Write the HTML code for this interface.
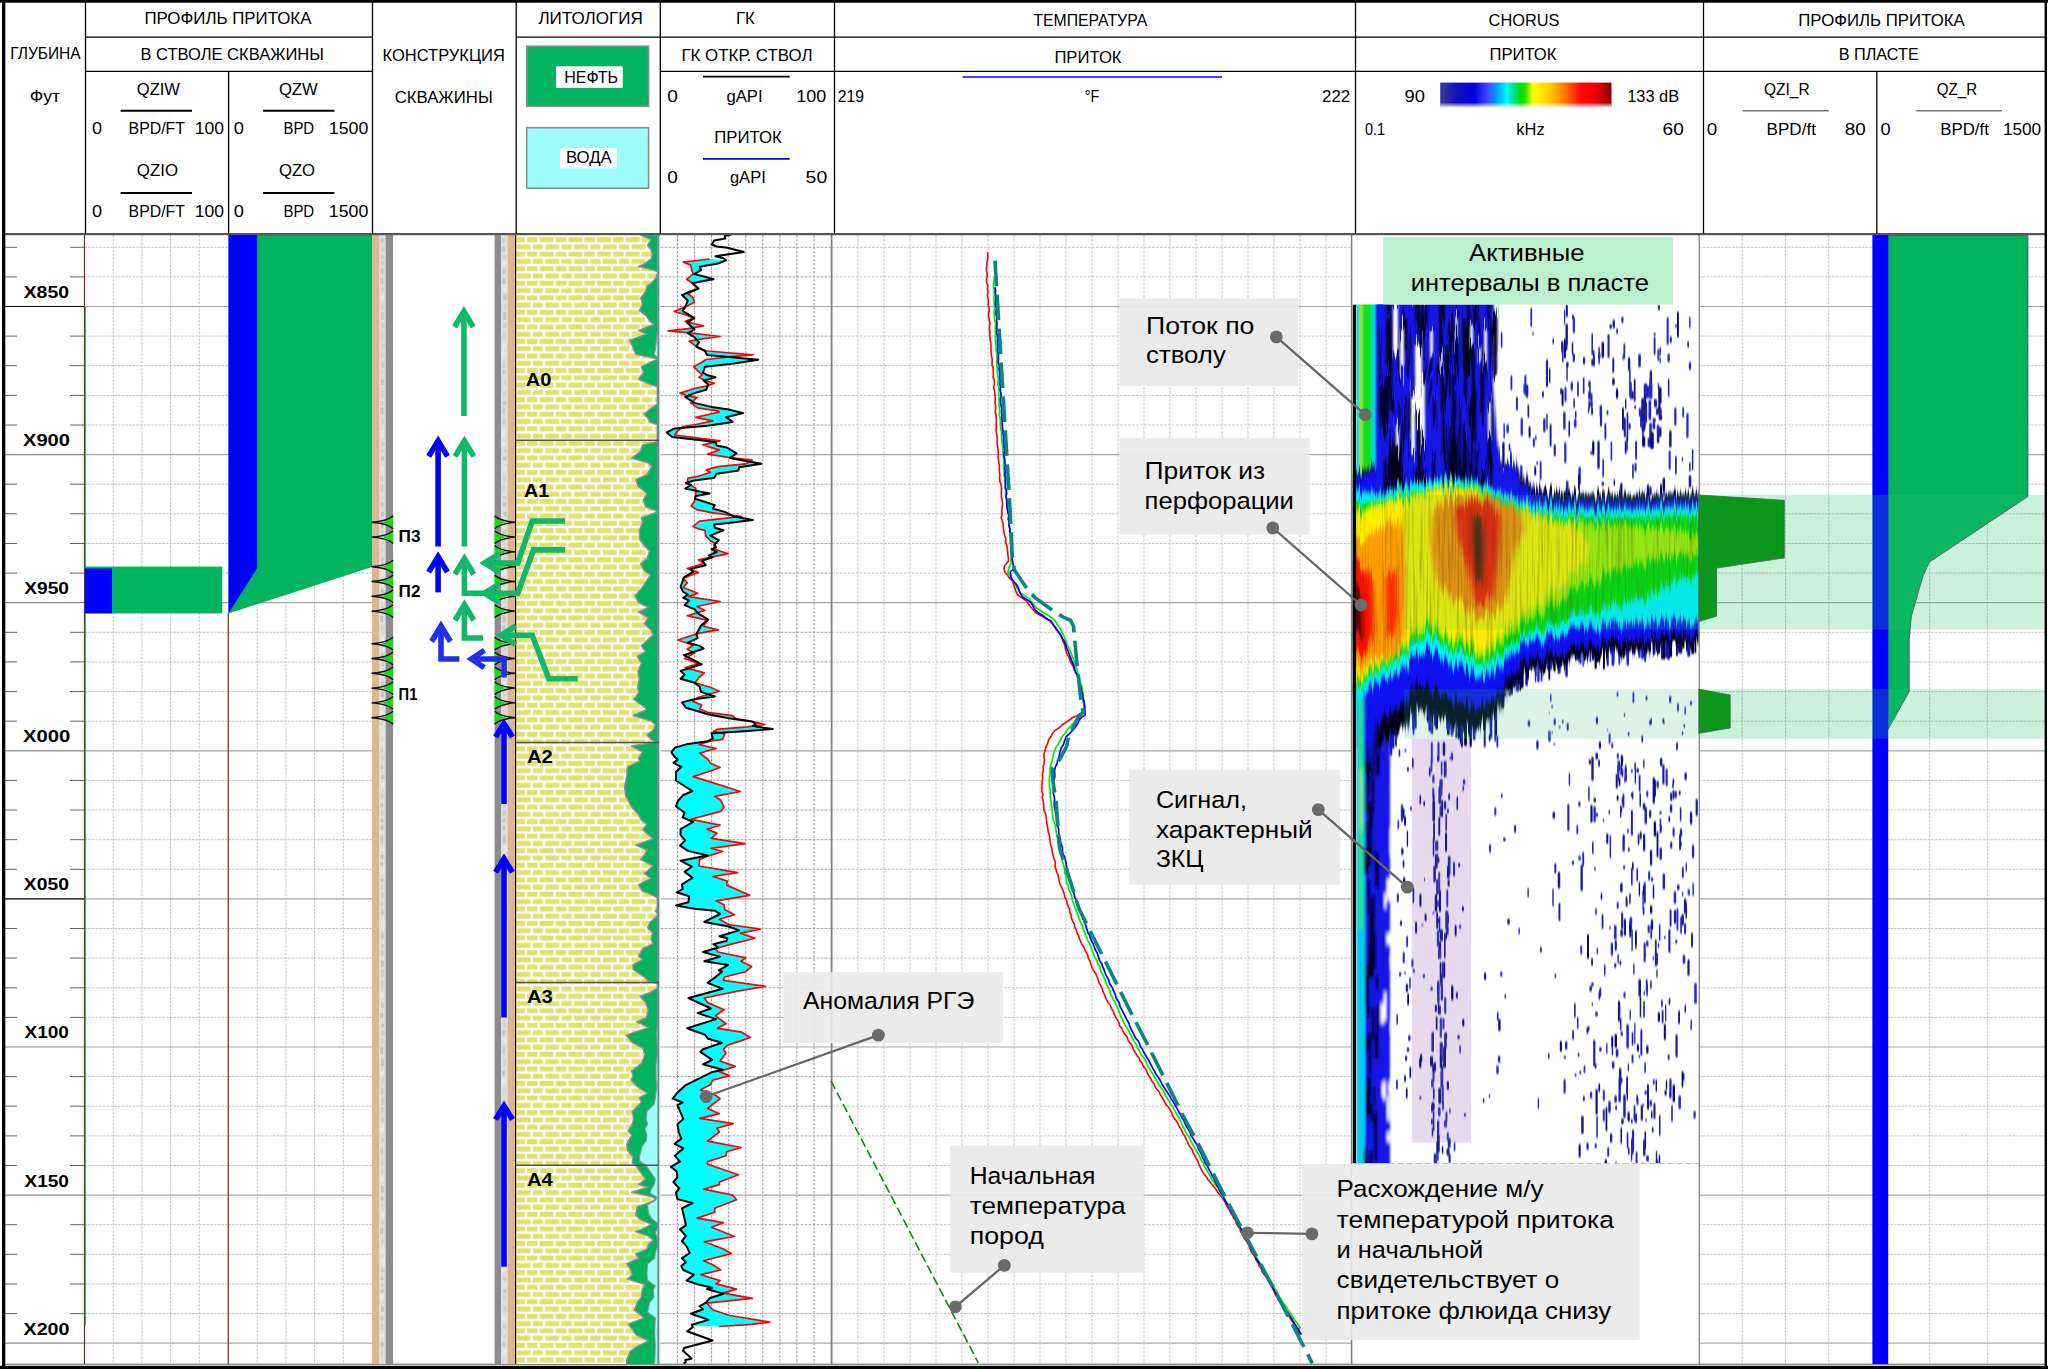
<!DOCTYPE html>
<html lang="ru"><head><meta charset="utf-8"><title>Профиль притока</title>
<style>
html,body{margin:0;padding:0;background:#fff;}
body{width:2048px;height:1369px;overflow:hidden;}
svg{display:block;font-family:"Liberation Sans", sans-serif;}
</style></head><body>
<svg width="2048" height="1369" viewBox="0 0 2048 1369">
<rect x="0" y="0" width="2048" height="1369" fill="#fff" />
<line x1="84.5" y1="247.3" x2="228" y2="247.3" stroke="#bcbcbc" stroke-width="0.9" stroke-dasharray="2.6 1.1"/>
<line x1="84.5" y1="276.9" x2="228" y2="276.9" stroke="#bcbcbc" stroke-width="0.9" stroke-dasharray="2.6 1.1"/>
<line x1="84.5" y1="306.5" x2="228" y2="306.5" stroke="#a8a8a8" stroke-width="1.2" />
<line x1="84.5" y1="336.1" x2="228" y2="336.1" stroke="#bcbcbc" stroke-width="0.9" stroke-dasharray="2.6 1.1"/>
<line x1="84.5" y1="365.7" x2="228" y2="365.7" stroke="#bcbcbc" stroke-width="0.9" stroke-dasharray="2.6 1.1"/>
<line x1="84.5" y1="395.4" x2="228" y2="395.4" stroke="#bcbcbc" stroke-width="0.9" stroke-dasharray="2.6 1.1"/>
<line x1="84.5" y1="425.0" x2="228" y2="425.0" stroke="#bcbcbc" stroke-width="0.9" stroke-dasharray="2.6 1.1"/>
<line x1="84.5" y1="454.6" x2="228" y2="454.6" stroke="#a8a8a8" stroke-width="1.2" />
<line x1="84.5" y1="484.2" x2="228" y2="484.2" stroke="#bcbcbc" stroke-width="0.9" stroke-dasharray="2.6 1.1"/>
<line x1="84.5" y1="513.8" x2="228" y2="513.8" stroke="#bcbcbc" stroke-width="0.9" stroke-dasharray="2.6 1.1"/>
<line x1="84.5" y1="543.5" x2="228" y2="543.5" stroke="#bcbcbc" stroke-width="0.9" stroke-dasharray="2.6 1.1"/>
<line x1="84.5" y1="573.1" x2="228" y2="573.1" stroke="#bcbcbc" stroke-width="0.9" stroke-dasharray="2.6 1.1"/>
<line x1="84.5" y1="602.7" x2="228" y2="602.7" stroke="#a8a8a8" stroke-width="1.2" />
<line x1="84.5" y1="632.3" x2="228" y2="632.3" stroke="#bcbcbc" stroke-width="0.9" stroke-dasharray="2.6 1.1"/>
<line x1="84.5" y1="661.9" x2="228" y2="661.9" stroke="#bcbcbc" stroke-width="0.9" stroke-dasharray="2.6 1.1"/>
<line x1="84.5" y1="691.6" x2="228" y2="691.6" stroke="#bcbcbc" stroke-width="0.9" stroke-dasharray="2.6 1.1"/>
<line x1="84.5" y1="721.2" x2="228" y2="721.2" stroke="#bcbcbc" stroke-width="0.9" stroke-dasharray="2.6 1.1"/>
<line x1="84.5" y1="750.8" x2="228" y2="750.8" stroke="#a8a8a8" stroke-width="1.2" />
<line x1="84.5" y1="780.4" x2="228" y2="780.4" stroke="#bcbcbc" stroke-width="0.9" stroke-dasharray="2.6 1.1"/>
<line x1="84.5" y1="810.0" x2="228" y2="810.0" stroke="#bcbcbc" stroke-width="0.9" stroke-dasharray="2.6 1.1"/>
<line x1="84.5" y1="839.7" x2="228" y2="839.7" stroke="#bcbcbc" stroke-width="0.9" stroke-dasharray="2.6 1.1"/>
<line x1="84.5" y1="869.3" x2="228" y2="869.3" stroke="#bcbcbc" stroke-width="0.9" stroke-dasharray="2.6 1.1"/>
<line x1="84.5" y1="898.9" x2="228" y2="898.9" stroke="#a8a8a8" stroke-width="1.2" />
<line x1="84.5" y1="928.5" x2="228" y2="928.5" stroke="#bcbcbc" stroke-width="0.9" stroke-dasharray="2.6 1.1"/>
<line x1="84.5" y1="958.1" x2="228" y2="958.1" stroke="#bcbcbc" stroke-width="0.9" stroke-dasharray="2.6 1.1"/>
<line x1="84.5" y1="987.8" x2="228" y2="987.8" stroke="#bcbcbc" stroke-width="0.9" stroke-dasharray="2.6 1.1"/>
<line x1="84.5" y1="1017.4" x2="228" y2="1017.4" stroke="#bcbcbc" stroke-width="0.9" stroke-dasharray="2.6 1.1"/>
<line x1="84.5" y1="1047.0" x2="228" y2="1047.0" stroke="#a8a8a8" stroke-width="1.2" />
<line x1="84.5" y1="1076.6" x2="228" y2="1076.6" stroke="#bcbcbc" stroke-width="0.9" stroke-dasharray="2.6 1.1"/>
<line x1="84.5" y1="1106.2" x2="228" y2="1106.2" stroke="#bcbcbc" stroke-width="0.9" stroke-dasharray="2.6 1.1"/>
<line x1="84.5" y1="1135.9" x2="228" y2="1135.9" stroke="#bcbcbc" stroke-width="0.9" stroke-dasharray="2.6 1.1"/>
<line x1="84.5" y1="1165.5" x2="228" y2="1165.5" stroke="#bcbcbc" stroke-width="0.9" stroke-dasharray="2.6 1.1"/>
<line x1="84.5" y1="1195.1" x2="228" y2="1195.1" stroke="#a8a8a8" stroke-width="1.2" />
<line x1="84.5" y1="1224.7" x2="228" y2="1224.7" stroke="#bcbcbc" stroke-width="0.9" stroke-dasharray="2.6 1.1"/>
<line x1="84.5" y1="1254.3" x2="228" y2="1254.3" stroke="#bcbcbc" stroke-width="0.9" stroke-dasharray="2.6 1.1"/>
<line x1="84.5" y1="1284.0" x2="228" y2="1284.0" stroke="#bcbcbc" stroke-width="0.9" stroke-dasharray="2.6 1.1"/>
<line x1="84.5" y1="1313.6" x2="228" y2="1313.6" stroke="#bcbcbc" stroke-width="0.9" stroke-dasharray="2.6 1.1"/>
<line x1="84.5" y1="1343.2" x2="228" y2="1343.2" stroke="#a8a8a8" stroke-width="1.2" />
<line x1="113.2" y1="235" x2="113.2" y2="1364" stroke="#bcbcbc" stroke-width="0.9" stroke-dasharray="2.6 1.1"/>
<line x1="141.9" y1="235" x2="141.9" y2="1364" stroke="#bcbcbc" stroke-width="0.9" stroke-dasharray="2.6 1.1"/>
<line x1="170.6" y1="235" x2="170.6" y2="1364" stroke="#bcbcbc" stroke-width="0.9" stroke-dasharray="2.6 1.1"/>
<line x1="199.3" y1="235" x2="199.3" y2="1364" stroke="#bcbcbc" stroke-width="0.9" stroke-dasharray="2.6 1.1"/>
<line x1="228.5" y1="247.3" x2="372" y2="247.3" stroke="#bcbcbc" stroke-width="0.9" stroke-dasharray="2.6 1.1"/>
<line x1="228.5" y1="276.9" x2="372" y2="276.9" stroke="#bcbcbc" stroke-width="0.9" stroke-dasharray="2.6 1.1"/>
<line x1="228.5" y1="306.5" x2="372" y2="306.5" stroke="#a8a8a8" stroke-width="1.2" />
<line x1="228.5" y1="336.1" x2="372" y2="336.1" stroke="#bcbcbc" stroke-width="0.9" stroke-dasharray="2.6 1.1"/>
<line x1="228.5" y1="365.7" x2="372" y2="365.7" stroke="#bcbcbc" stroke-width="0.9" stroke-dasharray="2.6 1.1"/>
<line x1="228.5" y1="395.4" x2="372" y2="395.4" stroke="#bcbcbc" stroke-width="0.9" stroke-dasharray="2.6 1.1"/>
<line x1="228.5" y1="425.0" x2="372" y2="425.0" stroke="#bcbcbc" stroke-width="0.9" stroke-dasharray="2.6 1.1"/>
<line x1="228.5" y1="454.6" x2="372" y2="454.6" stroke="#a8a8a8" stroke-width="1.2" />
<line x1="228.5" y1="484.2" x2="372" y2="484.2" stroke="#bcbcbc" stroke-width="0.9" stroke-dasharray="2.6 1.1"/>
<line x1="228.5" y1="513.8" x2="372" y2="513.8" stroke="#bcbcbc" stroke-width="0.9" stroke-dasharray="2.6 1.1"/>
<line x1="228.5" y1="543.5" x2="372" y2="543.5" stroke="#bcbcbc" stroke-width="0.9" stroke-dasharray="2.6 1.1"/>
<line x1="228.5" y1="573.1" x2="372" y2="573.1" stroke="#bcbcbc" stroke-width="0.9" stroke-dasharray="2.6 1.1"/>
<line x1="228.5" y1="602.7" x2="372" y2="602.7" stroke="#a8a8a8" stroke-width="1.2" />
<line x1="228.5" y1="632.3" x2="372" y2="632.3" stroke="#bcbcbc" stroke-width="0.9" stroke-dasharray="2.6 1.1"/>
<line x1="228.5" y1="661.9" x2="372" y2="661.9" stroke="#bcbcbc" stroke-width="0.9" stroke-dasharray="2.6 1.1"/>
<line x1="228.5" y1="691.6" x2="372" y2="691.6" stroke="#bcbcbc" stroke-width="0.9" stroke-dasharray="2.6 1.1"/>
<line x1="228.5" y1="721.2" x2="372" y2="721.2" stroke="#bcbcbc" stroke-width="0.9" stroke-dasharray="2.6 1.1"/>
<line x1="228.5" y1="750.8" x2="372" y2="750.8" stroke="#a8a8a8" stroke-width="1.2" />
<line x1="228.5" y1="780.4" x2="372" y2="780.4" stroke="#bcbcbc" stroke-width="0.9" stroke-dasharray="2.6 1.1"/>
<line x1="228.5" y1="810.0" x2="372" y2="810.0" stroke="#bcbcbc" stroke-width="0.9" stroke-dasharray="2.6 1.1"/>
<line x1="228.5" y1="839.7" x2="372" y2="839.7" stroke="#bcbcbc" stroke-width="0.9" stroke-dasharray="2.6 1.1"/>
<line x1="228.5" y1="869.3" x2="372" y2="869.3" stroke="#bcbcbc" stroke-width="0.9" stroke-dasharray="2.6 1.1"/>
<line x1="228.5" y1="898.9" x2="372" y2="898.9" stroke="#a8a8a8" stroke-width="1.2" />
<line x1="228.5" y1="928.5" x2="372" y2="928.5" stroke="#bcbcbc" stroke-width="0.9" stroke-dasharray="2.6 1.1"/>
<line x1="228.5" y1="958.1" x2="372" y2="958.1" stroke="#bcbcbc" stroke-width="0.9" stroke-dasharray="2.6 1.1"/>
<line x1="228.5" y1="987.8" x2="372" y2="987.8" stroke="#bcbcbc" stroke-width="0.9" stroke-dasharray="2.6 1.1"/>
<line x1="228.5" y1="1017.4" x2="372" y2="1017.4" stroke="#bcbcbc" stroke-width="0.9" stroke-dasharray="2.6 1.1"/>
<line x1="228.5" y1="1047.0" x2="372" y2="1047.0" stroke="#a8a8a8" stroke-width="1.2" />
<line x1="228.5" y1="1076.6" x2="372" y2="1076.6" stroke="#bcbcbc" stroke-width="0.9" stroke-dasharray="2.6 1.1"/>
<line x1="228.5" y1="1106.2" x2="372" y2="1106.2" stroke="#bcbcbc" stroke-width="0.9" stroke-dasharray="2.6 1.1"/>
<line x1="228.5" y1="1135.9" x2="372" y2="1135.9" stroke="#bcbcbc" stroke-width="0.9" stroke-dasharray="2.6 1.1"/>
<line x1="228.5" y1="1165.5" x2="372" y2="1165.5" stroke="#bcbcbc" stroke-width="0.9" stroke-dasharray="2.6 1.1"/>
<line x1="228.5" y1="1195.1" x2="372" y2="1195.1" stroke="#a8a8a8" stroke-width="1.2" />
<line x1="228.5" y1="1224.7" x2="372" y2="1224.7" stroke="#bcbcbc" stroke-width="0.9" stroke-dasharray="2.6 1.1"/>
<line x1="228.5" y1="1254.3" x2="372" y2="1254.3" stroke="#bcbcbc" stroke-width="0.9" stroke-dasharray="2.6 1.1"/>
<line x1="228.5" y1="1284.0" x2="372" y2="1284.0" stroke="#bcbcbc" stroke-width="0.9" stroke-dasharray="2.6 1.1"/>
<line x1="228.5" y1="1313.6" x2="372" y2="1313.6" stroke="#bcbcbc" stroke-width="0.9" stroke-dasharray="2.6 1.1"/>
<line x1="228.5" y1="1343.2" x2="372" y2="1343.2" stroke="#a8a8a8" stroke-width="1.2" />
<line x1="257.2" y1="235" x2="257.2" y2="1364" stroke="#bcbcbc" stroke-width="0.9" stroke-dasharray="2.6 1.1"/>
<line x1="285.9" y1="235" x2="285.9" y2="1364" stroke="#bcbcbc" stroke-width="0.9" stroke-dasharray="2.6 1.1"/>
<line x1="314.6" y1="235" x2="314.6" y2="1364" stroke="#bcbcbc" stroke-width="0.9" stroke-dasharray="2.6 1.1"/>
<line x1="343.3" y1="235" x2="343.3" y2="1364" stroke="#bcbcbc" stroke-width="0.9" stroke-dasharray="2.6 1.1"/>
<line x1="660.5" y1="247.3" x2="831" y2="247.3" stroke="#a8a8a8" stroke-width="1" stroke-dasharray="2.8 1.2"/>
<line x1="660.5" y1="276.9" x2="831" y2="276.9" stroke="#a8a8a8" stroke-width="1" stroke-dasharray="2.8 1.2"/>
<line x1="660.5" y1="306.5" x2="831" y2="306.5" stroke="#a8a8a8" stroke-width="1.2" />
<line x1="660.5" y1="336.1" x2="831" y2="336.1" stroke="#a8a8a8" stroke-width="1" stroke-dasharray="2.8 1.2"/>
<line x1="660.5" y1="365.7" x2="831" y2="365.7" stroke="#a8a8a8" stroke-width="1" stroke-dasharray="2.8 1.2"/>
<line x1="660.5" y1="395.4" x2="831" y2="395.4" stroke="#a8a8a8" stroke-width="1" stroke-dasharray="2.8 1.2"/>
<line x1="660.5" y1="425.0" x2="831" y2="425.0" stroke="#a8a8a8" stroke-width="1" stroke-dasharray="2.8 1.2"/>
<line x1="660.5" y1="454.6" x2="831" y2="454.6" stroke="#a8a8a8" stroke-width="1.2" />
<line x1="660.5" y1="484.2" x2="831" y2="484.2" stroke="#a8a8a8" stroke-width="1" stroke-dasharray="2.8 1.2"/>
<line x1="660.5" y1="513.8" x2="831" y2="513.8" stroke="#a8a8a8" stroke-width="1" stroke-dasharray="2.8 1.2"/>
<line x1="660.5" y1="543.5" x2="831" y2="543.5" stroke="#a8a8a8" stroke-width="1" stroke-dasharray="2.8 1.2"/>
<line x1="660.5" y1="573.1" x2="831" y2="573.1" stroke="#a8a8a8" stroke-width="1" stroke-dasharray="2.8 1.2"/>
<line x1="660.5" y1="602.7" x2="831" y2="602.7" stroke="#a8a8a8" stroke-width="1.2" />
<line x1="660.5" y1="632.3" x2="831" y2="632.3" stroke="#a8a8a8" stroke-width="1" stroke-dasharray="2.8 1.2"/>
<line x1="660.5" y1="661.9" x2="831" y2="661.9" stroke="#a8a8a8" stroke-width="1" stroke-dasharray="2.8 1.2"/>
<line x1="660.5" y1="691.6" x2="831" y2="691.6" stroke="#a8a8a8" stroke-width="1" stroke-dasharray="2.8 1.2"/>
<line x1="660.5" y1="721.2" x2="831" y2="721.2" stroke="#a8a8a8" stroke-width="1" stroke-dasharray="2.8 1.2"/>
<line x1="660.5" y1="750.8" x2="831" y2="750.8" stroke="#a8a8a8" stroke-width="1.2" />
<line x1="660.5" y1="780.4" x2="831" y2="780.4" stroke="#a8a8a8" stroke-width="1" stroke-dasharray="2.8 1.2"/>
<line x1="660.5" y1="810.0" x2="831" y2="810.0" stroke="#a8a8a8" stroke-width="1" stroke-dasharray="2.8 1.2"/>
<line x1="660.5" y1="839.7" x2="831" y2="839.7" stroke="#a8a8a8" stroke-width="1" stroke-dasharray="2.8 1.2"/>
<line x1="660.5" y1="869.3" x2="831" y2="869.3" stroke="#a8a8a8" stroke-width="1" stroke-dasharray="2.8 1.2"/>
<line x1="660.5" y1="898.9" x2="831" y2="898.9" stroke="#a8a8a8" stroke-width="1.2" />
<line x1="660.5" y1="928.5" x2="831" y2="928.5" stroke="#a8a8a8" stroke-width="1" stroke-dasharray="2.8 1.2"/>
<line x1="660.5" y1="958.1" x2="831" y2="958.1" stroke="#a8a8a8" stroke-width="1" stroke-dasharray="2.8 1.2"/>
<line x1="660.5" y1="987.8" x2="831" y2="987.8" stroke="#a8a8a8" stroke-width="1" stroke-dasharray="2.8 1.2"/>
<line x1="660.5" y1="1017.4" x2="831" y2="1017.4" stroke="#a8a8a8" stroke-width="1" stroke-dasharray="2.8 1.2"/>
<line x1="660.5" y1="1047.0" x2="831" y2="1047.0" stroke="#a8a8a8" stroke-width="1.2" />
<line x1="660.5" y1="1076.6" x2="831" y2="1076.6" stroke="#a8a8a8" stroke-width="1" stroke-dasharray="2.8 1.2"/>
<line x1="660.5" y1="1106.2" x2="831" y2="1106.2" stroke="#a8a8a8" stroke-width="1" stroke-dasharray="2.8 1.2"/>
<line x1="660.5" y1="1135.9" x2="831" y2="1135.9" stroke="#a8a8a8" stroke-width="1" stroke-dasharray="2.8 1.2"/>
<line x1="660.5" y1="1165.5" x2="831" y2="1165.5" stroke="#a8a8a8" stroke-width="1" stroke-dasharray="2.8 1.2"/>
<line x1="660.5" y1="1195.1" x2="831" y2="1195.1" stroke="#a8a8a8" stroke-width="1.2" />
<line x1="660.5" y1="1224.7" x2="831" y2="1224.7" stroke="#a8a8a8" stroke-width="1" stroke-dasharray="2.8 1.2"/>
<line x1="660.5" y1="1254.3" x2="831" y2="1254.3" stroke="#a8a8a8" stroke-width="1" stroke-dasharray="2.8 1.2"/>
<line x1="660.5" y1="1284.0" x2="831" y2="1284.0" stroke="#a8a8a8" stroke-width="1" stroke-dasharray="2.8 1.2"/>
<line x1="660.5" y1="1313.6" x2="831" y2="1313.6" stroke="#a8a8a8" stroke-width="1" stroke-dasharray="2.8 1.2"/>
<line x1="660.5" y1="1343.2" x2="831" y2="1343.2" stroke="#a8a8a8" stroke-width="1.2" />
<line x1="677.5" y1="235" x2="677.5" y2="1364" stroke="#9c9c9c" stroke-width="1" stroke-dasharray="2.8 1.2"/>
<line x1="694.6" y1="235" x2="694.6" y2="1364" stroke="#9c9c9c" stroke-width="1" stroke-dasharray="2.8 1.2"/>
<line x1="711.6" y1="235" x2="711.6" y2="1364" stroke="#9c9c9c" stroke-width="1" stroke-dasharray="2.8 1.2"/>
<line x1="728.7" y1="235" x2="728.7" y2="1364" stroke="#9c9c9c" stroke-width="1" stroke-dasharray="2.8 1.2"/>
<line x1="745.8" y1="235" x2="745.8" y2="1364" stroke="#9c9c9c" stroke-width="1" stroke-dasharray="2.8 1.2"/>
<line x1="762.8" y1="235" x2="762.8" y2="1364" stroke="#9c9c9c" stroke-width="1" stroke-dasharray="2.8 1.2"/>
<line x1="779.9" y1="235" x2="779.9" y2="1364" stroke="#9c9c9c" stroke-width="1" stroke-dasharray="2.8 1.2"/>
<line x1="796.9" y1="235" x2="796.9" y2="1364" stroke="#9c9c9c" stroke-width="1" stroke-dasharray="2.8 1.2"/>
<line x1="814.0" y1="235" x2="814.0" y2="1364" stroke="#9c9c9c" stroke-width="1" stroke-dasharray="2.8 1.2"/>
<line x1="832" y1="247.3" x2="1352" y2="247.3" stroke="#c2c2c2" stroke-width="0.9" stroke-dasharray="2.8 1.2"/>
<line x1="832" y1="276.9" x2="1352" y2="276.9" stroke="#c2c2c2" stroke-width="0.9" stroke-dasharray="2.8 1.2"/>
<line x1="832" y1="306.5" x2="1352" y2="306.5" stroke="#a8a8a8" stroke-width="1.2" />
<line x1="832" y1="336.1" x2="1352" y2="336.1" stroke="#c2c2c2" stroke-width="0.9" stroke-dasharray="2.8 1.2"/>
<line x1="832" y1="365.7" x2="1352" y2="365.7" stroke="#c2c2c2" stroke-width="0.9" stroke-dasharray="2.8 1.2"/>
<line x1="832" y1="395.4" x2="1352" y2="395.4" stroke="#c2c2c2" stroke-width="0.9" stroke-dasharray="2.8 1.2"/>
<line x1="832" y1="425.0" x2="1352" y2="425.0" stroke="#c2c2c2" stroke-width="0.9" stroke-dasharray="2.8 1.2"/>
<line x1="832" y1="454.6" x2="1352" y2="454.6" stroke="#a8a8a8" stroke-width="1.2" />
<line x1="832" y1="484.2" x2="1352" y2="484.2" stroke="#c2c2c2" stroke-width="0.9" stroke-dasharray="2.8 1.2"/>
<line x1="832" y1="513.8" x2="1352" y2="513.8" stroke="#c2c2c2" stroke-width="0.9" stroke-dasharray="2.8 1.2"/>
<line x1="832" y1="543.5" x2="1352" y2="543.5" stroke="#c2c2c2" stroke-width="0.9" stroke-dasharray="2.8 1.2"/>
<line x1="832" y1="573.1" x2="1352" y2="573.1" stroke="#c2c2c2" stroke-width="0.9" stroke-dasharray="2.8 1.2"/>
<line x1="832" y1="602.7" x2="1352" y2="602.7" stroke="#a8a8a8" stroke-width="1.2" />
<line x1="832" y1="632.3" x2="1352" y2="632.3" stroke="#c2c2c2" stroke-width="0.9" stroke-dasharray="2.8 1.2"/>
<line x1="832" y1="661.9" x2="1352" y2="661.9" stroke="#c2c2c2" stroke-width="0.9" stroke-dasharray="2.8 1.2"/>
<line x1="832" y1="691.6" x2="1352" y2="691.6" stroke="#c2c2c2" stroke-width="0.9" stroke-dasharray="2.8 1.2"/>
<line x1="832" y1="721.2" x2="1352" y2="721.2" stroke="#c2c2c2" stroke-width="0.9" stroke-dasharray="2.8 1.2"/>
<line x1="832" y1="750.8" x2="1352" y2="750.8" stroke="#a8a8a8" stroke-width="1.2" />
<line x1="832" y1="780.4" x2="1352" y2="780.4" stroke="#c2c2c2" stroke-width="0.9" stroke-dasharray="2.8 1.2"/>
<line x1="832" y1="810.0" x2="1352" y2="810.0" stroke="#c2c2c2" stroke-width="0.9" stroke-dasharray="2.8 1.2"/>
<line x1="832" y1="839.7" x2="1352" y2="839.7" stroke="#c2c2c2" stroke-width="0.9" stroke-dasharray="2.8 1.2"/>
<line x1="832" y1="869.3" x2="1352" y2="869.3" stroke="#c2c2c2" stroke-width="0.9" stroke-dasharray="2.8 1.2"/>
<line x1="832" y1="898.9" x2="1352" y2="898.9" stroke="#a8a8a8" stroke-width="1.2" />
<line x1="832" y1="928.5" x2="1352" y2="928.5" stroke="#c2c2c2" stroke-width="0.9" stroke-dasharray="2.8 1.2"/>
<line x1="832" y1="958.1" x2="1352" y2="958.1" stroke="#c2c2c2" stroke-width="0.9" stroke-dasharray="2.8 1.2"/>
<line x1="832" y1="987.8" x2="1352" y2="987.8" stroke="#c2c2c2" stroke-width="0.9" stroke-dasharray="2.8 1.2"/>
<line x1="832" y1="1017.4" x2="1352" y2="1017.4" stroke="#c2c2c2" stroke-width="0.9" stroke-dasharray="2.8 1.2"/>
<line x1="832" y1="1047.0" x2="1352" y2="1047.0" stroke="#a8a8a8" stroke-width="1.2" />
<line x1="832" y1="1076.6" x2="1352" y2="1076.6" stroke="#c2c2c2" stroke-width="0.9" stroke-dasharray="2.8 1.2"/>
<line x1="832" y1="1106.2" x2="1352" y2="1106.2" stroke="#c2c2c2" stroke-width="0.9" stroke-dasharray="2.8 1.2"/>
<line x1="832" y1="1135.9" x2="1352" y2="1135.9" stroke="#c2c2c2" stroke-width="0.9" stroke-dasharray="2.8 1.2"/>
<line x1="832" y1="1165.5" x2="1352" y2="1165.5" stroke="#c2c2c2" stroke-width="0.9" stroke-dasharray="2.8 1.2"/>
<line x1="832" y1="1195.1" x2="1352" y2="1195.1" stroke="#a8a8a8" stroke-width="1.2" />
<line x1="832" y1="1224.7" x2="1352" y2="1224.7" stroke="#c2c2c2" stroke-width="0.9" stroke-dasharray="2.8 1.2"/>
<line x1="832" y1="1254.3" x2="1352" y2="1254.3" stroke="#c2c2c2" stroke-width="0.9" stroke-dasharray="2.8 1.2"/>
<line x1="832" y1="1284.0" x2="1352" y2="1284.0" stroke="#c2c2c2" stroke-width="0.9" stroke-dasharray="2.8 1.2"/>
<line x1="832" y1="1313.6" x2="1352" y2="1313.6" stroke="#c2c2c2" stroke-width="0.9" stroke-dasharray="2.8 1.2"/>
<line x1="832" y1="1343.2" x2="1352" y2="1343.2" stroke="#a8a8a8" stroke-width="1.2" />
<line x1="858.0" y1="235" x2="858.0" y2="1364" stroke="#c2c2c2" stroke-width="0.9" stroke-dasharray="2.8 1.2"/>
<line x1="884.0" y1="235" x2="884.0" y2="1364" stroke="#c2c2c2" stroke-width="0.9" stroke-dasharray="2.8 1.2"/>
<line x1="910.0" y1="235" x2="910.0" y2="1364" stroke="#c2c2c2" stroke-width="0.9" stroke-dasharray="2.8 1.2"/>
<line x1="936.0" y1="235" x2="936.0" y2="1364" stroke="#c2c2c2" stroke-width="0.9" stroke-dasharray="2.8 1.2"/>
<line x1="962.0" y1="235" x2="962.0" y2="1364" stroke="#c2c2c2" stroke-width="0.9" stroke-dasharray="2.8 1.2"/>
<line x1="988.0" y1="235" x2="988.0" y2="1364" stroke="#c2c2c2" stroke-width="0.9" stroke-dasharray="2.8 1.2"/>
<line x1="1014.0" y1="235" x2="1014.0" y2="1364" stroke="#c2c2c2" stroke-width="0.9" stroke-dasharray="2.8 1.2"/>
<line x1="1040.0" y1="235" x2="1040.0" y2="1364" stroke="#c2c2c2" stroke-width="0.9" stroke-dasharray="2.8 1.2"/>
<line x1="1066.0" y1="235" x2="1066.0" y2="1364" stroke="#c2c2c2" stroke-width="0.9" stroke-dasharray="2.8 1.2"/>
<line x1="1092.0" y1="235" x2="1092.0" y2="1364" stroke="#c2c2c2" stroke-width="0.9" stroke-dasharray="2.8 1.2"/>
<line x1="1118.0" y1="235" x2="1118.0" y2="1364" stroke="#c2c2c2" stroke-width="0.9" stroke-dasharray="2.8 1.2"/>
<line x1="1144.0" y1="235" x2="1144.0" y2="1364" stroke="#c2c2c2" stroke-width="0.9" stroke-dasharray="2.8 1.2"/>
<line x1="1170.0" y1="235" x2="1170.0" y2="1364" stroke="#c2c2c2" stroke-width="0.9" stroke-dasharray="2.8 1.2"/>
<line x1="1196.0" y1="235" x2="1196.0" y2="1364" stroke="#c2c2c2" stroke-width="0.9" stroke-dasharray="2.8 1.2"/>
<line x1="1222.0" y1="235" x2="1222.0" y2="1364" stroke="#c2c2c2" stroke-width="0.9" stroke-dasharray="2.8 1.2"/>
<line x1="1248.0" y1="235" x2="1248.0" y2="1364" stroke="#c2c2c2" stroke-width="0.9" stroke-dasharray="2.8 1.2"/>
<line x1="1274.0" y1="235" x2="1274.0" y2="1364" stroke="#c2c2c2" stroke-width="0.9" stroke-dasharray="2.8 1.2"/>
<line x1="1300.0" y1="235" x2="1300.0" y2="1364" stroke="#c2c2c2" stroke-width="0.9" stroke-dasharray="2.8 1.2"/>
<line x1="1326.0" y1="235" x2="1326.0" y2="1364" stroke="#c2c2c2" stroke-width="0.9" stroke-dasharray="2.8 1.2"/>
<line x1="1699" y1="247.3" x2="1872" y2="247.3" stroke="#bcbcbc" stroke-width="0.9" stroke-dasharray="2.6 1.1"/>
<line x1="1699" y1="276.9" x2="1872" y2="276.9" stroke="#bcbcbc" stroke-width="0.9" stroke-dasharray="2.6 1.1"/>
<line x1="1699" y1="306.5" x2="1872" y2="306.5" stroke="#a8a8a8" stroke-width="1.2" />
<line x1="1699" y1="336.1" x2="1872" y2="336.1" stroke="#bcbcbc" stroke-width="0.9" stroke-dasharray="2.6 1.1"/>
<line x1="1699" y1="365.7" x2="1872" y2="365.7" stroke="#bcbcbc" stroke-width="0.9" stroke-dasharray="2.6 1.1"/>
<line x1="1699" y1="395.4" x2="1872" y2="395.4" stroke="#bcbcbc" stroke-width="0.9" stroke-dasharray="2.6 1.1"/>
<line x1="1699" y1="425.0" x2="1872" y2="425.0" stroke="#bcbcbc" stroke-width="0.9" stroke-dasharray="2.6 1.1"/>
<line x1="1699" y1="454.6" x2="1872" y2="454.6" stroke="#a8a8a8" stroke-width="1.2" />
<line x1="1699" y1="484.2" x2="1872" y2="484.2" stroke="#bcbcbc" stroke-width="0.9" stroke-dasharray="2.6 1.1"/>
<line x1="1699" y1="513.8" x2="1872" y2="513.8" stroke="#bcbcbc" stroke-width="0.9" stroke-dasharray="2.6 1.1"/>
<line x1="1699" y1="543.5" x2="1872" y2="543.5" stroke="#bcbcbc" stroke-width="0.9" stroke-dasharray="2.6 1.1"/>
<line x1="1699" y1="573.1" x2="1872" y2="573.1" stroke="#bcbcbc" stroke-width="0.9" stroke-dasharray="2.6 1.1"/>
<line x1="1699" y1="602.7" x2="1872" y2="602.7" stroke="#a8a8a8" stroke-width="1.2" />
<line x1="1699" y1="632.3" x2="1872" y2="632.3" stroke="#bcbcbc" stroke-width="0.9" stroke-dasharray="2.6 1.1"/>
<line x1="1699" y1="661.9" x2="1872" y2="661.9" stroke="#bcbcbc" stroke-width="0.9" stroke-dasharray="2.6 1.1"/>
<line x1="1699" y1="691.6" x2="1872" y2="691.6" stroke="#bcbcbc" stroke-width="0.9" stroke-dasharray="2.6 1.1"/>
<line x1="1699" y1="721.2" x2="1872" y2="721.2" stroke="#bcbcbc" stroke-width="0.9" stroke-dasharray="2.6 1.1"/>
<line x1="1699" y1="750.8" x2="1872" y2="750.8" stroke="#a8a8a8" stroke-width="1.2" />
<line x1="1699" y1="780.4" x2="1872" y2="780.4" stroke="#bcbcbc" stroke-width="0.9" stroke-dasharray="2.6 1.1"/>
<line x1="1699" y1="810.0" x2="1872" y2="810.0" stroke="#bcbcbc" stroke-width="0.9" stroke-dasharray="2.6 1.1"/>
<line x1="1699" y1="839.7" x2="1872" y2="839.7" stroke="#bcbcbc" stroke-width="0.9" stroke-dasharray="2.6 1.1"/>
<line x1="1699" y1="869.3" x2="1872" y2="869.3" stroke="#bcbcbc" stroke-width="0.9" stroke-dasharray="2.6 1.1"/>
<line x1="1699" y1="898.9" x2="1872" y2="898.9" stroke="#a8a8a8" stroke-width="1.2" />
<line x1="1699" y1="928.5" x2="1872" y2="928.5" stroke="#bcbcbc" stroke-width="0.9" stroke-dasharray="2.6 1.1"/>
<line x1="1699" y1="958.1" x2="1872" y2="958.1" stroke="#bcbcbc" stroke-width="0.9" stroke-dasharray="2.6 1.1"/>
<line x1="1699" y1="987.8" x2="1872" y2="987.8" stroke="#bcbcbc" stroke-width="0.9" stroke-dasharray="2.6 1.1"/>
<line x1="1699" y1="1017.4" x2="1872" y2="1017.4" stroke="#bcbcbc" stroke-width="0.9" stroke-dasharray="2.6 1.1"/>
<line x1="1699" y1="1047.0" x2="1872" y2="1047.0" stroke="#a8a8a8" stroke-width="1.2" />
<line x1="1699" y1="1076.6" x2="1872" y2="1076.6" stroke="#bcbcbc" stroke-width="0.9" stroke-dasharray="2.6 1.1"/>
<line x1="1699" y1="1106.2" x2="1872" y2="1106.2" stroke="#bcbcbc" stroke-width="0.9" stroke-dasharray="2.6 1.1"/>
<line x1="1699" y1="1135.9" x2="1872" y2="1135.9" stroke="#bcbcbc" stroke-width="0.9" stroke-dasharray="2.6 1.1"/>
<line x1="1699" y1="1165.5" x2="1872" y2="1165.5" stroke="#bcbcbc" stroke-width="0.9" stroke-dasharray="2.6 1.1"/>
<line x1="1699" y1="1195.1" x2="1872" y2="1195.1" stroke="#a8a8a8" stroke-width="1.2" />
<line x1="1699" y1="1224.7" x2="1872" y2="1224.7" stroke="#bcbcbc" stroke-width="0.9" stroke-dasharray="2.6 1.1"/>
<line x1="1699" y1="1254.3" x2="1872" y2="1254.3" stroke="#bcbcbc" stroke-width="0.9" stroke-dasharray="2.6 1.1"/>
<line x1="1699" y1="1284.0" x2="1872" y2="1284.0" stroke="#bcbcbc" stroke-width="0.9" stroke-dasharray="2.6 1.1"/>
<line x1="1699" y1="1313.6" x2="1872" y2="1313.6" stroke="#bcbcbc" stroke-width="0.9" stroke-dasharray="2.6 1.1"/>
<line x1="1699" y1="1343.2" x2="1872" y2="1343.2" stroke="#a8a8a8" stroke-width="1.2" />
<line x1="1742.2" y1="235" x2="1742.2" y2="1364" stroke="#bcbcbc" stroke-width="0.9" stroke-dasharray="2.6 1.1"/>
<line x1="1785.5" y1="235" x2="1785.5" y2="1364" stroke="#bcbcbc" stroke-width="0.9" stroke-dasharray="2.6 1.1"/>
<line x1="1828.8" y1="235" x2="1828.8" y2="1364" stroke="#bcbcbc" stroke-width="0.9" stroke-dasharray="2.6 1.1"/>
<line x1="1872" y1="247.3" x2="2045" y2="247.3" stroke="#bcbcbc" stroke-width="0.9" stroke-dasharray="2.6 1.1"/>
<line x1="1872" y1="276.9" x2="2045" y2="276.9" stroke="#bcbcbc" stroke-width="0.9" stroke-dasharray="2.6 1.1"/>
<line x1="1872" y1="306.5" x2="2045" y2="306.5" stroke="#a8a8a8" stroke-width="1.2" />
<line x1="1872" y1="336.1" x2="2045" y2="336.1" stroke="#bcbcbc" stroke-width="0.9" stroke-dasharray="2.6 1.1"/>
<line x1="1872" y1="365.7" x2="2045" y2="365.7" stroke="#bcbcbc" stroke-width="0.9" stroke-dasharray="2.6 1.1"/>
<line x1="1872" y1="395.4" x2="2045" y2="395.4" stroke="#bcbcbc" stroke-width="0.9" stroke-dasharray="2.6 1.1"/>
<line x1="1872" y1="425.0" x2="2045" y2="425.0" stroke="#bcbcbc" stroke-width="0.9" stroke-dasharray="2.6 1.1"/>
<line x1="1872" y1="454.6" x2="2045" y2="454.6" stroke="#a8a8a8" stroke-width="1.2" />
<line x1="1872" y1="484.2" x2="2045" y2="484.2" stroke="#bcbcbc" stroke-width="0.9" stroke-dasharray="2.6 1.1"/>
<line x1="1872" y1="513.8" x2="2045" y2="513.8" stroke="#bcbcbc" stroke-width="0.9" stroke-dasharray="2.6 1.1"/>
<line x1="1872" y1="543.5" x2="2045" y2="543.5" stroke="#bcbcbc" stroke-width="0.9" stroke-dasharray="2.6 1.1"/>
<line x1="1872" y1="573.1" x2="2045" y2="573.1" stroke="#bcbcbc" stroke-width="0.9" stroke-dasharray="2.6 1.1"/>
<line x1="1872" y1="602.7" x2="2045" y2="602.7" stroke="#a8a8a8" stroke-width="1.2" />
<line x1="1872" y1="632.3" x2="2045" y2="632.3" stroke="#bcbcbc" stroke-width="0.9" stroke-dasharray="2.6 1.1"/>
<line x1="1872" y1="661.9" x2="2045" y2="661.9" stroke="#bcbcbc" stroke-width="0.9" stroke-dasharray="2.6 1.1"/>
<line x1="1872" y1="691.6" x2="2045" y2="691.6" stroke="#bcbcbc" stroke-width="0.9" stroke-dasharray="2.6 1.1"/>
<line x1="1872" y1="721.2" x2="2045" y2="721.2" stroke="#bcbcbc" stroke-width="0.9" stroke-dasharray="2.6 1.1"/>
<line x1="1872" y1="750.8" x2="2045" y2="750.8" stroke="#a8a8a8" stroke-width="1.2" />
<line x1="1872" y1="780.4" x2="2045" y2="780.4" stroke="#bcbcbc" stroke-width="0.9" stroke-dasharray="2.6 1.1"/>
<line x1="1872" y1="810.0" x2="2045" y2="810.0" stroke="#bcbcbc" stroke-width="0.9" stroke-dasharray="2.6 1.1"/>
<line x1="1872" y1="839.7" x2="2045" y2="839.7" stroke="#bcbcbc" stroke-width="0.9" stroke-dasharray="2.6 1.1"/>
<line x1="1872" y1="869.3" x2="2045" y2="869.3" stroke="#bcbcbc" stroke-width="0.9" stroke-dasharray="2.6 1.1"/>
<line x1="1872" y1="898.9" x2="2045" y2="898.9" stroke="#a8a8a8" stroke-width="1.2" />
<line x1="1872" y1="928.5" x2="2045" y2="928.5" stroke="#bcbcbc" stroke-width="0.9" stroke-dasharray="2.6 1.1"/>
<line x1="1872" y1="958.1" x2="2045" y2="958.1" stroke="#bcbcbc" stroke-width="0.9" stroke-dasharray="2.6 1.1"/>
<line x1="1872" y1="987.8" x2="2045" y2="987.8" stroke="#bcbcbc" stroke-width="0.9" stroke-dasharray="2.6 1.1"/>
<line x1="1872" y1="1017.4" x2="2045" y2="1017.4" stroke="#bcbcbc" stroke-width="0.9" stroke-dasharray="2.6 1.1"/>
<line x1="1872" y1="1047.0" x2="2045" y2="1047.0" stroke="#a8a8a8" stroke-width="1.2" />
<line x1="1872" y1="1076.6" x2="2045" y2="1076.6" stroke="#bcbcbc" stroke-width="0.9" stroke-dasharray="2.6 1.1"/>
<line x1="1872" y1="1106.2" x2="2045" y2="1106.2" stroke="#bcbcbc" stroke-width="0.9" stroke-dasharray="2.6 1.1"/>
<line x1="1872" y1="1135.9" x2="2045" y2="1135.9" stroke="#bcbcbc" stroke-width="0.9" stroke-dasharray="2.6 1.1"/>
<line x1="1872" y1="1165.5" x2="2045" y2="1165.5" stroke="#bcbcbc" stroke-width="0.9" stroke-dasharray="2.6 1.1"/>
<line x1="1872" y1="1195.1" x2="2045" y2="1195.1" stroke="#a8a8a8" stroke-width="1.2" />
<line x1="1872" y1="1224.7" x2="2045" y2="1224.7" stroke="#bcbcbc" stroke-width="0.9" stroke-dasharray="2.6 1.1"/>
<line x1="1872" y1="1254.3" x2="2045" y2="1254.3" stroke="#bcbcbc" stroke-width="0.9" stroke-dasharray="2.6 1.1"/>
<line x1="1872" y1="1284.0" x2="2045" y2="1284.0" stroke="#bcbcbc" stroke-width="0.9" stroke-dasharray="2.6 1.1"/>
<line x1="1872" y1="1313.6" x2="2045" y2="1313.6" stroke="#bcbcbc" stroke-width="0.9" stroke-dasharray="2.6 1.1"/>
<line x1="1872" y1="1343.2" x2="2045" y2="1343.2" stroke="#a8a8a8" stroke-width="1.2" />
<line x1="1929.7" y1="235" x2="1929.7" y2="1364" stroke="#bcbcbc" stroke-width="0.9" stroke-dasharray="2.6 1.1"/>
<line x1="1987.3" y1="235" x2="1987.3" y2="1364" stroke="#bcbcbc" stroke-width="0.9" stroke-dasharray="2.6 1.1"/>
<line x1="5" y1="247.3" x2="17" y2="247.3" stroke="#555" stroke-width="0.9" />
<line x1="70" y1="247.3" x2="84.5" y2="247.3" stroke="#555" stroke-width="0.9" />
<line x1="5" y1="276.9" x2="17" y2="276.9" stroke="#555" stroke-width="0.9" />
<line x1="70" y1="276.9" x2="84.5" y2="276.9" stroke="#555" stroke-width="0.9" />
<line x1="5" y1="306.5" x2="84.5" y2="306.5" stroke="#000" stroke-width="1.2" />
<line x1="5" y1="336.1" x2="17" y2="336.1" stroke="#555" stroke-width="0.9" />
<line x1="70" y1="336.1" x2="84.5" y2="336.1" stroke="#555" stroke-width="0.9" />
<line x1="5" y1="365.7" x2="17" y2="365.7" stroke="#555" stroke-width="0.9" />
<line x1="70" y1="365.7" x2="84.5" y2="365.7" stroke="#555" stroke-width="0.9" />
<line x1="5" y1="395.4" x2="17" y2="395.4" stroke="#555" stroke-width="0.9" />
<line x1="70" y1="395.4" x2="84.5" y2="395.4" stroke="#555" stroke-width="0.9" />
<line x1="5" y1="425.0" x2="17" y2="425.0" stroke="#555" stroke-width="0.9" />
<line x1="70" y1="425.0" x2="84.5" y2="425.0" stroke="#555" stroke-width="0.9" />
<line x1="5" y1="454.6" x2="84.5" y2="454.6" stroke="#8a8a8a" stroke-width="1.2" />
<line x1="5" y1="484.2" x2="17" y2="484.2" stroke="#555" stroke-width="0.9" />
<line x1="70" y1="484.2" x2="84.5" y2="484.2" stroke="#555" stroke-width="0.9" />
<line x1="5" y1="513.8" x2="17" y2="513.8" stroke="#555" stroke-width="0.9" />
<line x1="70" y1="513.8" x2="84.5" y2="513.8" stroke="#555" stroke-width="0.9" />
<line x1="5" y1="543.5" x2="17" y2="543.5" stroke="#555" stroke-width="0.9" />
<line x1="70" y1="543.5" x2="84.5" y2="543.5" stroke="#555" stroke-width="0.9" />
<line x1="5" y1="573.1" x2="17" y2="573.1" stroke="#555" stroke-width="0.9" />
<line x1="70" y1="573.1" x2="84.5" y2="573.1" stroke="#555" stroke-width="0.9" />
<line x1="5" y1="602.7" x2="84.5" y2="602.7" stroke="#8a8a8a" stroke-width="1.2" />
<line x1="5" y1="632.3" x2="17" y2="632.3" stroke="#555" stroke-width="0.9" />
<line x1="70" y1="632.3" x2="84.5" y2="632.3" stroke="#555" stroke-width="0.9" />
<line x1="5" y1="661.9" x2="17" y2="661.9" stroke="#555" stroke-width="0.9" />
<line x1="70" y1="661.9" x2="84.5" y2="661.9" stroke="#555" stroke-width="0.9" />
<line x1="5" y1="691.6" x2="17" y2="691.6" stroke="#555" stroke-width="0.9" />
<line x1="70" y1="691.6" x2="84.5" y2="691.6" stroke="#555" stroke-width="0.9" />
<line x1="5" y1="721.2" x2="17" y2="721.2" stroke="#555" stroke-width="0.9" />
<line x1="70" y1="721.2" x2="84.5" y2="721.2" stroke="#555" stroke-width="0.9" />
<line x1="5" y1="750.8" x2="84.5" y2="750.8" stroke="#8a8a8a" stroke-width="1.2" />
<line x1="5" y1="780.4" x2="17" y2="780.4" stroke="#555" stroke-width="0.9" />
<line x1="70" y1="780.4" x2="84.5" y2="780.4" stroke="#555" stroke-width="0.9" />
<line x1="5" y1="810.0" x2="17" y2="810.0" stroke="#555" stroke-width="0.9" />
<line x1="70" y1="810.0" x2="84.5" y2="810.0" stroke="#555" stroke-width="0.9" />
<line x1="5" y1="839.7" x2="17" y2="839.7" stroke="#555" stroke-width="0.9" />
<line x1="70" y1="839.7" x2="84.5" y2="839.7" stroke="#555" stroke-width="0.9" />
<line x1="5" y1="869.3" x2="17" y2="869.3" stroke="#555" stroke-width="0.9" />
<line x1="70" y1="869.3" x2="84.5" y2="869.3" stroke="#555" stroke-width="0.9" />
<line x1="5" y1="898.9" x2="84.5" y2="898.9" stroke="#000" stroke-width="1.2" />
<line x1="5" y1="928.5" x2="17" y2="928.5" stroke="#555" stroke-width="0.9" />
<line x1="70" y1="928.5" x2="84.5" y2="928.5" stroke="#555" stroke-width="0.9" />
<line x1="5" y1="958.1" x2="17" y2="958.1" stroke="#555" stroke-width="0.9" />
<line x1="70" y1="958.1" x2="84.5" y2="958.1" stroke="#555" stroke-width="0.9" />
<line x1="5" y1="987.8" x2="17" y2="987.8" stroke="#555" stroke-width="0.9" />
<line x1="70" y1="987.8" x2="84.5" y2="987.8" stroke="#555" stroke-width="0.9" />
<line x1="5" y1="1017.4" x2="17" y2="1017.4" stroke="#555" stroke-width="0.9" />
<line x1="70" y1="1017.4" x2="84.5" y2="1017.4" stroke="#555" stroke-width="0.9" />
<line x1="5" y1="1047.0" x2="84.5" y2="1047.0" stroke="#8a8a8a" stroke-width="1.2" />
<line x1="5" y1="1076.6" x2="17" y2="1076.6" stroke="#555" stroke-width="0.9" />
<line x1="70" y1="1076.6" x2="84.5" y2="1076.6" stroke="#555" stroke-width="0.9" />
<line x1="5" y1="1106.2" x2="17" y2="1106.2" stroke="#555" stroke-width="0.9" />
<line x1="70" y1="1106.2" x2="84.5" y2="1106.2" stroke="#555" stroke-width="0.9" />
<line x1="5" y1="1135.9" x2="17" y2="1135.9" stroke="#555" stroke-width="0.9" />
<line x1="70" y1="1135.9" x2="84.5" y2="1135.9" stroke="#555" stroke-width="0.9" />
<line x1="5" y1="1165.5" x2="17" y2="1165.5" stroke="#555" stroke-width="0.9" />
<line x1="70" y1="1165.5" x2="84.5" y2="1165.5" stroke="#555" stroke-width="0.9" />
<line x1="5" y1="1195.1" x2="84.5" y2="1195.1" stroke="#8a8a8a" stroke-width="1.2" />
<line x1="5" y1="1224.7" x2="17" y2="1224.7" stroke="#555" stroke-width="0.9" />
<line x1="70" y1="1224.7" x2="84.5" y2="1224.7" stroke="#555" stroke-width="0.9" />
<line x1="5" y1="1254.3" x2="17" y2="1254.3" stroke="#555" stroke-width="0.9" />
<line x1="70" y1="1254.3" x2="84.5" y2="1254.3" stroke="#555" stroke-width="0.9" />
<line x1="5" y1="1284.0" x2="17" y2="1284.0" stroke="#555" stroke-width="0.9" />
<line x1="70" y1="1284.0" x2="84.5" y2="1284.0" stroke="#555" stroke-width="0.9" />
<line x1="5" y1="1313.6" x2="17" y2="1313.6" stroke="#555" stroke-width="0.9" />
<line x1="70" y1="1313.6" x2="84.5" y2="1313.6" stroke="#555" stroke-width="0.9" />
<line x1="5" y1="1343.2" x2="84.5" y2="1343.2" stroke="#8a8a8a" stroke-width="1.2" />
<text x="23.7" y="297.9" font-size="17" textLength="45.3" lengthAdjust="spacingAndGlyphs" font-weight="bold" fill="#000">X850</text>
<text x="23.0" y="446.0" font-size="17" textLength="47.0" lengthAdjust="spacingAndGlyphs" font-weight="bold" fill="#000">X900</text>
<text x="24.3" y="594.1" font-size="17" textLength="44.6" lengthAdjust="spacingAndGlyphs" font-weight="bold" fill="#000">X950</text>
<text x="23.0" y="742.2" font-size="17" textLength="47.3" lengthAdjust="spacingAndGlyphs" font-weight="bold" fill="#000">X000</text>
<text x="23.8" y="890.3" font-size="17" textLength="45.1" lengthAdjust="spacingAndGlyphs" font-weight="bold" fill="#000">X050</text>
<text x="24.5" y="1038.4" font-size="17" textLength="44.4" lengthAdjust="spacingAndGlyphs" font-weight="bold" fill="#000">X100</text>
<text x="24.5" y="1186.5" font-size="17" textLength="44.4" lengthAdjust="spacingAndGlyphs" font-weight="bold" fill="#000">X150</text>
<text x="23.5" y="1334.6" font-size="17" textLength="46.0" lengthAdjust="spacingAndGlyphs" font-weight="bold" fill="#000">X200</text>
<rect x="5" y="1363.6" width="2040" height="1.4" fill="#8a8a8a" />
<line x1="84.5" y1="235" x2="84.5" y2="1364" stroke="#7a2a1a" stroke-width="1.2" />
<line x1="85.4" y1="307" x2="85.4" y2="1325.5" stroke="#00b050" stroke-width="0.9" />
<line x1="228.3" y1="613" x2="228.3" y2="1364" stroke="#8a4a2a" stroke-width="1.4" />
<line x1="831.6" y1="235" x2="831.6" y2="1364" stroke="#808080" stroke-width="1.8" />
<line x1="1351.7" y1="235" x2="1351.7" y2="1364" stroke="#808080" stroke-width="1.8" />
<line x1="1699.0" y1="235" x2="1699.0" y2="1364" stroke="#808080" stroke-width="1.8" />
<rect x="85" y="566.6" width="137.2" height="46.8" fill="#00b35f" />
<rect x="85" y="568.5" width="27" height="44.9" fill="#0000ff" />
<polygon points="228.5,235 372,235 372,567 228.5,613.5" fill="#00b35f"/>
<polygon points="228.5,235 257.2,235 257.2,568 228.5,613.5" fill="#0000ff"/>
<rect x="372" y="235" width="7.2" height="1129" fill="#dcb98a" />
<rect x="379" y="235" width="6.9" height="1129" fill="#dedede" />
<rect x="385.7" y="235" width="7.4" height="1129" fill="#8c8c8c" />
<rect x="494.6" y="235" width="6.6" height="1129" fill="#8c8c8c" />
<rect x="501" y="235" width="6.8" height="1129" fill="#dedede" />
<rect x="507.6" y="235" width="8.2" height="1129" fill="#dcb98a" />
<rect x="380.6" y="238.0" width="3.2" height="4.6" fill="#c6c6c6"/>
<rect x="502.0" y="238.0" width="3.2" height="4.6" fill="#cfcfcf"/>
<rect x="381.5" y="246.8" width="3.2" height="4.8" fill="#cfcfcf"/>
<rect x="502.0" y="246.8" width="3.2" height="4.8" fill="#c6c6c6"/>
<rect x="380.9" y="255.3" width="3.2" height="3.3" fill="#cfcfcf"/>
<rect x="503.2" y="255.3" width="3.2" height="3.3" fill="#cfcfcf"/>
<rect x="380.9" y="261.2" width="3.2" height="4.1" fill="#cfcfcf"/>
<rect x="502.0" y="261.2" width="3.2" height="4.1" fill="#e9e9e9"/>
<rect x="380.5" y="268.2" width="3.2" height="5.8" fill="#c6c6c6"/>
<rect x="502.8" y="268.2" width="3.2" height="5.8" fill="#c6c6c6"/>
<rect x="380.2" y="278.2" width="3.2" height="5.8" fill="#c6c6c6"/>
<rect x="502.5" y="278.2" width="3.2" height="5.8" fill="#c6c6c6"/>
<rect x="381.0" y="288.2" width="3.2" height="3.3" fill="#cfcfcf"/>
<rect x="503.0" y="288.2" width="3.2" height="3.3" fill="#e9e9e9"/>
<rect x="380.6" y="295.3" width="3.2" height="4.6" fill="#e9e9e9"/>
<rect x="503.2" y="295.3" width="3.2" height="4.6" fill="#c6c6c6"/>
<rect x="380.8" y="304.6" width="3.2" height="4.2" fill="#d4d4d4"/>
<rect x="503.1" y="304.6" width="3.2" height="4.2" fill="#d4d4d4"/>
<rect x="380.8" y="312.0" width="3.2" height="7.9" fill="#cfcfcf"/>
<rect x="503.1" y="312.0" width="3.2" height="7.9" fill="#c6c6c6"/>
<rect x="381.5" y="322.5" width="3.2" height="5.4" fill="#cfcfcf"/>
<rect x="503.1" y="322.5" width="3.2" height="5.4" fill="#cfcfcf"/>
<rect x="380.5" y="332.2" width="3.2" height="7.4" fill="#d4d4d4"/>
<rect x="502.9" y="332.2" width="3.2" height="7.4" fill="#d4d4d4"/>
<rect x="381.5" y="343.9" width="3.2" height="5.3" fill="#cfcfcf"/>
<rect x="503.0" y="343.9" width="3.2" height="5.3" fill="#e9e9e9"/>
<rect x="381.0" y="351.5" width="3.2" height="6.7" fill="#d4d4d4"/>
<rect x="502.4" y="351.5" width="3.2" height="6.7" fill="#e9e9e9"/>
<rect x="381.5" y="361.7" width="3.2" height="6.3" fill="#cfcfcf"/>
<rect x="502.2" y="361.7" width="3.2" height="6.3" fill="#d4d4d4"/>
<rect x="380.2" y="370.5" width="3.2" height="3.3" fill="#d4d4d4"/>
<rect x="502.5" y="370.5" width="3.2" height="3.3" fill="#c6c6c6"/>
<rect x="380.7" y="379.4" width="3.2" height="5.5" fill="#c6c6c6"/>
<rect x="503.3" y="379.4" width="3.2" height="5.5" fill="#d4d4d4"/>
<rect x="381.1" y="390.2" width="3.2" height="7.3" fill="#d4d4d4"/>
<rect x="503.0" y="390.2" width="3.2" height="7.3" fill="#d4d4d4"/>
<rect x="380.3" y="401.1" width="3.2" height="4.2" fill="#cfcfcf"/>
<rect x="503.0" y="401.1" width="3.2" height="4.2" fill="#c6c6c6"/>
<rect x="380.4" y="407.3" width="3.2" height="7.2" fill="#c6c6c6"/>
<rect x="502.1" y="407.3" width="3.2" height="7.2" fill="#cfcfcf"/>
<rect x="381.5" y="418.5" width="3.2" height="6.0" fill="#d4d4d4"/>
<rect x="502.6" y="418.5" width="3.2" height="6.0" fill="#cfcfcf"/>
<rect x="380.6" y="430.1" width="3.2" height="7.8" fill="#e9e9e9"/>
<rect x="502.1" y="430.1" width="3.2" height="7.8" fill="#e9e9e9"/>
<rect x="381.6" y="442.4" width="3.2" height="3.3" fill="#cfcfcf"/>
<rect x="502.2" y="442.4" width="3.2" height="3.3" fill="#e9e9e9"/>
<rect x="380.9" y="449.0" width="3.2" height="3.3" fill="#cfcfcf"/>
<rect x="503.4" y="449.0" width="3.2" height="3.3" fill="#cfcfcf"/>
<rect x="381.0" y="456.8" width="3.2" height="3.4" fill="#c6c6c6"/>
<rect x="502.9" y="456.8" width="3.2" height="3.4" fill="#c6c6c6"/>
<rect x="380.2" y="465.9" width="3.2" height="6.0" fill="#e9e9e9"/>
<rect x="503.5" y="465.9" width="3.2" height="6.0" fill="#e9e9e9"/>
<rect x="380.2" y="475.8" width="3.2" height="5.4" fill="#cfcfcf"/>
<rect x="503.1" y="475.8" width="3.2" height="5.4" fill="#d4d4d4"/>
<rect x="380.3" y="485.1" width="3.2" height="6.5" fill="#cfcfcf"/>
<rect x="502.1" y="485.1" width="3.2" height="6.5" fill="#d4d4d4"/>
<rect x="381.6" y="495.8" width="3.2" height="3.1" fill="#d4d4d4"/>
<rect x="503.0" y="495.8" width="3.2" height="3.1" fill="#cfcfcf"/>
<rect x="380.6" y="502.0" width="3.2" height="4.8" fill="#c6c6c6"/>
<rect x="502.8" y="502.0" width="3.2" height="4.8" fill="#c6c6c6"/>
<rect x="381.0" y="511.9" width="3.2" height="4.6" fill="#c6c6c6"/>
<rect x="503.2" y="511.9" width="3.2" height="4.6" fill="#c6c6c6"/>
<rect x="380.3" y="521.8" width="3.2" height="6.7" fill="#c6c6c6"/>
<rect x="502.5" y="521.8" width="3.2" height="6.7" fill="#e9e9e9"/>
<rect x="380.8" y="530.6" width="3.2" height="3.1" fill="#d4d4d4"/>
<rect x="503.0" y="530.6" width="3.2" height="3.1" fill="#c6c6c6"/>
<rect x="381.5" y="539.6" width="3.2" height="5.2" fill="#d4d4d4"/>
<rect x="502.0" y="539.6" width="3.2" height="5.2" fill="#d4d4d4"/>
<rect x="380.3" y="547.3" width="3.2" height="5.4" fill="#d4d4d4"/>
<rect x="502.7" y="547.3" width="3.2" height="5.4" fill="#cfcfcf"/>
<rect x="381.3" y="557.2" width="3.2" height="7.0" fill="#cfcfcf"/>
<rect x="503.4" y="557.2" width="3.2" height="7.0" fill="#cfcfcf"/>
<rect x="381.4" y="569.3" width="3.2" height="6.8" fill="#e9e9e9"/>
<rect x="503.2" y="569.3" width="3.2" height="6.8" fill="#e9e9e9"/>
<rect x="380.7" y="579.4" width="3.2" height="7.0" fill="#e9e9e9"/>
<rect x="503.1" y="579.4" width="3.2" height="7.0" fill="#cfcfcf"/>
<rect x="380.9" y="589.1" width="3.2" height="3.6" fill="#c6c6c6"/>
<rect x="503.2" y="589.1" width="3.2" height="3.6" fill="#e9e9e9"/>
<rect x="381.1" y="595.3" width="3.2" height="7.1" fill="#e9e9e9"/>
<rect x="502.1" y="595.3" width="3.2" height="7.1" fill="#d4d4d4"/>
<rect x="380.8" y="606.7" width="3.2" height="3.1" fill="#cfcfcf"/>
<rect x="502.6" y="606.7" width="3.2" height="3.1" fill="#c6c6c6"/>
<rect x="380.0" y="615.3" width="3.2" height="7.1" fill="#c6c6c6"/>
<rect x="502.4" y="615.3" width="3.2" height="7.1" fill="#c6c6c6"/>
<rect x="380.9" y="625.3" width="3.2" height="5.9" fill="#d4d4d4"/>
<rect x="502.0" y="625.3" width="3.2" height="5.9" fill="#c6c6c6"/>
<rect x="381.3" y="636.2" width="3.2" height="7.5" fill="#e9e9e9"/>
<rect x="502.8" y="636.2" width="3.2" height="7.5" fill="#c6c6c6"/>
<rect x="381.2" y="647.8" width="3.2" height="3.1" fill="#e9e9e9"/>
<rect x="503.1" y="647.8" width="3.2" height="3.1" fill="#cfcfcf"/>
<rect x="380.9" y="653.5" width="3.2" height="3.7" fill="#cfcfcf"/>
<rect x="503.0" y="653.5" width="3.2" height="3.7" fill="#d4d4d4"/>
<rect x="381.4" y="661.3" width="3.2" height="5.4" fill="#cfcfcf"/>
<rect x="502.3" y="661.3" width="3.2" height="5.4" fill="#cfcfcf"/>
<rect x="380.9" y="669.9" width="3.2" height="6.9" fill="#e9e9e9"/>
<rect x="502.6" y="669.9" width="3.2" height="6.9" fill="#cfcfcf"/>
<rect x="381.1" y="681.2" width="3.2" height="5.5" fill="#c6c6c6"/>
<rect x="502.7" y="681.2" width="3.2" height="5.5" fill="#e9e9e9"/>
<rect x="381.1" y="691.9" width="3.2" height="5.5" fill="#c6c6c6"/>
<rect x="503.4" y="691.9" width="3.2" height="5.5" fill="#d4d4d4"/>
<rect x="380.2" y="703.0" width="3.2" height="4.0" fill="#e9e9e9"/>
<rect x="502.5" y="703.0" width="3.2" height="4.0" fill="#cfcfcf"/>
<rect x="380.1" y="710.3" width="3.2" height="6.4" fill="#e9e9e9"/>
<rect x="503.2" y="710.3" width="3.2" height="6.4" fill="#d4d4d4"/>
<rect x="380.2" y="722.3" width="3.2" height="3.8" fill="#d4d4d4"/>
<rect x="503.4" y="722.3" width="3.2" height="3.8" fill="#c6c6c6"/>
<rect x="381.4" y="728.9" width="3.2" height="7.8" fill="#e9e9e9"/>
<rect x="503.5" y="728.9" width="3.2" height="7.8" fill="#c6c6c6"/>
<rect x="381.6" y="742.0" width="3.2" height="3.8" fill="#e9e9e9"/>
<rect x="502.4" y="742.0" width="3.2" height="3.8" fill="#e9e9e9"/>
<rect x="380.0" y="748.6" width="3.2" height="4.6" fill="#d4d4d4"/>
<rect x="502.6" y="748.6" width="3.2" height="4.6" fill="#e9e9e9"/>
<rect x="380.8" y="755.3" width="3.2" height="4.7" fill="#d4d4d4"/>
<rect x="502.1" y="755.3" width="3.2" height="4.7" fill="#cfcfcf"/>
<rect x="380.1" y="765.6" width="3.2" height="4.1" fill="#cfcfcf"/>
<rect x="502.0" y="765.6" width="3.2" height="4.1" fill="#d4d4d4"/>
<rect x="381.3" y="774.9" width="3.2" height="4.4" fill="#c6c6c6"/>
<rect x="502.5" y="774.9" width="3.2" height="4.4" fill="#d4d4d4"/>
<rect x="381.1" y="783.3" width="3.2" height="5.6" fill="#e9e9e9"/>
<rect x="502.3" y="783.3" width="3.2" height="5.6" fill="#cfcfcf"/>
<rect x="380.4" y="794.1" width="3.2" height="3.9" fill="#cfcfcf"/>
<rect x="502.9" y="794.1" width="3.2" height="3.9" fill="#cfcfcf"/>
<rect x="380.1" y="803.2" width="3.2" height="3.4" fill="#c6c6c6"/>
<rect x="502.6" y="803.2" width="3.2" height="3.4" fill="#cfcfcf"/>
<rect x="381.0" y="810.0" width="3.2" height="5.8" fill="#d4d4d4"/>
<rect x="502.7" y="810.0" width="3.2" height="5.8" fill="#cfcfcf"/>
<rect x="380.4" y="818.7" width="3.2" height="3.5" fill="#c6c6c6"/>
<rect x="502.2" y="818.7" width="3.2" height="3.5" fill="#c6c6c6"/>
<rect x="380.5" y="825.5" width="3.2" height="4.5" fill="#c6c6c6"/>
<rect x="502.3" y="825.5" width="3.2" height="4.5" fill="#c6c6c6"/>
<rect x="380.0" y="835.3" width="3.2" height="8.0" fill="#cfcfcf"/>
<rect x="502.7" y="835.3" width="3.2" height="8.0" fill="#c6c6c6"/>
<rect x="381.1" y="846.2" width="3.2" height="5.2" fill="#e9e9e9"/>
<rect x="503.5" y="846.2" width="3.2" height="5.2" fill="#e9e9e9"/>
<rect x="380.5" y="854.7" width="3.2" height="4.1" fill="#c6c6c6"/>
<rect x="502.5" y="854.7" width="3.2" height="4.1" fill="#c6c6c6"/>
<rect x="380.0" y="862.2" width="3.2" height="3.3" fill="#c6c6c6"/>
<rect x="502.6" y="862.2" width="3.2" height="3.3" fill="#d4d4d4"/>
<rect x="381.4" y="867.7" width="3.2" height="6.3" fill="#e9e9e9"/>
<rect x="502.9" y="867.7" width="3.2" height="6.3" fill="#d4d4d4"/>
<rect x="380.3" y="878.8" width="3.2" height="3.2" fill="#c6c6c6"/>
<rect x="501.9" y="878.8" width="3.2" height="3.2" fill="#e9e9e9"/>
<rect x="380.4" y="885.4" width="3.2" height="4.6" fill="#d4d4d4"/>
<rect x="502.2" y="885.4" width="3.2" height="4.6" fill="#d4d4d4"/>
<rect x="380.8" y="892.8" width="3.2" height="4.7" fill="#cfcfcf"/>
<rect x="502.3" y="892.8" width="3.2" height="4.7" fill="#c6c6c6"/>
<rect x="380.2" y="902.6" width="3.2" height="3.5" fill="#cfcfcf"/>
<rect x="502.5" y="902.6" width="3.2" height="3.5" fill="#cfcfcf"/>
<rect x="380.9" y="909.2" width="3.2" height="6.1" fill="#cfcfcf"/>
<rect x="503.0" y="909.2" width="3.2" height="6.1" fill="#c6c6c6"/>
<rect x="381.2" y="920.3" width="3.2" height="7.4" fill="#e9e9e9"/>
<rect x="502.1" y="920.3" width="3.2" height="7.4" fill="#e9e9e9"/>
<rect x="381.3" y="932.6" width="3.2" height="6.2" fill="#cfcfcf"/>
<rect x="503.1" y="932.6" width="3.2" height="6.2" fill="#e9e9e9"/>
<rect x="381.3" y="944.0" width="3.2" height="3.7" fill="#cfcfcf"/>
<rect x="502.0" y="944.0" width="3.2" height="3.7" fill="#c6c6c6"/>
<rect x="380.6" y="949.9" width="3.2" height="6.2" fill="#cfcfcf"/>
<rect x="502.8" y="949.9" width="3.2" height="6.2" fill="#e9e9e9"/>
<rect x="380.8" y="960.6" width="3.2" height="6.1" fill="#c6c6c6"/>
<rect x="502.6" y="960.6" width="3.2" height="6.1" fill="#cfcfcf"/>
<rect x="381.1" y="969.0" width="3.2" height="7.7" fill="#cfcfcf"/>
<rect x="503.1" y="969.0" width="3.2" height="7.7" fill="#cfcfcf"/>
<rect x="380.4" y="980.5" width="3.2" height="7.0" fill="#d4d4d4"/>
<rect x="502.3" y="980.5" width="3.2" height="7.0" fill="#c6c6c6"/>
<rect x="380.1" y="992.2" width="3.2" height="5.3" fill="#e9e9e9"/>
<rect x="503.1" y="992.2" width="3.2" height="5.3" fill="#d4d4d4"/>
<rect x="381.0" y="1002.0" width="3.2" height="6.2" fill="#cfcfcf"/>
<rect x="502.3" y="1002.0" width="3.2" height="6.2" fill="#d4d4d4"/>
<rect x="380.0" y="1013.1" width="3.2" height="4.5" fill="#c6c6c6"/>
<rect x="502.7" y="1013.1" width="3.2" height="4.5" fill="#cfcfcf"/>
<rect x="381.1" y="1023.6" width="3.2" height="3.5" fill="#c6c6c6"/>
<rect x="503.0" y="1023.6" width="3.2" height="3.5" fill="#d4d4d4"/>
<rect x="381.6" y="1030.2" width="3.2" height="5.3" fill="#cfcfcf"/>
<rect x="502.4" y="1030.2" width="3.2" height="5.3" fill="#c6c6c6"/>
<rect x="380.7" y="1037.9" width="3.2" height="5.4" fill="#d4d4d4"/>
<rect x="503.5" y="1037.9" width="3.2" height="5.4" fill="#e9e9e9"/>
<rect x="380.1" y="1046.8" width="3.2" height="7.6" fill="#c6c6c6"/>
<rect x="502.1" y="1046.8" width="3.2" height="7.6" fill="#cfcfcf"/>
<rect x="381.0" y="1058.5" width="3.2" height="7.8" fill="#c6c6c6"/>
<rect x="503.3" y="1058.5" width="3.2" height="7.8" fill="#d4d4d4"/>
<rect x="380.6" y="1071.0" width="3.2" height="4.2" fill="#e9e9e9"/>
<rect x="501.9" y="1071.0" width="3.2" height="4.2" fill="#c6c6c6"/>
<rect x="381.2" y="1079.2" width="3.2" height="5.3" fill="#d4d4d4"/>
<rect x="502.5" y="1079.2" width="3.2" height="5.3" fill="#e9e9e9"/>
<rect x="380.5" y="1087.7" width="3.2" height="7.2" fill="#cfcfcf"/>
<rect x="503.2" y="1087.7" width="3.2" height="7.2" fill="#d4d4d4"/>
<rect x="381.4" y="1097.4" width="3.2" height="7.6" fill="#cfcfcf"/>
<rect x="502.3" y="1097.4" width="3.2" height="7.6" fill="#d4d4d4"/>
<rect x="380.6" y="1107.3" width="3.2" height="5.0" fill="#cfcfcf"/>
<rect x="503.1" y="1107.3" width="3.2" height="5.0" fill="#e9e9e9"/>
<rect x="381.3" y="1117.6" width="3.2" height="4.4" fill="#cfcfcf"/>
<rect x="502.9" y="1117.6" width="3.2" height="4.4" fill="#d4d4d4"/>
<rect x="380.8" y="1124.6" width="3.2" height="7.9" fill="#e9e9e9"/>
<rect x="503.1" y="1124.6" width="3.2" height="7.9" fill="#c6c6c6"/>
<rect x="381.3" y="1137.6" width="3.2" height="5.1" fill="#cfcfcf"/>
<rect x="503.4" y="1137.6" width="3.2" height="5.1" fill="#e9e9e9"/>
<rect x="380.1" y="1148.5" width="3.2" height="5.7" fill="#cfcfcf"/>
<rect x="502.6" y="1148.5" width="3.2" height="5.7" fill="#e9e9e9"/>
<rect x="380.8" y="1159.3" width="3.2" height="6.2" fill="#d4d4d4"/>
<rect x="502.2" y="1159.3" width="3.2" height="6.2" fill="#c6c6c6"/>
<rect x="381.2" y="1169.2" width="3.2" height="4.4" fill="#d4d4d4"/>
<rect x="502.5" y="1169.2" width="3.2" height="4.4" fill="#d4d4d4"/>
<rect x="380.2" y="1176.5" width="3.2" height="5.4" fill="#e9e9e9"/>
<rect x="502.0" y="1176.5" width="3.2" height="5.4" fill="#c6c6c6"/>
<rect x="380.7" y="1185.9" width="3.2" height="7.1" fill="#c6c6c6"/>
<rect x="503.5" y="1185.9" width="3.2" height="7.1" fill="#d4d4d4"/>
<rect x="380.4" y="1196.8" width="3.2" height="3.7" fill="#c6c6c6"/>
<rect x="502.4" y="1196.8" width="3.2" height="3.7" fill="#c6c6c6"/>
<rect x="381.3" y="1202.9" width="3.2" height="4.2" fill="#d4d4d4"/>
<rect x="503.3" y="1202.9" width="3.2" height="4.2" fill="#c6c6c6"/>
<rect x="381.2" y="1212.1" width="3.2" height="5.1" fill="#e9e9e9"/>
<rect x="502.5" y="1212.1" width="3.2" height="5.1" fill="#c6c6c6"/>
<rect x="380.9" y="1220.5" width="3.2" height="3.3" fill="#d4d4d4"/>
<rect x="502.1" y="1220.5" width="3.2" height="3.3" fill="#d4d4d4"/>
<rect x="380.1" y="1227.8" width="3.2" height="6.1" fill="#c6c6c6"/>
<rect x="502.5" y="1227.8" width="3.2" height="6.1" fill="#c6c6c6"/>
<rect x="381.4" y="1238.5" width="3.2" height="5.2" fill="#d4d4d4"/>
<rect x="502.1" y="1238.5" width="3.2" height="5.2" fill="#cfcfcf"/>
<rect x="381.5" y="1247.4" width="3.2" height="6.8" fill="#e9e9e9"/>
<rect x="501.9" y="1247.4" width="3.2" height="6.8" fill="#e9e9e9"/>
<rect x="381.6" y="1257.8" width="3.2" height="7.6" fill="#e9e9e9"/>
<rect x="503.2" y="1257.8" width="3.2" height="7.6" fill="#c6c6c6"/>
<rect x="381.5" y="1268.3" width="3.2" height="3.8" fill="#cfcfcf"/>
<rect x="502.0" y="1268.3" width="3.2" height="3.8" fill="#e9e9e9"/>
<rect x="380.4" y="1277.2" width="3.2" height="3.0" fill="#c6c6c6"/>
<rect x="502.9" y="1277.2" width="3.2" height="3.0" fill="#cfcfcf"/>
<rect x="380.8" y="1283.4" width="3.2" height="3.6" fill="#d4d4d4"/>
<rect x="503.0" y="1283.4" width="3.2" height="3.6" fill="#e9e9e9"/>
<rect x="380.6" y="1289.5" width="3.2" height="3.4" fill="#c6c6c6"/>
<rect x="503.2" y="1289.5" width="3.2" height="3.4" fill="#c6c6c6"/>
<rect x="380.4" y="1294.8" width="3.2" height="5.7" fill="#e9e9e9"/>
<rect x="502.9" y="1294.8" width="3.2" height="5.7" fill="#d4d4d4"/>
<rect x="380.9" y="1306.1" width="3.2" height="5.4" fill="#c6c6c6"/>
<rect x="503.4" y="1306.1" width="3.2" height="5.4" fill="#cfcfcf"/>
<rect x="380.3" y="1316.3" width="3.2" height="4.5" fill="#cfcfcf"/>
<rect x="502.0" y="1316.3" width="3.2" height="4.5" fill="#e9e9e9"/>
<rect x="380.4" y="1323.7" width="3.2" height="5.1" fill="#d4d4d4"/>
<rect x="503.0" y="1323.7" width="3.2" height="5.1" fill="#cfcfcf"/>
<rect x="380.3" y="1333.7" width="3.2" height="4.8" fill="#e9e9e9"/>
<rect x="503.1" y="1333.7" width="3.2" height="4.8" fill="#d4d4d4"/>
<rect x="380.5" y="1342.5" width="3.2" height="4.0" fill="#c6c6c6"/>
<rect x="502.3" y="1342.5" width="3.2" height="4.0" fill="#c6c6c6"/>
<rect x="380.2" y="1349.4" width="3.2" height="6.8" fill="#d4d4d4"/>
<rect x="502.9" y="1349.4" width="3.2" height="6.8" fill="#e9e9e9"/>
<path d="M393.2,516.5 Q386.7,521.8 380.5,522.3 Q386.7,522.8 393.2,528.1 Z" fill="#10e010"/>
<path d="M393.2,515.9 Q386.7,521.4 371.5,522.3 Q386.7,523.2 393.2,528.7" fill="none" stroke="#111" stroke-width="1.4" stroke-linejoin="miter"/>
<path d="M393.2,531.3 Q386.7,536.6 380.5,537.1 Q386.7,537.6 393.2,542.9 Z" fill="#10e010"/>
<path d="M393.2,530.7 Q386.7,536.2 371.5,537.1 Q386.7,538.0 393.2,543.5" fill="none" stroke="#111" stroke-width="1.4" stroke-linejoin="miter"/>
<path d="M393.2,560.9 Q386.7,566.2 380.5,566.7 Q386.7,567.2 393.2,572.5 Z" fill="#10e010"/>
<path d="M393.2,560.3 Q386.7,565.8 371.5,566.7 Q386.7,567.6 393.2,573.1" fill="none" stroke="#111" stroke-width="1.4" stroke-linejoin="miter"/>
<path d="M393.2,575.7 Q386.7,581.0 380.5,581.5 Q386.7,582.0 393.2,587.3 Z" fill="#10e010"/>
<path d="M393.2,575.1 Q386.7,580.6 371.5,581.5 Q386.7,582.4 393.2,587.9" fill="none" stroke="#111" stroke-width="1.4" stroke-linejoin="miter"/>
<path d="M393.2,590.5 Q386.7,595.8 380.5,596.3 Q386.7,596.8 393.2,602.1 Z" fill="#10e010"/>
<path d="M393.2,589.9 Q386.7,595.4 371.5,596.3 Q386.7,597.2 393.2,602.7" fill="none" stroke="#111" stroke-width="1.4" stroke-linejoin="miter"/>
<path d="M393.2,605.3 Q386.7,610.6 380.5,611.1 Q386.7,611.6 393.2,616.9 Z" fill="#10e010"/>
<path d="M393.2,604.7 Q386.7,610.2 371.5,611.1 Q386.7,612.0 393.2,617.5" fill="none" stroke="#111" stroke-width="1.4" stroke-linejoin="miter"/>
<path d="M393.2,637.9 Q386.7,643.2 380.5,643.7 Q386.7,644.2 393.2,649.5 Z" fill="#10e010"/>
<path d="M393.2,637.3 Q386.7,642.8 371.5,643.7 Q386.7,644.6 393.2,650.1" fill="none" stroke="#111" stroke-width="1.4" stroke-linejoin="miter"/>
<path d="M393.2,652.7 Q386.7,658.0 380.5,658.5 Q386.7,659.0 393.2,664.3 Z" fill="#10e010"/>
<path d="M393.2,652.1 Q386.7,657.6 371.5,658.5 Q386.7,659.4 393.2,664.9" fill="none" stroke="#111" stroke-width="1.4" stroke-linejoin="miter"/>
<path d="M393.2,667.5 Q386.7,672.8 380.5,673.3 Q386.7,673.8 393.2,679.1 Z" fill="#10e010"/>
<path d="M393.2,666.9 Q386.7,672.4 371.5,673.3 Q386.7,674.2 393.2,679.7" fill="none" stroke="#111" stroke-width="1.4" stroke-linejoin="miter"/>
<path d="M393.2,682.3 Q386.7,687.6 380.5,688.1 Q386.7,688.6 393.2,693.9 Z" fill="#10e010"/>
<path d="M393.2,681.7 Q386.7,687.2 371.5,688.1 Q386.7,689.0 393.2,694.5" fill="none" stroke="#111" stroke-width="1.4" stroke-linejoin="miter"/>
<path d="M393.2,697.1 Q386.7,702.4 380.5,702.9 Q386.7,703.4 393.2,708.7 Z" fill="#10e010"/>
<path d="M393.2,696.5 Q386.7,702.0 371.5,702.9 Q386.7,703.8 393.2,709.3" fill="none" stroke="#111" stroke-width="1.4" stroke-linejoin="miter"/>
<path d="M393.2,711.9 Q386.7,717.2 380.5,717.7 Q386.7,718.2 393.2,723.5 Z" fill="#10e010"/>
<path d="M393.2,711.3 Q386.7,716.8 371.5,717.7 Q386.7,718.6 393.2,724.1" fill="none" stroke="#111" stroke-width="1.4" stroke-linejoin="miter"/>
<path d="M494.6,516.5 Q501.0,521.8 507.5,522.3 Q501.0,522.8 494.6,528.1 Z" fill="#10e010"/>
<path d="M494.6,515.9 Q501.0,521.4 515.8,522.3 Q501.0,523.2 494.6,528.7" fill="none" stroke="#111" stroke-width="1.4" stroke-linejoin="miter"/>
<path d="M494.6,531.3 Q501.0,536.6 507.5,537.1 Q501.0,537.6 494.6,542.9 Z" fill="#10e010"/>
<path d="M494.6,530.7 Q501.0,536.2 515.8,537.1 Q501.0,538.0 494.6,543.5" fill="none" stroke="#111" stroke-width="1.4" stroke-linejoin="miter"/>
<path d="M494.6,546.1 Q501.0,551.4 507.5,551.9 Q501.0,552.4 494.6,557.7 Z" fill="#10e010"/>
<path d="M494.6,545.5 Q501.0,551.0 515.8,551.9 Q501.0,552.8 494.6,558.3" fill="none" stroke="#111" stroke-width="1.4" stroke-linejoin="miter"/>
<path d="M494.6,560.9 Q501.0,566.2 507.5,566.7 Q501.0,567.2 494.6,572.5 Z" fill="#10e010"/>
<path d="M494.6,560.3 Q501.0,565.8 515.8,566.7 Q501.0,567.6 494.6,573.1" fill="none" stroke="#111" stroke-width="1.4" stroke-linejoin="miter"/>
<path d="M494.6,575.7 Q501.0,581.0 507.5,581.5 Q501.0,582.0 494.6,587.3 Z" fill="#10e010"/>
<path d="M494.6,575.1 Q501.0,580.6 515.8,581.5 Q501.0,582.4 494.6,587.9" fill="none" stroke="#111" stroke-width="1.4" stroke-linejoin="miter"/>
<path d="M494.6,590.5 Q501.0,595.8 507.5,596.3 Q501.0,596.8 494.6,602.1 Z" fill="#10e010"/>
<path d="M494.6,589.9 Q501.0,595.4 515.8,596.3 Q501.0,597.2 494.6,602.7" fill="none" stroke="#111" stroke-width="1.4" stroke-linejoin="miter"/>
<path d="M494.6,605.3 Q501.0,610.6 507.5,611.1 Q501.0,611.6 494.6,616.9 Z" fill="#10e010"/>
<path d="M494.6,604.7 Q501.0,610.2 515.8,611.1 Q501.0,612.0 494.6,617.5" fill="none" stroke="#111" stroke-width="1.4" stroke-linejoin="miter"/>
<path d="M494.6,637.9 Q501.0,643.2 507.5,643.7 Q501.0,644.2 494.6,649.5 Z" fill="#10e010"/>
<path d="M494.6,637.3 Q501.0,642.8 515.8,643.7 Q501.0,644.6 494.6,650.1" fill="none" stroke="#111" stroke-width="1.4" stroke-linejoin="miter"/>
<path d="M494.6,652.7 Q501.0,658.0 507.5,658.5 Q501.0,659.0 494.6,664.3 Z" fill="#10e010"/>
<path d="M494.6,652.1 Q501.0,657.6 515.8,658.5 Q501.0,659.4 494.6,664.9" fill="none" stroke="#111" stroke-width="1.4" stroke-linejoin="miter"/>
<path d="M494.6,667.5 Q501.0,672.8 507.5,673.3 Q501.0,673.8 494.6,679.1 Z" fill="#10e010"/>
<path d="M494.6,666.9 Q501.0,672.4 515.8,673.3 Q501.0,674.2 494.6,679.7" fill="none" stroke="#111" stroke-width="1.4" stroke-linejoin="miter"/>
<path d="M494.6,682.3 Q501.0,687.6 507.5,688.1 Q501.0,688.6 494.6,693.9 Z" fill="#10e010"/>
<path d="M494.6,681.7 Q501.0,687.2 515.8,688.1 Q501.0,689.0 494.6,694.5" fill="none" stroke="#111" stroke-width="1.4" stroke-linejoin="miter"/>
<path d="M494.6,697.1 Q501.0,702.4 507.5,702.9 Q501.0,703.4 494.6,708.7 Z" fill="#10e010"/>
<path d="M494.6,696.5 Q501.0,702.0 515.8,702.9 Q501.0,703.8 494.6,709.3" fill="none" stroke="#111" stroke-width="1.4" stroke-linejoin="miter"/>
<path d="M494.6,711.9 Q501.0,717.2 507.5,717.7 Q501.0,718.2 494.6,723.5 Z" fill="#10e010"/>
<path d="M494.6,711.3 Q501.0,716.8 515.8,717.7 Q501.0,718.6 494.6,724.1" fill="none" stroke="#111" stroke-width="1.4" stroke-linejoin="miter"/>
<text x="398.6" y="542.0" font-size="16.5" textLength="21.9" lengthAdjust="spacingAndGlyphs" font-weight="bold" fill="#000">П3</text>
<text x="398.6" y="596.6" font-size="16.5" textLength="21.9" lengthAdjust="spacingAndGlyphs" font-weight="bold" fill="#000">П2</text>
<text x="398.6" y="699.6" font-size="16.5" textLength="18.8" lengthAdjust="spacingAndGlyphs" font-weight="bold" fill="#000">П1</text>
<path d="M463.9,416 L463.9,312.0" stroke="#12b76a" stroke-width="5.6" fill="none"/>
<path d="M454.5,327.0 L463.9,311.5 L473.3,327.0" stroke="#12b76a" stroke-width="5.6" fill="none" stroke-linejoin="miter" stroke-miterlimit="10"/>
<path d="M438.1,546.5 L438.1,441.4" stroke="#0000ff" stroke-width="5.6" fill="none"/>
<path d="M428.7,456.4 L438.1,440.9 L447.5,456.4" stroke="#0000ff" stroke-width="5.6" fill="none" stroke-linejoin="miter" stroke-miterlimit="10"/>
<path d="M464.4,546.5 L464.4,441.4" stroke="#12b76a" stroke-width="5.6" fill="none"/>
<path d="M455.0,456.4 L464.4,440.9 L473.8,456.4" stroke="#12b76a" stroke-width="5.6" fill="none" stroke-linejoin="miter" stroke-miterlimit="10"/>
<path d="M438.1,592.4 L438.1,557.1" stroke="#0000ff" stroke-width="5.6" fill="none"/>
<path d="M428.7,572.1 L438.1,556.6 L447.5,572.1" stroke="#0000ff" stroke-width="5.6" fill="none" stroke-linejoin="miter" stroke-miterlimit="10"/>
<path d="M464.4,559 L464.4,593.3 L484,593.3" stroke="#12b76a" stroke-width="5.6" fill="none"/>
<path d="M455,574.2 L464.4,558.6 L473.8,574.2" stroke="#12b76a" stroke-width="5.6" fill="none" stroke-miterlimit="10"/>
<path d="M464.4,605 L464.4,638 L483,638" stroke="#12b76a" stroke-width="5.6" fill="none"/>
<path d="M455,620.2 L464.4,604.6 L473.8,620.2" stroke="#12b76a" stroke-width="5.6" fill="none" stroke-miterlimit="10"/>
<path d="M441,626.5 L441,659 L459.4,659" stroke="#2030e8" stroke-width="5.6" fill="none"/>
<path d="M431.6,641.5 L441,626 L450.4,641.5" stroke="#2030e8" stroke-width="5.6" fill="none" stroke-miterlimit="10"/>
<path d="M472,659 L504.1,659 L504.1,677.4" stroke="#2030e8" stroke-width="5.6" fill="none"/>
<path d="M484.4,650.2 L471.4,659 L484.4,667.8" stroke="#2030e8" stroke-width="5.6" fill="none" stroke-linejoin="miter" stroke-miterlimit="10"/>
<path d="M504,804 L504,724.0" stroke="#0000ff" stroke-width="5.6" fill="none"/>
<path d="M495.5,737.0 L504,723.5 L512.5,737.0" stroke="#0000ff" stroke-width="5.6" fill="none" stroke-linejoin="miter" stroke-miterlimit="10"/>
<path d="M504,1017.5 L504,859.3" stroke="#0000ff" stroke-width="5.6" fill="none"/>
<path d="M495.5,872.3 L504,858.8 L512.5,872.3" stroke="#0000ff" stroke-width="5.6" fill="none" stroke-linejoin="miter" stroke-miterlimit="10"/>
<path d="M504,1266.7 L504,1106.5" stroke="#0000ff" stroke-width="5.6" fill="none"/>
<path d="M495.5,1119.5 L504,1106.0 L512.5,1119.5" stroke="#0000ff" stroke-width="5.6" fill="none" stroke-linejoin="miter" stroke-miterlimit="10"/>
<defs><pattern id="brick" x="511" y="237.1" width="28.7" height="14.55" patternUnits="userSpaceOnUse">
<rect x="0" y="0" width="28.7" height="14.55" fill="#fff"/>
<rect x="0" y="0" width="14" height="5.1" fill="#e2df73"/><rect x="16" y="0" width="10.5" height="5.1" fill="#e2df73"/>
<rect x="5.6" y="7.3" width="14" height="5.0" fill="#e2df73"/><rect x="21.9" y="7.3" width="6.8" height="5.0" fill="#e2df73"/><rect x="0" y="7.3" width="3.4" height="5.0" fill="#e2df73"/>
</pattern></defs>
<rect x="516" y="235" width="143" height="1129" fill="url(#brick)" />
<polygon points="657.6,235.2 657.6,329.2 656.7,337.6 655.3,350.1 653.9,354.2 657.6,357.7 657.6,422.1 657.6,992.0 657.4,1025.3 656.7,1033.7 657.4,1047.6 657.4,1054.5 656.0,1064.2 656.0,1078.1 656.7,1086.4 655.3,1097.6 653.9,1104.5 646.9,1111.4 646.2,1119.8 647.6,1123.9 644.9,1128.8 646.9,1135.1 646.2,1140.6 642.1,1146.2 639.3,1157.3 640.0,1161.4 645.6,1164.9 655.3,1179.0 654.6,1183.2 651.1,1189.4 649.7,1192.9 656.7,1197.1 655.3,1200.5 647.6,1204.7 648.3,1212.3 651.1,1217.9 657.4,1223.4 658.1,1227.6 655.3,1232.5 657.4,1238.7 658.1,1245.7 655.3,1252.6 654.6,1258.2 647.6,1263.7 646.9,1273.4 647.6,1280.4 655.3,1285.9 653.2,1290.1 653.9,1297.1 649.7,1302.6 647.6,1312.3 655.3,1317.9 654.6,1331.8 655.3,1345.7 654.6,1364.0 658.4,1364 658.4,235.2" fill="#9dfcfc"/>
<polygon points="640.7,235.1 651.1,239.6 647.6,245.2 650.4,248.7 652.5,254.2 651.1,259.1 645.6,263.2 638.6,266.4 651.1,269.5 657.4,271.6 657.4,273.7 656.0,277.8 651.1,283.4 646.9,286.2 645.6,291.7 640.7,298.0 642.8,304.2 639.3,310.5 645.6,315.3 649.7,320.9 653.9,324.4 645.6,327.8 638.6,330.6 646.9,334.1 629.6,340.3 633.1,347.3 635.8,354.2 652.5,357.7 657.4,359.1 649.7,362.6 641.4,366.7 643.5,372.3 638.6,379.2 651.1,384.8 657.4,386.9 657.4,404.2 651.1,408.4 644.2,413.9 648.3,418.8 649.7,422.0 657.4,424.8 657.4,441.4 642.8,444.9 640.0,451.9 631.7,458.1 648.3,463.0 651.8,466.4 646.9,474.8 635.8,479.6 637.9,485.9 646.9,493.5 643.5,499.8 645.6,506.7 655.3,510.2 656.9,512.3 641.4,517.8 642.8,522.0 639.3,530.3 640.0,540.1 645.6,547.0 649.7,551.2 646.9,558.8 640.7,563.7 644.2,570.6 650.4,574.8 646.9,580.3 641.4,588.7 635.1,595.6 638.6,602.6 648.3,607.4 638.6,612.0 648.3,617.6 644.2,623.8 651.1,630.1 653.2,634.9 645.6,641.9 641.4,646.0 645.6,651.6 637.2,656.4 641.4,663.4 637.9,671.7 639.3,678.7 637.9,687.0 638.6,692.6 633.8,699.5 645.6,707.8 646.2,709.9 633.1,715.5 651.1,721.0 655.3,724.5 653.2,730.1 646.9,734.9 651.1,739.1 655.3,741.9 631.7,746.0 642.8,752.3 638.6,757.8 639.3,761.3 627.5,766.9 626.8,775.9 624.7,787.0 625.4,795.3 628.9,802.0 633.1,808.9 638.6,814.5 641.4,820.1 646.9,824.2 642.8,829.8 648.3,834.6 653.2,838.8 635.8,845.1 646.9,849.9 644.9,854.1 640.7,859.6 653.2,865.9 644.2,873.5 651.1,878.4 638.6,884.6 642.1,890.9 651.1,894.4 657.4,897.8 657.4,908.9 655.3,911.0 657.4,913.1 657.4,915.9 649.7,922.8 647.6,927.7 652.5,932.6 651.1,939.5 653.2,943.7 642.8,948.5 640.7,952.0 638.6,956.2 642.8,959.6 633.1,964.5 633.1,969.4 644.2,977.0 648.3,981.2 657.4,983.9 657.4,988.1 651.1,992.0 640.0,996.2 645.6,1002.4 648.3,1010.1 646.2,1017.7 636.5,1021.9 649.0,1027.4 626.1,1035.1 631.7,1042.0 642.8,1048.2 644.9,1054.5 642.1,1062.8 631.7,1071.2 633.1,1076.0 631.0,1080.2 637.2,1086.4 647.6,1093.4 639.3,1097.6 641.4,1102.4 632.4,1111.4 633.8,1119.8 631.7,1125.3 628.2,1130.9 631.7,1135.1 626.8,1144.1 627.5,1150.3 633.1,1157.3 632.4,1162.8 635.8,1165.6 645.6,1179.0 638.6,1184.6 648.3,1187.3 631.7,1192.2 651.1,1196.4 656.0,1199.1 651.1,1201.9 637.2,1206.8 635.8,1215.1 640.0,1219.3 651.1,1224.1 645.6,1227.6 635.8,1231.8 648.3,1235.9 653.2,1240.1 648.3,1244.3 646.9,1249.1 635.8,1254.0 638.6,1258.2 626.8,1263.7 630.3,1269.3 632.4,1274.8 627.5,1279.0 644.9,1284.6 642.1,1290.1 641.4,1297.1 637.2,1302.6 634.4,1310.2 641.4,1315.8 644.2,1317.9 628.2,1324.1 633.1,1330.4 635.8,1334.6 648.3,1340.8 638.6,1345.7 630.3,1351.2 626.8,1359.6 626.8,1364.0 654.6,1364.0 655.3,1345.7 654.6,1331.8 655.3,1317.9 647.6,1312.3 649.7,1302.6 653.9,1297.1 653.2,1290.1 655.3,1285.9 647.6,1280.4 646.9,1273.4 647.6,1263.7 654.6,1258.2 655.3,1252.6 658.1,1245.7 657.4,1238.7 655.3,1232.5 658.1,1227.6 657.4,1223.4 651.1,1217.9 648.3,1212.3 647.6,1204.7 655.3,1200.5 656.7,1197.1 649.7,1192.9 651.1,1189.4 654.6,1183.2 655.3,1179.0 645.6,1164.9 640.0,1161.4 639.3,1157.3 642.1,1146.2 646.2,1140.6 646.9,1135.1 644.9,1128.8 647.6,1123.9 646.2,1119.8 646.9,1111.4 653.9,1104.5 655.3,1097.6 656.7,1086.4 656.0,1078.1 656.0,1064.2 657.4,1054.5 657.4,1047.6 656.7,1033.7 657.4,1025.3 657.6,992.0 657.6,422.1 657.6,357.7 653.9,354.2 655.3,350.1 656.7,337.6 657.6,329.2 657.6,235.2" fill="#00b35f"/>
<polyline points="640.7,235.1 651.1,239.6 647.6,245.2 650.4,248.7 652.5,254.2 651.1,259.1 645.6,263.2 638.6,266.4 651.1,269.5 657.4,271.6 657.4,273.7 656.0,277.8 651.1,283.4 646.9,286.2 645.6,291.7 640.7,298.0 642.8,304.2 639.3,310.5 645.6,315.3 649.7,320.9 653.9,324.4 645.6,327.8 638.6,330.6 646.9,334.1 629.6,340.3 633.1,347.3 635.8,354.2 652.5,357.7 657.4,359.1 649.7,362.6 641.4,366.7 643.5,372.3 638.6,379.2 651.1,384.8 657.4,386.9 657.4,404.2 651.1,408.4 644.2,413.9 648.3,418.8 649.7,422.0 657.4,424.8 657.4,441.4 642.8,444.9 640.0,451.9 631.7,458.1 648.3,463.0 651.8,466.4 646.9,474.8 635.8,479.6 637.9,485.9 646.9,493.5 643.5,499.8 645.6,506.7 655.3,510.2 656.9,512.3 641.4,517.8 642.8,522.0 639.3,530.3 640.0,540.1 645.6,547.0 649.7,551.2 646.9,558.8 640.7,563.7 644.2,570.6 650.4,574.8 646.9,580.3 641.4,588.7 635.1,595.6 638.6,602.6 648.3,607.4 638.6,612.0 648.3,617.6 644.2,623.8 651.1,630.1 653.2,634.9 645.6,641.9 641.4,646.0 645.6,651.6 637.2,656.4 641.4,663.4 637.9,671.7 639.3,678.7 637.9,687.0 638.6,692.6 633.8,699.5 645.6,707.8 646.2,709.9 633.1,715.5 651.1,721.0 655.3,724.5 653.2,730.1 646.9,734.9 651.1,739.1 655.3,741.9 631.7,746.0 642.8,752.3 638.6,757.8 639.3,761.3 627.5,766.9 626.8,775.9 624.7,787.0 625.4,795.3 628.9,802.0 633.1,808.9 638.6,814.5 641.4,820.1 646.9,824.2 642.8,829.8 648.3,834.6 653.2,838.8 635.8,845.1 646.9,849.9 644.9,854.1 640.7,859.6 653.2,865.9 644.2,873.5 651.1,878.4 638.6,884.6 642.1,890.9 651.1,894.4 657.4,897.8 657.4,908.9 655.3,911.0 657.4,913.1 657.4,915.9 649.7,922.8 647.6,927.7 652.5,932.6 651.1,939.5 653.2,943.7 642.8,948.5 640.7,952.0 638.6,956.2 642.8,959.6 633.1,964.5 633.1,969.4 644.2,977.0 648.3,981.2 657.4,983.9 657.4,988.1 651.1,992.0 640.0,996.2 645.6,1002.4 648.3,1010.1 646.2,1017.7 636.5,1021.9 649.0,1027.4 626.1,1035.1 631.7,1042.0 642.8,1048.2 644.9,1054.5 642.1,1062.8 631.7,1071.2 633.1,1076.0 631.0,1080.2 637.2,1086.4 647.6,1093.4 639.3,1097.6 641.4,1102.4 632.4,1111.4 633.8,1119.8 631.7,1125.3 628.2,1130.9 631.7,1135.1 626.8,1144.1 627.5,1150.3 633.1,1157.3 632.4,1162.8 635.8,1165.6 645.6,1179.0 638.6,1184.6 648.3,1187.3 631.7,1192.2 651.1,1196.4 656.0,1199.1 651.1,1201.9 637.2,1206.8 635.8,1215.1 640.0,1219.3 651.1,1224.1 645.6,1227.6 635.8,1231.8 648.3,1235.9 653.2,1240.1 648.3,1244.3 646.9,1249.1 635.8,1254.0 638.6,1258.2 626.8,1263.7 630.3,1269.3 632.4,1274.8 627.5,1279.0 644.9,1284.6 642.1,1290.1 641.4,1297.1 637.2,1302.6 634.4,1310.2 641.4,1315.8 644.2,1317.9 628.2,1324.1 633.1,1330.4 635.8,1334.6 648.3,1340.8 638.6,1345.7 630.3,1351.2 626.8,1359.6 626.8,1364.0" fill="none" stroke="#8f8f8f" stroke-width="1.5" stroke-linejoin="round"/>
<polyline points="657.6,329.2 656.7,337.6 655.3,350.1 653.9,354.2 657.6,357.7 657.6,422.1 657.6,992.0 657.4,1025.3 656.7,1033.7 657.4,1047.6 657.4,1054.5 656.0,1064.2 656.0,1078.1 656.7,1086.4 655.3,1097.6 653.9,1104.5 646.9,1111.4 646.2,1119.8 647.6,1123.9 644.9,1128.8 646.9,1135.1 646.2,1140.6 642.1,1146.2 639.3,1157.3 640.0,1161.4 645.6,1164.9 655.3,1179.0 654.6,1183.2 651.1,1189.4 649.7,1192.9 656.7,1197.1 655.3,1200.5 647.6,1204.7 648.3,1212.3 651.1,1217.9 657.4,1223.4 658.1,1227.6 655.3,1232.5 657.4,1238.7 658.1,1245.7 655.3,1252.6 654.6,1258.2 647.6,1263.7 646.9,1273.4 647.6,1280.4 655.3,1285.9 653.2,1290.1 653.9,1297.1 649.7,1302.6 647.6,1312.3 655.3,1317.9 654.6,1331.8 655.3,1345.7 654.6,1364.0" fill="none" stroke="#8f8f8f" stroke-width="1.1" stroke-linejoin="round"/>
<line x1="658.4" y1="235" x2="658.4" y2="1364" stroke="#808080" stroke-width="2" />
<line x1="659.8" y1="235" x2="659.8" y2="1364" stroke="#9af0f0" stroke-width="1" stroke-dasharray="7 3"/>
<line x1="515.6" y1="235" x2="515.6" y2="1364" stroke="#111" stroke-width="1.2" />
<line x1="516" y1="440.2" x2="659" y2="440.2" stroke="#555" stroke-width="1.4" />
<line x1="516" y1="742.5" x2="659" y2="742.5" stroke="#555" stroke-width="1.4" />
<line x1="516" y1="982.5" x2="659" y2="982.5" stroke="#555" stroke-width="1.4" />
<line x1="516" y1="1165.3" x2="659" y2="1165.3" stroke="#555" stroke-width="1.4" />
<text x="525.8" y="386.2" font-size="17.5" textLength="25.7" lengthAdjust="spacingAndGlyphs" font-weight="bold" fill="#000">A0</text>
<text x="524.0" y="496.8" font-size="17.5" textLength="25.1" lengthAdjust="spacingAndGlyphs" font-weight="bold" fill="#000">A1</text>
<text x="526.9" y="762.5" font-size="17.5" textLength="25.9" lengthAdjust="spacingAndGlyphs" font-weight="bold" fill="#000">A2</text>
<text x="526.9" y="1002.9" font-size="17.5" textLength="25.9" lengthAdjust="spacingAndGlyphs" font-weight="bold" fill="#000">A3</text>
<text x="526.9" y="1186.0" font-size="17.5" textLength="25.9" lengthAdjust="spacingAndGlyphs" font-weight="bold" fill="#000">A4</text>
<path d="M485,563 L517.8,563 L532.2,521 L565.1,521" stroke="#12b76a" stroke-width="5.6" fill="none" stroke-linejoin="miter"/>
<path d="M499.5,553.6 L484.5,563 L499.5,572.4" stroke="#12b76a" stroke-width="5.6" fill="none" stroke-linejoin="miter" stroke-miterlimit="10"/>
<path d="M485,593.3 L517.8,593.3 L533.5,549.9 L565.1,549.9" stroke="#12b76a" stroke-width="5.6" fill="none" stroke-linejoin="miter"/>
<path d="M499.5,583.9 L484.5,593.3 L499.5,602.7" stroke="#12b76a" stroke-width="5.6" fill="none" stroke-linejoin="miter" stroke-miterlimit="10"/>
<path d="M501,635.3 L532.2,635.3 L548.8,678.7 L577.7,678.7" stroke="#12b76a" stroke-width="5.6" fill="none" stroke-linejoin="miter"/>
<path d="M515.9,625.9 L500.9,635.3 L515.9,644.7" stroke="#12b76a" stroke-width="5.6" fill="none" stroke-linejoin="miter" stroke-miterlimit="10"/>
<polygon points="726.0,260.3 718.1,263.6 699.7,266.8 701.0,270.1 694.4,274.1 705.0,276.7 713.5,279.3 698.4,282.0 692.5,283.3 698.4,288.5 687.9,292.5 682.0,295.1 687.9,300.4 685.2,306.9 682.6,310.9 687.9,314.2 694.4,318.1 687.2,322.7 694.4,329.3 687.9,333.2 694.4,337.2 699.0,342.4 696.4,346.4 705.0,351.0 706.9,354.9 733.9,357.6 758.2,359.8 733.9,363.5 705.0,366.8 703.0,372.7 707.6,375.3 715.5,377.3 703.6,380.6 708.2,384.5 706.3,389.8 694.4,393.1 685.2,397.0 694.4,402.9 711.5,406.9 728.6,409.5 743.1,413.1 726.0,417.3 732.6,421.9 707.6,425.8 674.7,428.4 666.8,432.4 672.1,437.0 701.0,440.3 715.5,442.2 716.8,445.5 726.7,447.5 736.5,453.4 729.9,458.0 740.5,460.0 761.5,463.7 739.1,467.2 738.5,470.5 716.8,473.8 714.2,477.7 694.4,480.4 685.9,483.0 691.2,485.0 685.2,488.5 697.1,490.9 709.6,493.5 695.8,496.1 695.1,498.8 707.6,502.7 714.8,505.3 712.8,508.6 724.7,511.9 733.9,516.5 752.9,520.1 728.6,523.1 714.2,524.4 714.8,527.7 723.4,530.3 710.2,535.6 718.8,540.2 714.2,544.8 716.1,547.4 711.5,549.4 716.8,552.0 708.9,555.3 712.8,557.3 702.3,560.6 705.6,565.2 690.5,569.1 693.1,571.7 683.9,577.7 680.6,586.9 683.3,592.0 687.9,594.6 683.3,597.9 689.2,600.5 684.6,605.1 694.4,609.1 698.4,613.7 708.2,619.6 701.0,625.5 696.4,634.1 697.7,638.0 687.9,642.6 699.7,645.9 703.6,648.5 694.4,651.8 683.9,655.1 691.8,659.1 701.7,664.3 689.2,668.3 680.6,670.9 684.6,674.8 680.6,678.8 694.4,682.7 699.7,686.7 701.0,691.9 714.8,696.5 694.4,699.2 682.0,702.4 685.9,707.7 697.1,711.0 707.6,714.3 728.6,718.2 752.3,721.5 755.6,724.1 752.9,726.1 772.7,729.0 740.5,731.4 711.5,733.3 712.8,738.6 707.6,741.2 687.9,743.9 674.7,747.8 671.4,752.4 674.7,757.0 678.0,759.6 673.4,762.9 681.3,766.9 676.0,772.0 676.0,780.5 685.2,786.5 692.5,791.1 683.3,795.0 678.0,800.9 676.0,806.2 684.6,812.8 682.6,817.4 693.1,822.0 680.6,829.2 680.6,835.1 685.2,840.4 680.0,845.6 687.9,850.9 707.6,855.5 680.6,860.7 691.8,866.7 684.6,871.9 692.5,877.8 682.0,884.4 682.6,889.0 676.7,892.3 689.2,896.2 688.5,902.2 676.0,905.4 694.4,908.7 714.8,910.7 720.1,914.0 704.3,921.9 728.6,926.5 739.1,930.4 719.4,936.3 727.3,938.3 726.7,940.9 713.5,944.2 718.1,947.5 703.0,952.0 720.1,956.6 704.3,961.2 728.0,965.1 718.8,970.4 722.1,971.7 714.8,977.6 707.6,982.9 722.7,988.8 688.5,998.0 710.9,1008.5 697.7,1013.1 716.1,1019.1 687.2,1028.3 705.0,1034.8 708.2,1038.8 722.1,1042.7 703.0,1049.3 700.4,1051.9 712.2,1059.8 703.0,1064.4 722.7,1069.7 711.5,1072.3 698.4,1078.9 685.2,1085.4 677.4,1092.7 672.7,1098.6 682.6,1102.5 677.4,1105.2 680.0,1111.1 683.3,1119.0 677.4,1124.2 678.7,1132.0 681.3,1138.6 674.7,1143.8 683.3,1148.4 674.7,1155.7 680.0,1161.6 670.8,1166.8 676.7,1171.4 677.4,1177.4 673.4,1182.0 679.3,1188.5 676.0,1192.5 677.4,1199.1 692.5,1203.0 682.0,1208.3 683.9,1216.1 685.9,1225.3 680.0,1229.3 685.9,1235.9 682.0,1241.1 686.6,1246.4 689.8,1253.0 682.0,1258.2 685.9,1262.2 681.3,1266.1 683.3,1270.0 693.8,1274.7 686.6,1280.6 698.4,1284.5 712.2,1287.8 706.9,1289.1 723.4,1293.7 709.5,1298.3 706.0,1302.7 699.8,1306.2 702.9,1309.3 691.0,1313.7 708.6,1319.9 691.9,1324.7 693.7,1326.1 719.2,1326.5 751.7,1324.3 769.7,1322.1 729.7,1315.5 712.6,1309.8 709.5,1306.2 706.9,1303.2 752.3,1298.3 723.4,1293.1 736.5,1289.1 716.1,1283.9 720.1,1280.6 701.0,1274.7 720.7,1270.0 712.8,1264.8 703.6,1260.8 731.3,1253.6 723.4,1249.0 704.3,1241.8 734.5,1236.5 711.5,1227.3 723.4,1222.7 697.1,1218.1 714.8,1212.2 714.8,1208.3 736.5,1199.7 732.6,1195.1 703.6,1189.2 719.4,1184.6 719.4,1182.0 738.5,1174.7 707.6,1164.2 707.6,1161.6 726.0,1155.7 726.7,1151.7 741.1,1147.5 707.6,1141.2 719.4,1132.0 716.8,1128.2 733.2,1123.6 699.7,1118.3 719.4,1113.7 707.6,1108.5 720.1,1098.6 715.5,1095.3 700.4,1090.0 710.2,1084.8 712.8,1080.2 729.3,1075.6 719.4,1071.6 735.2,1066.4 720.1,1061.1 726.0,1053.2 723.4,1049.3 727.3,1045.3 739.1,1041.4 750.3,1037.5 741.8,1032.2 717.5,1028.3 726.0,1023.7 715.5,1015.8 724.0,1009.8 707.6,1002.6 704.3,998.0 739.1,990.8 765.4,986.4 723.4,980.3 724.7,977.0 745.7,971.7 751.6,966.5 741.1,961.2 745.7,957.9 718.1,952.0 715.5,948.8 728.6,944.9 754.9,938.3 740.5,933.1 760.2,929.1 728.6,924.5 719.4,919.3 734.5,914.7 724.7,909.4 724.0,904.8 716.1,900.8 749.7,895.3 726.7,885.1 727.3,881.1 712.8,876.5 737.8,872.6 699.0,866.0 699.7,859.4 707.6,856.1 722.7,851.5 710.9,848.3 745.1,843.7 711.5,838.4 716.8,833.1 706.9,829.2 720.1,825.2 691.2,819.3 720.7,811.4 724.0,806.8 720.7,800.3 714.8,796.3 740.5,791.5 710.2,781.9 693.1,776.6 707.6,772.0 720.1,767.5 710.2,762.9 707.6,759.0 699.7,753.1 716.1,748.5 699.0,744.5 710.2,741.2 722.7,739.3 724.7,734.0 713.5,731.4 716.8,729.4 747.0,726.8 764.8,724.5 754.9,722.2 736.5,718.9 732.6,715.6 707.6,712.3 699.7,709.0 701.7,705.1 692.5,701.1 698.4,697.2 719.4,691.3 710.2,687.3 695.1,682.7 699.0,677.5 704.3,672.9 685.2,667.6 698.4,663.7 684.6,658.4 694.4,653.1 687.2,649.2 693.1,645.2 678.0,640.0 698.4,633.4 718.1,629.9 703.6,626.2 707.6,620.3 687.2,615.7 705.0,610.4 697.1,606.5 720.1,601.5 688.5,596.6 697.7,593.3 683.3,587.5 687.2,582.9 683.3,578.3 698.4,572.4 687.2,568.5 704.3,563.2 698.4,559.9 714.2,556.6 728.0,553.7 713.5,548.7 715.5,543.5 710.2,540.8 705.6,535.6 705.0,530.3 698.4,529.0 693.1,526.4 699.7,521.1 728.6,517.8 741.8,516.5 714.2,513.2 697.1,509.9 691.2,506.0 694.4,501.4 695.8,493.5 695.8,488.3 687.2,483.0 687.9,478.4 699.7,475.8 710.2,472.5 706.3,469.8 718.1,466.6 745.7,463.9 752.3,460.0 728.6,457.4 707.6,454.1 719.4,450.1 703.0,444.9 720.1,440.9 710.2,439.6 694.4,437.6 674.7,435.0 677.4,431.1 683.3,426.5 695.8,424.5 712.8,420.9 695.8,417.3 719.4,412.0 718.1,410.8 698.4,408.2 690.5,402.9 697.1,397.7 687.9,395.7 680.0,393.1 694.4,388.5 707.6,385.8 714.2,383.2 705.0,380.6 699.0,377.3 702.3,374.7 698.4,371.4 693.8,366.8 699.7,363.5 706.3,359.5 728.6,356.9 752.9,354.9 707.6,351.0 699.7,349.0 694.4,345.1 689.2,341.1 701.0,339.2 720.1,336.5 691.8,333.2 668.1,330.9 687.9,328.6 703.6,326.0 685.2,321.4 693.8,318.1 685.2,314.8 674.1,311.5 685.2,306.9 694.4,302.3 693.1,297.7 687.9,293.8 698.4,288.5 692.5,283.3 686.6,279.3 693.1,274.1 691.8,270.1 690.5,264.9 683.3,262.2 709.6,259.0" fill="#00ffff"/>
<polyline points="709.6,259.0 683.3,262.2 690.5,264.9 691.8,270.1 693.1,274.1 686.6,279.3 692.5,283.3 698.4,288.5 687.9,293.8 693.1,297.7 694.4,302.3 685.2,306.9 674.1,311.5 685.2,314.8 693.8,318.1 685.2,321.4 703.6,326.0 687.9,328.6 668.1,330.9 691.8,333.2 720.1,336.5 701.0,339.2 689.2,341.1 694.4,345.1 699.7,349.0 707.6,351.0 752.9,354.9 728.6,356.9 706.3,359.5 699.7,363.5 693.8,366.8 698.4,371.4 702.3,374.7 699.0,377.3 705.0,380.6 714.2,383.2 707.6,385.8 694.4,388.5 680.0,393.1 687.9,395.7 697.1,397.7 690.5,402.9 698.4,408.2 718.1,410.8 719.4,412.0 695.8,417.3 712.8,420.9 695.8,424.5 683.3,426.5 677.4,431.1 674.7,435.0 694.4,437.6 710.2,439.6 720.1,440.9 703.0,444.9 719.4,450.1 707.6,454.1 728.6,457.4 752.3,460.0 745.7,463.9 718.1,466.6 706.3,469.8 710.2,472.5 699.7,475.8 687.9,478.4 687.2,483.0 695.8,488.3 695.8,493.5 694.4,501.4 691.2,506.0 697.1,509.9 714.2,513.2 741.8,516.5 728.6,517.8 699.7,521.1 693.1,526.4 698.4,529.0 705.0,530.3 705.6,535.6 710.2,540.8 715.5,543.5 713.5,548.7 728.0,553.7 714.2,556.6 698.4,559.9 704.3,563.2 687.2,568.5 698.4,572.4 683.3,578.3 687.2,582.9 683.3,587.5 697.7,593.3 688.5,596.6 720.1,601.5 697.1,606.5 705.0,610.4 687.2,615.7 707.6,620.3 703.6,626.2 718.1,629.9 698.4,633.4 678.0,640.0 693.1,645.2 687.2,649.2 694.4,653.1 684.6,658.4 698.4,663.7 685.2,667.6 704.3,672.9 699.0,677.5 695.1,682.7 710.2,687.3 719.4,691.3 698.4,697.2 692.5,701.1 701.7,705.1 699.7,709.0 707.6,712.3 732.6,715.6 736.5,718.9 754.9,722.2 764.8,724.5 747.0,726.8 716.8,729.4 713.5,731.4 724.7,734.0 722.7,739.3 710.2,741.2 699.0,744.5 716.1,748.5 699.7,753.1 707.6,759.0 710.2,762.9 720.1,767.5 707.6,772.0 693.1,776.6 710.2,781.9 740.5,791.5 714.8,796.3 720.7,800.3 724.0,806.8 720.7,811.4 691.2,819.3 720.1,825.2 706.9,829.2 716.8,833.1 711.5,838.4 745.1,843.7 710.9,848.3 722.7,851.5 707.6,856.1 699.7,859.4 699.0,866.0 737.8,872.6 712.8,876.5 727.3,881.1 726.7,885.1 749.7,895.3 716.1,900.8 724.0,904.8 724.7,909.4 734.5,914.7 719.4,919.3 728.6,924.5 760.2,929.1 740.5,933.1 754.9,938.3 728.6,944.9 715.5,948.8 718.1,952.0 745.7,957.9 741.1,961.2 751.6,966.5 745.7,971.7 724.7,977.0 723.4,980.3 765.4,986.4 739.1,990.8 704.3,998.0 707.6,1002.6 724.0,1009.8 715.5,1015.8 726.0,1023.7 717.5,1028.3 741.8,1032.2 750.3,1037.5 739.1,1041.4 727.3,1045.3 723.4,1049.3 726.0,1053.2 720.1,1061.1 735.2,1066.4 719.4,1071.6 729.3,1075.6 712.8,1080.2 710.2,1084.8 700.4,1090.0 715.5,1095.3 720.1,1098.6 707.6,1108.5 719.4,1113.7 699.7,1118.3 733.2,1123.6 716.8,1128.2 719.4,1132.0 707.6,1141.2 741.1,1147.5 726.7,1151.7 726.0,1155.7 707.6,1161.6 707.6,1164.2 738.5,1174.7 719.4,1182.0 719.4,1184.6 703.6,1189.2 732.6,1195.1 736.5,1199.7 714.8,1208.3 714.8,1212.2 697.1,1218.1 723.4,1222.7 711.5,1227.3 734.5,1236.5 704.3,1241.8 723.4,1249.0 731.3,1253.6 703.6,1260.8 712.8,1264.8 720.7,1270.0 701.0,1274.7 720.1,1280.6 716.1,1283.9 736.5,1289.1 723.4,1293.1 752.3,1298.3 706.9,1303.2 709.5,1306.2 712.6,1309.8 729.7,1315.5 769.7,1322.1 751.7,1324.3 719.2,1326.5" fill="none" stroke="#ff0000" stroke-width="1.7" stroke-linejoin="round"/>
<polyline points="731.3,234.4 724.7,235.9 725.3,238.6 714.2,240.5 711.5,244.5 716.8,246.5 727.3,247.8 743.7,252.0 715.5,256.3 723.4,258.3 726.0,260.3 718.1,263.6 699.7,266.8 701.0,270.1 694.4,274.1 705.0,276.7 713.5,279.3 698.4,282.0 692.5,283.3 698.4,288.5 687.9,292.5 682.0,295.1 687.9,300.4 685.2,306.9 682.6,310.9 687.9,314.2 694.4,318.1 687.2,322.7 694.4,329.3 687.9,333.2 694.4,337.2 699.0,342.4 696.4,346.4 705.0,351.0 706.9,354.9 733.9,357.6 758.2,359.8 733.9,363.5 705.0,366.8 703.0,372.7 707.6,375.3 715.5,377.3 703.6,380.6 708.2,384.5 706.3,389.8 694.4,393.1 685.2,397.0 694.4,402.9 711.5,406.9 728.6,409.5 743.1,413.1 726.0,417.3 732.6,421.9 707.6,425.8 674.7,428.4 666.8,432.4 672.1,437.0 701.0,440.3 715.5,442.2 716.8,445.5 726.7,447.5 736.5,453.4 729.9,458.0 740.5,460.0 761.5,463.7 739.1,467.2 738.5,470.5 716.8,473.8 714.2,477.7 694.4,480.4 685.9,483.0 691.2,485.0 685.2,488.5 697.1,490.9 709.6,493.5 695.8,496.1 695.1,498.8 707.6,502.7 714.8,505.3 712.8,508.6 724.7,511.9 733.9,516.5 752.9,520.1 728.6,523.1 714.2,524.4 714.8,527.7 723.4,530.3 710.2,535.6 718.8,540.2 714.2,544.8 716.1,547.4 711.5,549.4 716.8,552.0 708.9,555.3 712.8,557.3 702.3,560.6 705.6,565.2 690.5,569.1 693.1,571.7 683.9,577.7 680.6,586.9 683.3,592.0 687.9,594.6 683.3,597.9 689.2,600.5 684.6,605.1 694.4,609.1 698.4,613.7 708.2,619.6 701.0,625.5 696.4,634.1 697.7,638.0 687.9,642.6 699.7,645.9 703.6,648.5 694.4,651.8 683.9,655.1 691.8,659.1 701.7,664.3 689.2,668.3 680.6,670.9 684.6,674.8 680.6,678.8 694.4,682.7 699.7,686.7 701.0,691.9 714.8,696.5 694.4,699.2 682.0,702.4 685.9,707.7 697.1,711.0 707.6,714.3 728.6,718.2 752.3,721.5 755.6,724.1 752.9,726.1 772.7,729.0 740.5,731.4 711.5,733.3 712.8,738.6 707.6,741.2 687.9,743.9 674.7,747.8 671.4,752.4 674.7,757.0 678.0,759.6 673.4,762.9 681.3,766.9 676.0,772.0 676.0,780.5 685.2,786.5 692.5,791.1 683.3,795.0 678.0,800.9 676.0,806.2 684.6,812.8 682.6,817.4 693.1,822.0 680.6,829.2 680.6,835.1 685.2,840.4 680.0,845.6 687.9,850.9 707.6,855.5 680.6,860.7 691.8,866.7 684.6,871.9 692.5,877.8 682.0,884.4 682.6,889.0 676.7,892.3 689.2,896.2 688.5,902.2 676.0,905.4 694.4,908.7 714.8,910.7 720.1,914.0 704.3,921.9 728.6,926.5 739.1,930.4 719.4,936.3 727.3,938.3 726.7,940.9 713.5,944.2 718.1,947.5 703.0,952.0 720.1,956.6 704.3,961.2 728.0,965.1 718.8,970.4 722.1,971.7 714.8,977.6 707.6,982.9 722.7,988.8 688.5,998.0 710.9,1008.5 697.7,1013.1 716.1,1019.1 687.2,1028.3 705.0,1034.8 708.2,1038.8 722.1,1042.7 703.0,1049.3 700.4,1051.9 712.2,1059.8 703.0,1064.4 722.7,1069.7 711.5,1072.3 698.4,1078.9 685.2,1085.4 677.4,1092.7 672.7,1098.6 682.6,1102.5 677.4,1105.2 680.0,1111.1 683.3,1119.0 677.4,1124.2 678.7,1132.0 681.3,1138.6 674.7,1143.8 683.3,1148.4 674.7,1155.7 680.0,1161.6 670.8,1166.8 676.7,1171.4 677.4,1177.4 673.4,1182.0 679.3,1188.5 676.0,1192.5 677.4,1199.1 692.5,1203.0 682.0,1208.3 683.9,1216.1 685.9,1225.3 680.0,1229.3 685.9,1235.9 682.0,1241.1 686.6,1246.4 689.8,1253.0 682.0,1258.2 685.9,1262.2 681.3,1266.1 683.3,1270.0 693.8,1274.7 686.6,1280.6 698.4,1284.5 712.2,1287.8 706.9,1289.1 723.4,1293.7 709.5,1298.3 706.0,1302.7 699.8,1306.2 702.9,1309.3 691.0,1313.7 708.6,1319.9 691.9,1324.7 692.8,1327.3 687.1,1331.3 712.6,1340.5 684.0,1348.0 683.1,1351.1 688.4,1355.5 691.5,1358.8 685.3,1359.9 685.8,1362.1 683.6,1363.4" fill="none" stroke="#000" stroke-width="2.0" stroke-linejoin="round"/>
<polyline points="987.5,252.2 988.0,255.7 987.7,259.2 986.8,262.6 986.8,266.1 986.4,269.6 986.9,272.8 987.2,276.0 986.5,279.3 986.6,282.5 987.8,285.7 987.5,288.9 988.0,292.1 987.3,295.3 988.0,298.6 988.5,301.8 988.1,305.0 989.1,308.1 989.2,311.1 988.4,314.2 988.6,317.2 989.4,320.3 990.0,323.3 989.5,326.4 989.5,329.4 989.9,332.5 989.7,335.5 990.1,338.6 990.6,341.9 991.0,345.3 990.9,348.6 991.2,352.0 991.5,355.3 992.1,358.7 992.1,362.0 992.0,365.1 993.2,368.2 993.1,371.3 993.5,374.4 993.1,377.4 994.3,380.5 994.4,383.6 993.7,386.7 994.2,389.8 994.8,392.9 995.0,396.1 995.4,399.2 994.9,402.3 995.6,405.4 995.6,408.6 995.3,411.7 995.8,414.8 996.3,417.9 996.4,421.1 996.1,424.2 996.4,427.3 996.0,430.6 996.4,433.9 997.3,437.2 997.1,440.5 997.0,443.7 997.7,447.0 998.1,450.3 998.3,453.6 998.1,456.9 998.5,460.0 998.9,463.1 999.4,466.1 999.4,469.2 999.5,472.3 999.9,475.4 999.6,478.4 999.9,481.5 1001.0,484.6 1001.6,487.7 1001.4,490.8 1001.4,493.8 1001.4,496.9 1002.1,500.0 1002.6,503.5 1002.2,507.1 1001.8,510.6 1002.1,514.2 1001.2,517.7 1002.1,520.8 1003.2,523.8 1003.3,526.9 1003.7,530.0 1004.0,533.0 1004.9,536.1 1005.9,539.2 1005.4,542.2 1006.8,545.3 1007.3,548.5 1007.7,551.6 1007.9,554.8 1008.4,557.9 1008.4,561.1 1006.5,563.5 1004.4,566.0 1004.0,569.0 1004.9,572.0 1007.2,574.9 1009.4,577.9 1012.4,580.8 1013.6,584.2 1014.7,587.7 1015.9,591.1 1017.3,594.6 1019.9,596.3 1022.4,598.0 1024.7,599.8 1026.6,601.5 1028.8,604.2 1030.7,607.0 1033.2,609.7 1035.4,612.4 1038.1,614.0 1040.9,615.5 1043.7,617.1 1045.8,618.6 1049.3,620.2 1051.7,622.8 1053.6,625.5 1056.1,628.1 1058.1,631.4 1060.9,634.7 1062.3,638.0 1063.1,641.5 1064.7,644.9 1065.4,648.3 1066.1,651.8 1067.4,654.6 1069.0,657.3 1069.7,660.1 1071.0,662.8 1072.8,665.6 1073.9,668.5 1075.2,671.5 1076.9,674.5 1077.8,677.4 1079.1,680.7 1079.9,684.0 1080.5,687.2 1081.2,690.5 1083.0,693.8 1083.3,697.1 1083.2,700.8 1083.9,704.5 1084.4,708.2 1083.7,711.9 1080.8,713.4 1078.0,714.8 1075.7,716.3 1072.1,717.8 1070.3,719.5 1067.8,721.2 1065.1,723.0 1062.3,724.7 1060.6,726.7 1057.8,728.6 1054.8,730.6 1052.5,733.6 1051.0,736.5 1048.8,739.5 1047.7,743.1 1046.0,746.7 1045.1,750.3 1044.1,753.6 1044.0,756.9 1044.5,760.1 1044.1,763.4 1043.1,766.7 1043.4,770.0 1042.4,774.0 1042.8,777.9 1042.2,781.9 1042.0,785.0 1041.9,788.2 1041.8,791.3 1043.0,794.4 1042.1,797.5 1043.2,800.7 1043.6,803.8 1043.7,806.9 1043.9,810.1 1045.3,813.2 1046.1,816.3 1046.4,819.4 1046.8,822.6 1047.3,825.7 1047.8,828.9 1048.3,832.0 1049.4,835.2 1049.8,838.4 1050.1,841.5 1050.6,844.7 1051.9,847.9 1052.0,851.0 1052.9,854.2 1053.4,857.2 1054.7,860.2 1055.4,863.2 1055.0,866.2 1055.9,869.3 1056.7,872.3 1058.2,875.3 1058.6,878.3 1059.2,881.4 1060.2,884.6 1061.8,887.7 1063.1,890.8 1064.3,893.9 1064.7,897.1 1066.5,900.2 1067.2,903.2 1068.0,906.2 1069.6,909.2 1069.7,912.2 1071.3,915.2 1071.5,918.1 1072.6,921.1 1074.5,924.1 1074.7,927.1 1076.3,930.1 1077.1,933.1 1078.7,935.9 1079.5,938.8 1080.7,941.6 1082.0,944.5 1084.0,947.3 1085.0,950.1 1086.7,953.0 1087.9,955.8 1088.4,958.7 1090.2,961.5 1090.9,964.5 1092.1,967.5 1093.5,970.5 1095.7,973.5 1096.9,976.5 1098.2,979.4 1098.9,982.4 1100.6,985.4 1102.1,988.4 1102.9,991.4 1104.4,994.4 1105.4,997.2 1106.7,1000.1 1108.3,1002.9 1110.5,1005.8 1111.5,1008.6 1113.4,1011.5 1114.3,1014.4 1115.5,1017.2 1117.5,1020.0 1119.0,1022.9 1119.6,1025.8 1122.1,1028.6 1123.0,1031.5 1124.7,1034.3 1127.2,1037.2 1127.8,1040.0 1129.6,1042.6 1132.0,1045.2 1132.8,1047.8 1133.9,1050.4 1135.5,1053.0 1137.1,1055.7 1139.2,1058.3 1139.9,1060.9 1142.4,1063.5 1143.3,1066.1 1145.5,1068.7 1146.9,1071.3 1147.7,1073.9 1149.2,1076.4 1151.0,1079.0 1152.1,1081.6 1154.3,1084.2 1155.1,1086.7 1156.7,1089.3 1159.4,1091.9 1160.1,1094.4 1162.0,1097.0 1163.4,1099.6 1164.8,1102.2 1166.0,1104.7 1168.6,1107.3 1170.2,1109.9 1171.7,1112.6 1172.2,1115.2 1173.9,1117.8 1175.9,1120.4 1177.8,1123.1 1178.8,1125.7 1180.5,1128.3 1182.0,1130.9 1183.1,1133.6 1184.9,1136.2 1186.0,1138.9 1187.4,1141.7 1188.5,1144.4 1190.2,1147.2 1192.4,1149.9 1193.1,1152.7 1194.7,1155.4 1196.1,1158.1 1197.8,1160.9 1198.6,1163.6 1199.8,1166.4 1201.2,1169.1 1202.6,1171.9 1204.6,1174.6 1206.6,1177.0 1207.8,1179.4 1209.8,1181.8 1211.9,1184.2 1213.9,1186.7 1215.8,1189.1 1217.3,1191.5 1219.0,1193.9 1221.2,1196.3 1222.9,1198.7 1224.9,1201.5 1225.8,1204.3 1227.3,1207.0 1229.5,1209.8 1230.5,1212.6 1232.6,1215.4 1233.7,1218.1 1235.7,1220.9 1236.3,1223.7 1238.2,1226.5 1240.0,1229.2 1240.6,1232.0 1243.1,1234.8 1243.7,1237.6 1246.0,1240.5 1247.8,1243.3 1249.1,1246.1 1250.1,1249.0 1251.3,1251.8 1253.4,1254.7 1255.4,1257.5 1256.2,1260.3 1258.4,1263.2 1259.1,1266.0 1261.6,1268.8 1262.1,1271.6 1264.1,1274.4 1266.4,1277.2 1267.9,1280.0 1269.6,1282.8 1271.1,1285.7 1272.6,1288.5 1274.1,1291.3 1275.1,1294.1 1277.0,1296.9 1278.3,1299.7 1280.6,1302.3 1282.1,1304.9 1283.2,1307.5 1284.6,1310.1 1287.3,1312.7 1288.7,1315.3 1290.0,1317.9 1291.5,1320.5 1293.5,1323.1 1294.6,1325.7 1296.2,1328.3 1297.7,1330.9 1300.5,1334.5" fill="none" stroke="#ff0000" stroke-width="1.6"/>
<polyline points="994.3,277.5 994.3,280.6 993.5,283.8 993.5,286.9 994.3,290.0 994.3,293.1 994.3,296.2 994.0,299.4 994.3,302.5 994.4,305.6 994.4,308.8 994.0,311.9 994.3,315.0 994.5,318.0 995.0,321.0 995.4,324.0 995.5,327.0 995.3,330.0 995.4,333.0 995.4,336.0 995.3,339.0 995.5,342.0 996.1,345.0 996.1,348.0 996.3,351.0 997.0,354.0 996.8,357.0 997.0,360.0 996.9,363.0 996.8,366.0 997.3,369.0 997.2,372.1 997.7,375.1 998.3,378.1 998.1,381.2 997.8,384.2 998.6,387.2 998.7,390.3 998.7,393.3 999.0,396.3 999.0,399.4 999.2,402.4 998.9,405.4 999.6,408.5 999.8,411.5 999.2,414.5 1000.1,417.6 1000.3,420.6 1000.3,423.6 1000.6,426.7 1000.9,429.7 1001.5,432.7 1001.4,435.8 1002.0,438.8 1001.8,441.8 1002.5,444.9 1002.8,447.9 1002.6,450.9 1003.0,454.0 1003.6,457.0 1003.6,460.0 1003.6,463.0 1003.5,466.1 1003.8,469.1 1004.3,472.1 1004.0,475.1 1004.9,478.2 1004.4,481.2 1005.3,484.2 1004.9,487.2 1005.7,490.3 1005.6,493.3 1005.6,496.3 1007.5,500.0 1007.9,503.0 1008.0,506.1 1008.0,509.1 1008.1,512.1 1008.6,515.2 1009.3,518.2 1009.2,521.2 1008.9,524.2 1009.8,527.3 1010.0,530.3 1010.4,533.3 1009.9,536.4 1010.6,539.4 1010.1,542.8 1010.8,546.1 1010.6,549.5 1010.7,552.9 1011.5,556.3 1010.9,559.6 1011.4,563.0 1008.8,568.0 1008.1,571.0 1008.1,574.0 1010.8,576.9 1012.3,579.9 1014.6,582.8 1015.9,586.1 1018.2,589.4 1020.0,592.7 1023.4,594.7 1025.7,596.6 1029.6,598.6 1030.6,601.0 1033.3,603.5 1034.5,606.0 1036.8,608.4 1039.9,610.0 1041.9,611.7 1044.6,613.3 1047.7,615.0 1050.1,616.6 1052.3,618.3 1055.6,621.3 1057.1,624.2 1059.2,627.2 1060.9,630.1 1062.6,633.1 1064.1,636.0 1064.8,639.0 1066.4,641.9 1067.3,645.1 1068.9,648.2 1070.4,651.4 1071.6,654.5 1072.9,657.7 1073.9,660.9 1075.2,664.0 1076.2,667.2 1077.2,670.3 1078.1,673.5 1079.3,676.5 1079.7,679.4 1080.2,682.4 1081.3,685.3 1082.4,688.2 1082.4,691.2 1083.2,694.4 1083.3,697.5 1083.7,700.7 1083.6,703.8 1084.8,707.0 1083.1,710.0 1082.5,712.9 1081.3,715.9 1078.8,718.0 1077.2,720.2 1074.6,722.3 1072.4,724.4 1070.3,726.6 1068.3,728.7 1066.2,731.2 1064.8,733.6 1062.7,736.0 1061.2,738.5 1059.7,741.5 1058.2,744.4 1056.0,747.3 1054.7,750.3 1053.7,753.2 1053.2,756.2 1052.3,759.1 1051.7,762.1 1050.7,765.0 1050.1,768.2 1050.1,771.4 1050.1,774.5 1049.4,777.7 1049.3,780.9 1049.5,784.1 1049.5,787.1 1050.4,790.1 1050.2,793.1 1050.4,796.1 1050.8,799.1 1051.1,802.0 1051.4,805.0 1052.0,808.0 1052.3,811.0 1052.4,814.0 1053.0,817.0 1053.3,820.2 1054.7,823.4 1055.4,826.5 1055.9,829.7 1056.3,832.9 1057.1,836.1 1057.8,839.3 1058.0,842.5 1059.0,845.6 1059.8,848.8 1060.2,852.0 1060.8,855.1 1062.1,858.1 1062.3,861.2 1063.2,864.3 1064.2,867.4 1064.6,870.4 1064.9,873.5 1066.3,876.6 1066.3,879.6 1066.6,882.7 1068.2,885.7 1068.6,888.7 1069.8,891.7 1071.3,894.8 1072.1,897.8 1072.4,900.8 1073.8,903.8 1074.7,906.8 1075.9,909.6 1076.7,912.5 1078.2,915.3 1078.7,918.2 1080.0,921.0 1081.2,923.8 1082.9,926.7 1083.1,929.5 1084.9,932.4 1085.4,935.2 1087.0,938.0 1088.0,940.8 1089.3,943.6 1090.8,946.4 1091.6,949.2 1092.5,951.9 1093.7,954.7 1094.9,957.5 1096.9,960.3 1097.8,963.1 1099.4,965.9 1100.3,968.7 1100.8,971.5 1102.6,974.3 1103.9,977.1 1105.1,979.9 1106.0,982.6 1107.1,985.4 1108.4,988.2 1109.9,991.0 1110.6,993.8 1112.0,996.6 1113.3,999.5 1115.1,1002.3 1116.2,1005.1 1117.7,1008.0 1118.9,1010.8 1119.7,1013.7 1120.9,1016.5 1122.5,1019.4 1123.5,1022.2 1125.0,1025.1 1126.9,1027.9 1128.7,1030.7 1129.9,1033.5 1131.7,1036.4 1132.6,1039.2 1134.4,1042.0 1136.6,1044.8 1137.2,1047.4 1139.0,1050.1 1140.1,1052.7 1141.6,1055.3 1144.0,1057.9 1145.5,1060.6 1146.7,1063.2 1147.7,1065.8 1149.3,1068.4 1150.7,1071.1 1152.7,1073.7 1154.3,1076.5 1155.8,1079.2 1157.5,1082.0 1158.8,1084.8 1160.8,1087.5 1162.9,1090.3 1164.4,1093.1 1165.4,1095.9 1167.5,1098.6 1169.3,1101.4 1170.5,1104.2 1172.8,1106.9 1174.1,1109.7 1175.8,1112.5 1177.1,1115.4 1179.2,1118.2 1180.5,1121.1 1181.8,1123.9 1182.9,1126.8 1184.7,1129.6 1185.8,1132.5 1187.9,1135.3 1189.8,1138.2 1190.6,1141.0 1192.4,1143.8 1193.9,1146.6 1195.3,1149.4 1197.1,1152.2 1198.9,1155.0 1200.2,1157.8 1201.4,1160.6 1203.4,1163.4 1204.3,1166.2 1206.2,1169.0 1207.7,1171.8 1209.3,1174.6 1211.0,1177.2 1212.1,1179.9 1214.2,1182.5 1215.6,1185.2 1217.6,1187.8 1219.6,1190.5 1220.9,1193.1 1222.0,1195.8 1224.1,1198.4 1226.0,1201.1 1227.7,1203.9 1228.9,1206.7 1230.5,1209.4 1231.2,1212.2 1233.6,1215.0 1234.9,1217.8 1236.2,1220.5 1238.0,1223.3 1239.5,1226.1 1240.2,1228.9 1242.4,1231.6 1243.8,1234.4 1244.7,1237.2 1246.8,1239.9 1248.2,1242.5 1249.3,1245.2 1251.4,1247.8 1252.3,1250.5 1254.3,1253.1 1255.7,1255.8 1257.0,1258.4 1258.9,1261.1 1260.3,1263.7 1261.6,1266.4 1264.0,1269.1 1264.7,1271.9 1266.2,1274.6 1268.3,1277.3 1270.2,1280.0 1271.7,1282.8 1273.4,1285.5 1274.7,1288.2 1276.5,1290.9 1277.7,1293.6 1279.3,1296.4 1281.1,1299.1 1282.4,1301.8 1284.2,1304.4 1286.6,1307.1 1287.8,1309.8 1290.1,1312.5 1291.9,1315.1 1293.2,1317.8 1295.2,1320.5 1297.1,1323.2 1298.9,1325.8 1300.3,1328.5" fill="none" stroke="#00ee00" stroke-width="1.7"/>
<polyline points="995.0,287.3 995.5,290.3 995.4,293.3 995.8,296.4 995.9,299.4 995.5,302.4 995.5,305.4 996.5,308.4 996.0,311.4 996.1,314.5 997.0,317.5 996.6,320.5 997.0,323.5 996.8,326.5 997.1,329.5 996.7,332.6 997.3,335.6 997.7,338.6 997.5,341.6 997.9,344.6 998.0,347.6 997.6,350.6 998.4,353.7 998.4,356.7 998.3,359.7 998.2,362.7 999.3,365.7 999.0,368.7 999.5,371.7 999.8,374.7 999.8,377.8 1000.2,380.8 999.8,383.8 1000.4,386.8 1000.2,389.8 1000.9,393.0 1001.1,396.1 1000.5,399.3 1000.7,402.4 1001.0,405.6 1001.9,408.8 1001.6,411.9 1002.0,415.1 1001.8,418.2 1002.2,421.4 1002.3,424.6 1002.5,427.7 1002.9,430.9 1003.1,434.0 1003.6,437.2 1003.5,440.3 1004.0,443.5 1004.1,446.6 1004.4,449.8 1004.2,452.9 1003.9,456.0 1004.7,459.2 1005.0,462.3 1005.1,465.5 1004.9,468.6 1005.2,471.7 1004.9,474.9 1005.7,478.0 1005.6,481.2 1005.5,484.3 1005.4,487.4 1006.4,490.6 1006.7,493.7 1005.9,496.9 1006.8,500.0 1006.8,503.2 1006.9,506.4 1007.4,509.6 1008.2,512.8 1008.7,516.0 1008.2,519.2 1009.2,522.4 1008.9,525.6 1009.9,528.6 1009.8,531.7 1010.6,534.7 1011.0,537.8 1010.8,540.8 1011.5,543.9 1011.1,546.9 1011.2,550.0 1012.0,553.0 1011.7,556.1 1012.1,559.1 1012.8,562.4 1013.4,565.7 1013.5,569.0 1010.3,572.0 1011.2,577.9 1013.4,581.3 1016.8,584.8 1018.2,587.8 1019.1,590.7 1020.7,593.6 1022.2,596.6 1025.3,598.6 1028.2,600.5 1031.2,602.5 1033.2,606.5 1035.4,610.4 1037.6,612.2 1040.2,614.0 1043.1,615.8 1045.3,617.6 1048.0,619.4 1051.3,621.2 1052.8,623.9 1054.8,626.7 1056.2,629.4 1058.6,632.1 1060.7,635.4 1062.2,638.6 1064.7,641.9 1065.9,645.1 1066.5,648.2 1068.3,651.4 1069.3,654.5 1070.7,657.7 1071.5,660.7 1073.0,663.6 1074.2,666.5 1074.6,669.5 1075.8,672.5 1077.6,675.4 1078.7,678.4 1078.8,681.3 1079.9,684.3 1080.8,687.3 1081.4,690.2 1082.3,693.2 1082.8,696.7 1083.5,700.1 1084.4,703.5 1084.7,707.0 1084.8,711.0 1085.2,714.9 1079.9,718.8 1078.5,722.1 1076.7,725.4 1074.3,728.7 1071.6,731.3 1069.5,733.9 1066.3,736.5 1065.1,739.3 1064.2,742.0 1063.3,744.8 1061.5,747.5 1060.5,750.3 1059.6,753.6 1059.1,756.8 1057.7,760.1 1057.1,763.4 1055.5,766.6 1054.6,769.9 1054.7,773.2 1054.8,776.6 1054.1,780.0 1053.7,783.3 1053.3,786.6 1053.5,790.0 1053.4,793.4 1054.3,796.8 1054.6,800.2 1054.2,803.6 1054.5,807.0 1055.3,810.4 1055.7,813.5 1056.4,816.5 1056.5,819.6 1056.8,822.6 1057.5,825.7 1058.6,828.8 1058.6,831.8 1059.2,834.9 1059.9,837.9 1060.4,841.0 1061.1,844.2 1062.4,847.3 1062.4,850.5 1062.9,853.7 1064.6,856.8 1065.3,860.0 1066.1,863.2 1066.3,866.3 1067.6,869.5 1068.4,872.4 1068.5,875.3 1069.9,878.3 1070.9,881.2 1071.5,884.1 1072.3,887.0 1072.9,890.0 1073.8,892.9 1074.5,895.8 1075.5,898.9 1077.1,901.9 1077.9,905.0 1079.5,908.1 1079.8,911.1 1081.7,914.2 1082.6,917.3 1083.9,920.4 1085.0,923.4 1086.1,926.5 1087.0,929.4 1087.7,932.3 1089.6,935.3 1090.3,938.2 1091.6,941.1 1093.2,944.0 1094.3,947.0 1095.4,949.9 1097.1,952.8 1098.0,955.6 1098.9,958.4 1100.0,961.1 1101.8,963.9 1102.6,966.7 1104.1,969.5 1104.9,972.3 1105.9,975.1 1107.5,977.8 1108.9,980.6 1109.5,983.4 1111.4,986.2 1112.9,989.1 1114.1,991.9 1115.4,994.8 1115.9,997.6 1117.8,1000.5 1119.4,1003.4 1119.9,1006.2 1121.5,1009.0 1122.8,1011.9 1124.5,1014.8 1125.8,1017.7 1127.3,1020.7 1129.1,1023.6 1129.8,1026.5 1131.3,1029.4 1132.8,1032.4 1134.3,1035.3 1135.7,1038.2 1138.1,1040.9 1139.5,1043.7 1140.3,1046.4 1142.3,1049.1 1143.6,1051.9 1145.1,1054.6 1146.7,1057.3 1148.6,1060.0 1150.0,1062.8 1151.3,1065.5 1152.7,1068.2 1154.4,1071.0 1155.7,1073.7 1157.8,1076.5 1159.6,1079.2 1161.0,1082.0 1162.3,1084.8 1164.1,1087.5 1165.9,1090.3 1167.8,1093.1 1169.7,1095.9 1170.9,1098.6 1173.0,1101.4 1174.5,1104.2 1176.0,1106.9 1177.6,1109.7 1179.2,1112.5 1181.0,1115.4 1182.2,1118.2 1184.0,1121.1 1185.3,1123.9 1186.6,1126.8 1188.4,1129.6 1190.1,1132.5 1191.0,1135.3 1192.9,1138.2 1194.4,1141.0 1196.3,1143.8 1197.8,1146.6 1198.6,1149.4 1200.5,1152.2 1201.8,1155.0 1202.7,1157.8 1204.3,1160.6 1205.4,1163.4 1207.5,1166.2 1208.7,1169.0 1210.4,1171.8 1211.7,1174.6 1213.0,1177.2 1214.5,1179.9 1215.8,1182.5 1216.8,1185.2 1218.7,1187.8 1219.5,1190.5 1221.1,1193.1 1223.2,1195.8 1223.9,1198.4 1225.4,1201.1 1226.9,1203.9 1229.1,1206.7 1229.9,1209.4 1231.2,1212.2 1233.5,1215.0 1234.3,1217.8 1236.5,1220.5 1237.8,1223.3 1239.4,1226.1 1241.0,1228.9 1242.1,1231.6 1243.8,1234.4 1244.5,1237.2 1246.8,1240.0 1248.1,1242.9 1249.8,1245.7 1250.8,1248.5 1252.9,1251.4 1254.7,1254.2 1255.3,1257.1 1257.1,1259.9 1258.9,1262.7 1260.7,1265.6 1261.6,1268.4 1263.2,1271.2 1264.8,1274.0 1266.8,1276.8 1268.6,1279.6 1269.8,1282.4 1271.4,1285.2 1273.0,1288.1 1274.6,1290.9 1276.2,1293.7 1277.5,1296.5 1279.5,1299.3 1281.6,1302.1 1282.7,1304.8 1284.7,1307.5 1285.9,1310.2 1288.1,1312.9 1289.9,1315.6 1291.5,1318.3 1293.0,1321.0 1294.7,1323.7 1296.5,1326.4 1298.5,1329.1 1299.4,1331.8 1301.5,1334.5" fill="none" stroke="#0000ff" stroke-width="1.7"/>
<polyline points="995.0,260.7 1010.1,510.0 1012.4,559.1 1014.4,570.0 1029.1,591.7 1035.0,597.6 1056.7,613.3 1063.6,617.3 1070.5,620.2 1073.5,626.2 1074.5,638.0 1077.4,667.6 1081.4,705.0 1083.3,711.9 1078.4,716.8 1068.6,736.5 1066.6,746.4 1059.4,760.0 1052.5,768.0 1052.8,780.0 1056.1,801.6 1059.4,847.6 1069.3,878.3 1079.1,909.0 1090.1,930.9 1101.0,952.8 1116.4,983.4 1131.7,1014.1 1145.2,1040.0 1165.7,1080.9 1182.5,1114.5 1201.7,1150.6 1221.0,1189.1 1245.0,1234.8 1264.2,1270.8 1288.3,1316.5 1312.3,1363.4" fill="none" stroke="#0a8585" stroke-width="3.6" stroke-dasharray="25.6 8.4" stroke-linejoin="round"/>
<line x1="831" y1="1081" x2="978.4" y2="1363" stroke="#0a8a0a" stroke-width="1.6" stroke-dasharray="9 4"/>
<rect x="1352.6" y="236" width="346" height="1127.5" fill="#fff" />
<defs><clipPath id="chclip"><rect x="1352.6" y="304.5" width="346.0" height="858.7"/></clipPath><filter id="spec" x="-5%" y="-5%" width="110%" height="110%" color-interpolation-filters="sRGB"><feGaussianBlur in="SourceGraphic" stdDeviation="2.4 2.8" result="b"/><feTurbulence type="fractalNoise" baseFrequency="0.38 0.004" numOctaves="2" seed="11" result="n"/><feColorMatrix in="n" type="matrix" values="0 0 0 0 0.5  0 2.2 0 0 -0.6  0 0 1 0 0  0 0 0 0 1" result="n2"/><feDisplacementMap in="b" in2="n2" scale="15" xChannelSelector="R" yChannelSelector="G"/></filter><filter id="spec2" x="-5%" y="-5%" width="110%" height="110%" color-interpolation-filters="sRGB"><feGaussianBlur in="SourceGraphic" stdDeviation="0.8 1.8" result="b"/><feTurbulence type="fractalNoise" baseFrequency="0.5 0.006" numOctaves="2" seed="5" result="n"/><feColorMatrix in="n" type="matrix" values="0 0 0 0 0.5  0 2.2 0 0 -0.6  0 0 1 0 0  0 0 0 0 1" result="n2"/><feDisplacementMap in="b" in2="n2" scale="30" xChannelSelector="R" yChannelSelector="G"/></filter><filter id="soft" x="-20%" y="-2%" width="140%" height="104%"><feGaussianBlur stdDeviation="1.3 2.5"/></filter><filter id="dashf" x="-2%" y="-2%" width="104%" height="104%"><feGaussianBlur stdDeviation="0.4 0.8"/></filter><filter id="streak" x="0" y="0" width="100%" height="100%" color-interpolation-filters="sRGB"><feTurbulence type="fractalNoise" baseFrequency="0.45 0.012" numOctaves="2" seed="8" result="n"/><feColorMatrix in="n" type="matrix" values="0 0 0 0 0.35  0 0 0 0 0.1  0 0 0 0 0  0.8 0 0 0 -0.36" result="m"/><feComposite in="m" in2="SourceGraphic" operator="in"/></filter></defs>
<g clip-path="url(#chclip)">
<rect x="1411.8" y="738.8" width="59.2" height="403.8" fill="#e6daec" />
<g filter="url(#dashf)">
<rect x="1592.1" y="440.9" width="2.3" height="14.3" rx="1.1" fill="#10107a"/>
<rect x="1604.5" y="423.6" width="1.8" height="16.0" rx="0.9" fill="#1a1a90"/>
<rect x="1688.8" y="362.2" width="2.3" height="7.8" rx="1.1" fill="#2424c0"/>
<rect x="1635.1" y="440.8" width="2.0" height="18.9" rx="1.0" fill="#2a2ad0"/>
<rect x="1691.9" y="448.9" width="1.5" height="21.6" rx="0.7" fill="#2424c0"/>
<rect x="1649.5" y="377.4" width="1.7" height="10.2" rx="0.9" fill="#2a2ad0"/>
<rect x="1562.0" y="344.2" width="1.6" height="18.0" rx="0.8" fill="#2424c0"/>
<rect x="1649.3" y="486.6" width="2.3" height="8.9" rx="1.2" fill="#1a1a90"/>
<rect x="1657.7" y="383.2" width="1.6" height="6.7" rx="0.8" fill="#2a2ad0"/>
<rect x="1571.7" y="342.2" width="1.6" height="12.4" rx="0.8" fill="#1a1a90"/>
<rect x="1566.1" y="480.7" width="2.4" height="30.0" rx="1.2" fill="#2424c0"/>
<rect x="1565.0" y="342.9" width="2.5" height="7.6" rx="1.3" fill="#2424c0"/>
<rect x="1500.8" y="332.3" width="1.6" height="15.6" rx="0.8" fill="#2424c0"/>
<rect x="1657.4" y="349.0" width="1.9" height="11.9" rx="1.0" fill="#2a2ad0"/>
<rect x="1630.1" y="382.0" width="1.7" height="17.6" rx="0.8" fill="#2424c0"/>
<rect x="1610.6" y="441.5" width="1.6" height="19.4" rx="0.8" fill="#2424c0"/>
<rect x="1653.7" y="337.1" width="1.8" height="17.8" rx="0.9" fill="#1c1ca8"/>
<rect x="1613.5" y="479.2" width="1.5" height="6.6" rx="0.7" fill="#1c1ca8"/>
<rect x="1601.5" y="481.7" width="2.5" height="4.1" rx="1.3" fill="#2424c0"/>
<rect x="1546.3" y="413.8" width="1.4" height="16.0" rx="0.7" fill="#1a1a90"/>
<rect x="1520.4" y="481.4" width="2.1" height="6.7" rx="1.0" fill="#1a1a90"/>
<rect x="1535.2" y="435.3" width="1.3" height="5.0" rx="0.7" fill="#1c1ca8"/>
<rect x="1520.3" y="465.2" width="2.1" height="15.1" rx="1.0" fill="#2424c0"/>
<rect x="1590.4" y="392.9" width="2.1" height="13.6" rx="1.1" fill="#2424c0"/>
<rect x="1578.4" y="466.9" width="2.4" height="18.0" rx="1.2" fill="#2424c0"/>
<rect x="1561.1" y="341.0" width="2.2" height="11.5" rx="1.1" fill="#1c1ca8"/>
<rect x="1565.7" y="304.5" width="2.2" height="12.5" rx="1.1" fill="#1c1ca8"/>
<rect x="1542.0" y="391.3" width="1.9" height="6.2" rx="0.9" fill="#1c1ca8"/>
<rect x="1599.9" y="408.0" width="2.2" height="18.5" rx="1.1" fill="#2424c0"/>
<rect x="1544.1" y="486.2" width="1.4" height="26.1" rx="0.7" fill="#2424c0"/>
<rect x="1534.3" y="465.9" width="1.9" height="9.6" rx="1.0" fill="#10107a"/>
<rect x="1663.2" y="478.1" width="1.5" height="19.2" rx="0.8" fill="#1c1ca8"/>
<rect x="1523.4" y="384.0" width="1.4" height="9.7" rx="0.7" fill="#2a2ad0"/>
<rect x="1675.1" y="456.3" width="1.6" height="18.3" rx="0.8" fill="#10107a"/>
<rect x="1606.5" y="410.6" width="1.9" height="4.1" rx="0.9" fill="#1a1a90"/>
<rect x="1638.3" y="354.0" width="2.5" height="13.4" rx="1.3" fill="#1a1a90"/>
<rect x="1524.4" y="375.0" width="2.0" height="20.4" rx="1.0" fill="#2424c0"/>
<rect x="1662.6" y="477.9" width="2.5" height="13.3" rx="1.2" fill="#10107a"/>
<rect x="1615.9" y="388.6" width="2.3" height="10.0" rx="1.1" fill="#10107a"/>
<rect x="1598.3" y="346.9" width="1.6" height="17.3" rx="0.8" fill="#2a2ad0"/>
<rect x="1612.3" y="357.8" width="1.9" height="15.1" rx="1.0" fill="#1a1a90"/>
<rect x="1510.5" y="375.5" width="1.8" height="14.8" rx="0.9" fill="#2424c0"/>
<rect x="1627.9" y="357.6" width="2.3" height="13.1" rx="1.1" fill="#1a1a90"/>
<rect x="1543.2" y="418.2" width="2.3" height="14.2" rx="1.1" fill="#2424c0"/>
<rect x="1688.7" y="475.3" width="2.6" height="12.2" rx="1.3" fill="#1a1a90"/>
<rect x="1626.4" y="434.7" width="1.4" height="16.3" rx="0.7" fill="#1a1a90"/>
<rect x="1563.5" y="491.4" width="2.3" height="9.7" rx="1.1" fill="#10107a"/>
<rect x="1506.4" y="424.3" width="2.5" height="8.9" rx="1.3" fill="#2a2ad0"/>
<rect x="1532.9" y="438.2" width="1.9" height="8.7" rx="1.0" fill="#1c1ca8"/>
<rect x="1616.3" y="328.5" width="1.6" height="5.4" rx="0.8" fill="#1a1a90"/>
<rect x="1545.9" y="359.5" width="2.2" height="27.7" rx="1.1" fill="#2424c0"/>
<rect x="1566.4" y="365.8" width="1.3" height="15.5" rx="0.7" fill="#10107a"/>
<rect x="1574.9" y="411.0" width="1.6" height="7.6" rx="0.8" fill="#1a1a90"/>
<rect x="1525.9" y="384.6" width="2.4" height="13.1" rx="1.2" fill="#2424c0"/>
<rect x="1549.6" y="424.0" width="2.0" height="22.8" rx="1.0" fill="#1c1ca8"/>
<rect x="1593.2" y="356.1" width="1.7" height="10.4" rx="0.8" fill="#1a1a90"/>
<rect x="1587.8" y="407.9" width="1.5" height="5.5" rx="0.8" fill="#2a2ad0"/>
<rect x="1625.0" y="398.6" width="1.4" height="10.5" rx="0.7" fill="#1a1a90"/>
<rect x="1552.5" y="338.2" width="1.5" height="6.0" rx="0.7" fill="#1c1ca8"/>
<rect x="1582.9" y="357.0" width="2.2" height="7.4" rx="1.1" fill="#1c1ca8"/>
<rect x="1631.5" y="391.0" width="2.2" height="8.2" rx="1.1" fill="#10107a"/>
<rect x="1628.5" y="423.2" width="2.2" height="6.2" rx="1.1" fill="#1a1a90"/>
<rect x="1592.9" y="350.3" width="1.6" height="14.7" rx="0.8" fill="#1c1ca8"/>
<rect x="1527.5" y="404.7" width="1.7" height="13.1" rx="0.9" fill="#1c1ca8"/>
<rect x="1568.5" y="420.7" width="1.5" height="16.3" rx="0.8" fill="#10107a"/>
<rect x="1658.1" y="403.8" width="2.3" height="9.9" rx="1.2" fill="#10107a"/>
<rect x="1577.1" y="381.5" width="1.8" height="15.2" rx="0.9" fill="#2a2ad0"/>
<rect x="1570.6" y="382.0" width="2.4" height="8.7" rx="1.2" fill="#2a2ad0"/>
<rect x="1564.2" y="442.3" width="2.2" height="20.9" rx="1.1" fill="#2a2ad0"/>
<rect x="1539.7" y="461.1" width="1.9" height="18.9" rx="1.0" fill="#2a2ad0"/>
<rect x="1597.3" y="440.7" width="2.4" height="28.3" rx="1.2" fill="#1a1a90"/>
<rect x="1660.1" y="483.9" width="1.8" height="9.2" rx="0.9" fill="#1a1a90"/>
<rect x="1666.6" y="317.2" width="2.1" height="27.5" rx="1.0" fill="#2a2ad0"/>
<rect x="1668.6" y="450.6" width="2.1" height="19.2" rx="1.1" fill="#2a2ad0"/>
<rect x="1598.1" y="352.4" width="2.4" height="6.7" rx="1.2" fill="#2a2ad0"/>
<rect x="1532.1" y="332.5" width="1.7" height="2.6" rx="0.8" fill="#1c1ca8"/>
<rect x="1565.5" y="487.5" width="2.3" height="8.6" rx="1.2" fill="#2424c0"/>
<rect x="1689.2" y="462.6" width="1.4" height="8.8" rx="0.7" fill="#10107a"/>
<rect x="1609.5" y="324.3" width="2.4" height="4.4" rx="1.2" fill="#1a1a90"/>
<rect x="1599.6" y="405.1" width="2.3" height="11.7" rx="1.2" fill="#2424c0"/>
<rect x="1649.6" y="370.2" width="2.5" height="19.8" rx="1.2" fill="#2424c0"/>
<rect x="1571.9" y="314.9" width="2.1" height="4.1" rx="1.0" fill="#1c1ca8"/>
<rect x="1590.1" y="451.3" width="2.3" height="3.1" rx="1.1" fill="#2424c0"/>
<rect x="1623.4" y="343.5" width="1.9" height="15.5" rx="1.0" fill="#2a2ad0"/>
<rect x="1686.3" y="413.2" width="2.3" height="24.8" rx="1.1" fill="#2a2ad0"/>
<rect x="1602.4" y="458.9" width="1.6" height="18.3" rx="0.8" fill="#2424c0"/>
<rect x="1530.4" y="307.7" width="1.7" height="19.4" rx="0.8" fill="#2424c0"/>
<rect x="1633.8" y="379.0" width="1.8" height="22.8" rx="0.9" fill="#1a1a90"/>
<rect x="1624.8" y="440.8" width="1.7" height="13.1" rx="0.9" fill="#10107a"/>
<rect x="1515.9" y="396.8" width="2.0" height="13.7" rx="1.0" fill="#2a2ad0"/>
<rect x="1520.6" y="417.8" width="2.3" height="18.0" rx="1.1" fill="#2a2ad0"/>
<rect x="1563.2" y="411.8" width="2.4" height="17.6" rx="1.2" fill="#2424c0"/>
<rect x="1620.2" y="482.9" width="2.3" height="16.8" rx="1.1" fill="#10107a"/>
<rect x="1508.7" y="443.7" width="1.6" height="7.4" rx="0.8" fill="#1a1a90"/>
<rect x="1626.6" y="412.4" width="1.7" height="28.8" rx="0.9" fill="#1c1ca8"/>
<rect x="1590.1" y="402.2" width="2.6" height="4.8" rx="1.3" fill="#2424c0"/>
<rect x="1646.8" y="484.6" width="1.9" height="22.0" rx="0.9" fill="#1c1ca8"/>
<rect x="1528.6" y="426.5" width="2.0" height="11.3" rx="1.0" fill="#10107a"/>
<rect x="1653.6" y="332.8" width="2.1" height="3.1" rx="1.0" fill="#2a2ad0"/>
<rect x="1632.2" y="464.0" width="1.5" height="14.7" rx="0.8" fill="#10107a"/>
<rect x="1578.1" y="474.1" width="1.7" height="16.4" rx="0.9" fill="#10107a"/>
<rect x="1629.1" y="368.2" width="1.6" height="29.2" rx="0.8" fill="#2a2ad0"/>
<rect x="1588.3" y="400.7" width="1.8" height="8.2" rx="0.9" fill="#2424c0"/>
<rect x="1634.5" y="463.1" width="2.1" height="8.7" rx="1.0" fill="#2424c0"/>
<rect x="1681.7" y="457.3" width="1.4" height="3.9" rx="0.7" fill="#1c1ca8"/>
<rect x="1642.1" y="408.9" width="1.6" height="29.5" rx="0.8" fill="#2424c0"/>
<rect x="1502.3" y="441.9" width="2.3" height="26.5" rx="1.1" fill="#10107a"/>
<rect x="1505.6" y="464.7" width="1.8" height="24.2" rx="0.9" fill="#2a2ad0"/>
<rect x="1687.3" y="341.6" width="1.7" height="5.9" rx="0.8" fill="#1c1ca8"/>
<rect x="1669.1" y="430.6" width="2.5" height="17.0" rx="1.3" fill="#1a1a90"/>
<rect x="1667.9" y="378.7" width="1.5" height="18.0" rx="0.7" fill="#1c1ca8"/>
<rect x="1536.1" y="461.7" width="2.2" height="2.7" rx="1.1" fill="#1a1a90"/>
<rect x="1549.0" y="368.0" width="1.4" height="15.1" rx="0.7" fill="#1c1ca8"/>
<rect x="1553.7" y="444.5" width="2.1" height="11.7" rx="1.1" fill="#1c1ca8"/>
<rect x="1612.6" y="319.8" width="2.3" height="8.6" rx="1.1" fill="#1a1a90"/>
<rect x="1669.8" y="336.6" width="2.0" height="6.4" rx="1.0" fill="#1c1ca8"/>
<rect x="1588.4" y="381.2" width="1.4" height="5.8" rx="0.7" fill="#10107a"/>
<rect x="1656.9" y="429.8" width="2.4" height="13.4" rx="1.2" fill="#1a1a90"/>
<rect x="1640.1" y="408.9" width="1.9" height="18.6" rx="1.0" fill="#2424c0"/>
<rect x="1503.4" y="423.4" width="1.5" height="15.2" rx="0.7" fill="#2a2ad0"/>
<rect x="1674.3" y="407.7" width="2.1" height="17.8" rx="1.0" fill="#1c1ca8"/>
<rect x="1589.2" y="380.4" width="1.5" height="18.9" rx="0.7" fill="#1c1ca8"/>
<rect x="1622.5" y="354.4" width="1.3" height="5.5" rx="0.7" fill="#1c1ca8"/>
<rect x="1623.8" y="417.5" width="2.0" height="19.7" rx="1.0" fill="#1a1a90"/>
<rect x="1591.3" y="358.9" width="2.3" height="7.1" rx="1.1" fill="#1c1ca8"/>
<rect x="1572.7" y="317.2" width="2.3" height="15.9" rx="1.2" fill="#2a2ad0"/>
<rect x="1638.8" y="408.0" width="2.0" height="8.4" rx="1.0" fill="#2424c0"/>
<rect x="1634.3" y="405.4" width="1.7" height="3.5" rx="0.9" fill="#1c1ca8"/>
<rect x="1572.7" y="353.5" width="2.2" height="8.5" rx="1.1" fill="#1a1a90"/>
<rect x="1667.4" y="353.7" width="2.5" height="8.6" rx="1.2" fill="#2a2ad0"/>
<rect x="1689.1" y="316.7" width="1.5" height="11.4" rx="0.8" fill="#2a2ad0"/>
<rect x="1582.9" y="377.5" width="1.6" height="16.6" rx="0.8" fill="#2424c0"/>
<rect x="1566.2" y="362.0" width="2.4" height="5.1" rx="1.2" fill="#10107a"/>
<rect x="1656.1" y="408.1" width="2.4" height="7.2" rx="1.2" fill="#1c1ca8"/>
<rect x="1682.3" y="407.0" width="1.8" height="10.5" rx="0.9" fill="#2a2ad0"/>
<rect x="1563.9" y="338.7" width="2.1" height="19.5" rx="1.0" fill="#10107a"/>
<rect x="1588.2" y="390.9" width="1.9" height="8.9" rx="1.0" fill="#1c1ca8"/>
<rect x="1657.8" y="304.5" width="2.2" height="5.8" rx="1.1" fill="#2a2ad0"/>
<rect x="1591.4" y="333.6" width="1.6" height="21.6" rx="0.8" fill="#2a2ad0"/>
<rect x="1565.5" y="323.8" width="2.4" height="20.9" rx="1.2" fill="#1a1a90"/>
<rect x="1573.9" y="419.0" width="2.6" height="8.8" rx="1.3" fill="#2a2ad0"/>
<rect x="1601.5" y="342.0" width="2.6" height="15.9" rx="1.3" fill="#10107a"/>
<rect x="1612.2" y="378.1" width="2.5" height="7.2" rx="1.3" fill="#10107a"/>
<rect x="1677.0" y="311.6" width="1.9" height="25.8" rx="1.0" fill="#10107a"/>
<rect x="1659.6" y="357.5" width="1.3" height="5.8" rx="0.7" fill="#2a2ad0"/>
<rect x="1659.5" y="347.3" width="1.4" height="8.5" rx="0.7" fill="#1c1ca8"/>
<rect x="1564.5" y="386.7" width="2.0" height="15.2" rx="1.0" fill="#2424c0"/>
<rect x="1573.4" y="398.5" width="1.4" height="9.4" rx="0.7" fill="#10107a"/>
<rect x="1563.9" y="310.1" width="1.3" height="14.3" rx="0.7" fill="#2a2ad0"/>
<rect x="1622.0" y="407.5" width="1.9" height="22.8" rx="1.0" fill="#10107a"/>
<rect x="1591.1" y="407.1" width="1.9" height="7.8" rx="0.9" fill="#1c1ca8"/>
<rect x="1621.3" y="316.8" width="2.2" height="6.3" rx="1.1" fill="#2424c0"/>
<rect x="1675.2" y="324.2" width="1.6" height="3.6" rx="0.8" fill="#2a2ad0"/>
<rect x="1560.2" y="388.2" width="1.8" height="6.1" rx="0.9" fill="#10107a"/>
<rect x="1607.5" y="334.3" width="2.1" height="23.8" rx="1.1" fill="#2424c0"/>
<rect x="1561.6" y="389.5" width="2.0" height="16.4" rx="1.0" fill="#10107a"/>
<rect x="1649.3" y="422.7" width="2.5" height="19.0" rx="1.3" fill="#2424c0"/>
<rect x="1641.6" y="403.3" width="3.5" height="28.7" rx="1.8" fill="#1c1ca8"/>
<rect x="1658.7" y="407.5" width="3.0" height="12.8" rx="1.5" fill="#1a1a90"/>
<rect x="1647.6" y="437.6" width="3.5" height="9.7" rx="1.7" fill="#2424c0"/>
<rect x="1649.0" y="382.4" width="3.4" height="16.7" rx="1.7" fill="#2a2ad0"/>
<rect x="1642.9" y="401.6" width="2.7" height="26.8" rx="1.4" fill="#10107a"/>
<rect x="1658.2" y="387.1" width="3.4" height="17.0" rx="1.7" fill="#10107a"/>
<rect x="1643.8" y="393.6" width="2.4" height="12.0" rx="1.2" fill="#1a1a90"/>
<rect x="1643.7" y="408.2" width="3.4" height="15.6" rx="1.7" fill="#2424c0"/>
<rect x="1652.5" y="422.5" width="2.7" height="6.8" rx="1.3" fill="#2424c0"/>
<rect x="1648.5" y="399.9" width="2.7" height="20.1" rx="1.4" fill="#2424c0"/>
<rect x="1658.6" y="427.0" width="2.9" height="10.0" rx="1.4" fill="#1a1a90"/>
<rect x="1643.7" y="383.2" width="3.5" height="12.1" rx="1.7" fill="#2424c0"/>
<rect x="1643.6" y="401.7" width="3.5" height="10.5" rx="1.7" fill="#1a1a90"/>
<rect x="1640.5" y="416.5" width="3.1" height="9.0" rx="1.5" fill="#2a2ad0"/>
<rect x="1656.7" y="424.8" width="2.6" height="9.5" rx="1.3" fill="#2a2ad0"/>
<rect x="1659.2" y="415.8" width="3.0" height="4.2" rx="1.5" fill="#10107a"/>
<rect x="1653.9" y="399.1" width="3.1" height="8.3" rx="1.6" fill="#1c1ca8"/>
<rect x="1641.9" y="405.6" width="3.2" height="14.4" rx="1.6" fill="#1c1ca8"/>
<rect x="1642.1" y="436.1" width="3.2" height="10.9" rx="1.6" fill="#10107a"/>
<rect x="1652.6" y="418.1" width="3.2" height="4.5" rx="1.6" fill="#1c1ca8"/>
<rect x="1645.9" y="385.5" width="3.1" height="13.0" rx="1.5" fill="#2424c0"/>
<rect x="1650.2" y="431.9" width="3.6" height="17.3" rx="1.8" fill="#10107a"/>
<rect x="1641.3" y="398.0" width="3.0" height="24.0" rx="1.5" fill="#1a1a90"/>
<rect x="1639.7" y="831.6" width="2.1" height="7.7" rx="1.1" fill="#1a1a90"/>
<rect x="1684.5" y="772.5" width="2.3" height="7.5" rx="1.1" fill="#10107a"/>
<rect x="1595.3" y="908.3" width="1.4" height="6.8" rx="0.7" fill="#10107a"/>
<rect x="1558.5" y="903.0" width="1.9" height="17.9" rx="0.9" fill="#1a1a90"/>
<rect x="1651.0" y="877.5" width="2.2" height="4.1" rx="1.1" fill="#1a1a90"/>
<rect x="1557.7" y="871.8" width="2.5" height="16.8" rx="1.3" fill="#1a1a90"/>
<rect x="1594.1" y="867.3" width="1.7" height="3.0" rx="0.9" fill="#10107a"/>
<rect x="1644.5" y="953.4" width="1.6" height="3.4" rx="0.8" fill="#2a2ad0"/>
<rect x="1608.8" y="926.8" width="2.4" height="2.0" rx="1.2" fill="#10107a"/>
<rect x="1606.3" y="833.4" width="2.0" height="10.7" rx="1.0" fill="#10107a"/>
<rect x="1643.6" y="942.5" width="2.1" height="19.9" rx="1.1" fill="#2424c0"/>
<rect x="1616.7" y="901.9" width="2.0" height="6.8" rx="1.0" fill="#2424c0"/>
<rect x="1642.7" y="907.1" width="1.7" height="8.0" rx="0.9" fill="#1c1ca8"/>
<rect x="1661.0" y="1000.0" width="1.9" height="7.0" rx="1.0" fill="#2a2ad0"/>
<rect x="1621.1" y="912.4" width="2.1" height="16.6" rx="1.1" fill="#1c1ca8"/>
<rect x="1625.1" y="764.2" width="1.4" height="18.1" rx="0.7" fill="#2a2ad0"/>
<rect x="1663.9" y="936.0" width="1.8" height="2.7" rx="0.9" fill="#1c1ca8"/>
<rect x="1600.7" y="893.1" width="1.6" height="6.7" rx="0.8" fill="#10107a"/>
<rect x="1692.4" y="882.9" width="1.5" height="13.1" rx="0.7" fill="#2a2ad0"/>
<rect x="1680.3" y="916.2" width="1.6" height="17.6" rx="0.8" fill="#1c1ca8"/>
<rect x="1595.6" y="812.8" width="2.4" height="4.1" rx="1.2" fill="#2a2ad0"/>
<rect x="1593.5" y="797.7" width="2.5" height="4.6" rx="1.2" fill="#1c1ca8"/>
<rect x="1649.9" y="849.9" width="2.3" height="15.8" rx="1.1" fill="#1a1a90"/>
<rect x="1629.2" y="920.0" width="2.3" height="17.2" rx="1.2" fill="#1a1a90"/>
<rect x="1684.6" y="908.3" width="2.5" height="6.0" rx="1.3" fill="#1c1ca8"/>
<rect x="1568.7" y="773.1" width="1.4" height="12.6" rx="0.7" fill="#2424c0"/>
<rect x="1669.6" y="909.4" width="1.9" height="17.4" rx="0.9" fill="#1c1ca8"/>
<rect x="1656.5" y="781.1" width="2.3" height="7.3" rx="1.1" fill="#2a2ad0"/>
<rect x="1638.7" y="774.7" width="1.8" height="16.9" rx="0.9" fill="#2424c0"/>
<rect x="1604.0" y="964.5" width="1.5" height="11.5" rx="0.7" fill="#2424c0"/>
<rect x="1677.1" y="884.5" width="2.4" height="5.7" rx="1.2" fill="#1c1ca8"/>
<rect x="1685.6" y="862.4" width="1.4" height="9.4" rx="0.7" fill="#2a2ad0"/>
<rect x="1552.3" y="888.7" width="1.4" height="17.4" rx="0.7" fill="#1a1a90"/>
<rect x="1679.7" y="841.4" width="2.0" height="5.4" rx="1.0" fill="#1a1a90"/>
<rect x="1595.4" y="752.8" width="2.6" height="6.8" rx="1.3" fill="#1c1ca8"/>
<rect x="1630.9" y="769.4" width="2.0" height="3.3" rx="1.0" fill="#2424c0"/>
<rect x="1591.2" y="958.1" width="1.7" height="8.0" rx="0.8" fill="#10107a"/>
<rect x="1647.6" y="925.2" width="2.2" height="7.9" rx="1.1" fill="#2424c0"/>
<rect x="1687.6" y="889.3" width="2.3" height="6.2" rx="1.1" fill="#2a2ad0"/>
<rect x="1643.1" y="759.5" width="1.5" height="8.4" rx="0.7" fill="#2a2ad0"/>
<rect x="1653.7" y="821.2" width="2.4" height="15.2" rx="1.2" fill="#10107a"/>
<rect x="1682.0" y="891.7" width="1.3" height="4.8" rx="0.7" fill="#2a2ad0"/>
<rect x="1678.8" y="790.7" width="1.8" height="4.2" rx="0.9" fill="#10107a"/>
<rect x="1695.6" y="799.0" width="2.2" height="17.0" rx="1.1" fill="#1a1a90"/>
<rect x="1689.9" y="811.7" width="2.4" height="12.8" rx="1.2" fill="#1a1a90"/>
<rect x="1683.9" y="898.5" width="2.5" height="15.0" rx="1.3" fill="#1c1ca8"/>
<rect x="1672.5" y="779.0" width="1.8" height="4.7" rx="0.9" fill="#10107a"/>
<rect x="1636.4" y="868.0" width="1.6" height="13.5" rx="0.8" fill="#2424c0"/>
<rect x="1654.9" y="939.4" width="1.8" height="26.9" rx="0.9" fill="#1c1ca8"/>
<rect x="1621.8" y="768.6" width="1.5" height="8.4" rx="0.8" fill="#2424c0"/>
<rect x="1629.2" y="893.4" width="1.5" height="10.5" rx="0.8" fill="#10107a"/>
<rect x="1630.9" y="792.9" width="1.9" height="4.1" rx="0.9" fill="#1c1ca8"/>
<rect x="1687.4" y="960.4" width="2.2" height="15.5" rx="1.1" fill="#1a1a90"/>
<rect x="1627.9" y="847.6" width="1.9" height="4.1" rx="0.9" fill="#2a2ad0"/>
<rect x="1681.8" y="866.9" width="2.0" height="11.2" rx="1.0" fill="#2424c0"/>
<rect x="1634.7" y="771.3" width="1.3" height="12.5" rx="0.7" fill="#1a1a90"/>
<rect x="1610.7" y="942.6" width="2.3" height="13.2" rx="1.1" fill="#2a2ad0"/>
<rect x="1620.4" y="929.6" width="2.4" height="7.1" rx="1.2" fill="#10107a"/>
<rect x="1650.0" y="905.4" width="2.3" height="8.4" rx="1.2" fill="#10107a"/>
<rect x="1642.4" y="890.2" width="1.3" height="19.2" rx="0.7" fill="#1c1ca8"/>
<rect x="1637.7" y="833.9" width="1.7" height="11.0" rx="0.9" fill="#1a1a90"/>
<rect x="1578.4" y="801.4" width="2.1" height="5.4" rx="1.1" fill="#1c1ca8"/>
<rect x="1646.2" y="790.8" width="2.1" height="6.2" rx="1.1" fill="#2a2ad0"/>
<rect x="1620.3" y="764.4" width="1.9" height="11.0" rx="0.9" fill="#1c1ca8"/>
<rect x="1629.3" y="923.2" width="2.4" height="8.6" rx="1.2" fill="#10107a"/>
<rect x="1622.5" y="834.6" width="2.3" height="16.9" rx="1.1" fill="#1c1ca8"/>
<rect x="1639.7" y="996.6" width="1.6" height="20.9" rx="0.8" fill="#1a1a90"/>
<rect x="1681.7" y="914.1" width="2.2" height="11.6" rx="1.1" fill="#1a1a90"/>
<rect x="1621.7" y="797.3" width="1.8" height="7.2" rx="0.9" fill="#10107a"/>
<rect x="1617.5" y="760.3" width="2.5" height="11.5" rx="1.2" fill="#2a2ad0"/>
<rect x="1587.0" y="934.3" width="2.0" height="24.6" rx="1.0" fill="#10107a"/>
<rect x="1621.8" y="757.0" width="1.4" height="5.7" rx="0.7" fill="#1c1ca8"/>
<rect x="1620.9" y="806.4" width="1.3" height="6.3" rx="0.7" fill="#2a2ad0"/>
<rect x="1691.9" y="844.9" width="2.3" height="13.3" rx="1.1" fill="#2424c0"/>
<rect x="1676.5" y="908.6" width="1.9" height="21.8" rx="0.9" fill="#2a2ad0"/>
<rect x="1657.8" y="942.9" width="1.4" height="5.1" rx="0.7" fill="#2a2ad0"/>
<rect x="1670.1" y="792.7" width="2.1" height="8.4" rx="1.0" fill="#1a1a90"/>
<rect x="1614.1" y="925.3" width="2.5" height="14.3" rx="1.2" fill="#2424c0"/>
<rect x="1632.0" y="862.2" width="1.7" height="8.1" rx="0.9" fill="#10107a"/>
<rect x="1646.4" y="982.7" width="1.4" height="13.7" rx="0.7" fill="#1c1ca8"/>
<rect x="1620.2" y="882.9" width="2.4" height="9.3" rx="1.2" fill="#10107a"/>
<rect x="1554.3" y="863.5" width="2.0" height="10.0" rx="1.0" fill="#1c1ca8"/>
<rect x="1659.6" y="847.6" width="2.3" height="12.2" rx="1.2" fill="#1a1a90"/>
<rect x="1633.2" y="963.7" width="1.3" height="10.9" rx="0.7" fill="#1a1a90"/>
<rect x="1691.1" y="932.8" width="1.9" height="14.5" rx="0.9" fill="#1a1a90"/>
<rect x="1668.4" y="929.3" width="2.0" height="23.5" rx="1.0" fill="#1a1a90"/>
<rect x="1672.6" y="827.8" width="2.0" height="8.9" rx="1.0" fill="#1c1ca8"/>
<rect x="1599.6" y="987.5" width="1.7" height="9.5" rx="0.9" fill="#1c1ca8"/>
<rect x="1650.3" y="930.4" width="1.8" height="8.6" rx="0.9" fill="#2424c0"/>
<rect x="1630.9" y="867.7" width="1.8" height="17.8" rx="0.9" fill="#2a2ad0"/>
<rect x="1672.5" y="790.0" width="1.8" height="9.4" rx="0.9" fill="#1c1ca8"/>
<rect x="1679.1" y="834.4" width="1.9" height="15.5" rx="0.9" fill="#1a1a90"/>
<rect x="1643.7" y="990.9" width="1.3" height="4.3" rx="0.7" fill="#1c1ca8"/>
<rect x="1571.8" y="860.9" width="2.3" height="3.9" rx="1.2" fill="#1a1a90"/>
<rect x="1592.0" y="841.4" width="1.6" height="12.6" rx="0.8" fill="#2424c0"/>
<rect x="1643.7" y="882.2" width="2.1" height="21.4" rx="1.0" fill="#2424c0"/>
<rect x="1567.3" y="804.1" width="2.1" height="26.8" rx="1.1" fill="#2424c0"/>
<rect x="1652.8" y="884.8" width="1.4" height="13.9" rx="0.7" fill="#10107a"/>
<rect x="1631.4" y="929.0" width="1.4" height="22.3" rx="0.7" fill="#2424c0"/>
<rect x="1649.1" y="810.1" width="2.2" height="7.9" rx="1.1" fill="#1a1a90"/>
<rect x="1625.6" y="896.4" width="1.7" height="3.7" rx="0.8" fill="#10107a"/>
<rect x="1648.1" y="871.0" width="2.1" height="9.5" rx="1.1" fill="#2a2ad0"/>
<rect x="1627.2" y="828.8" width="1.6" height="4.6" rx="0.8" fill="#2a2ad0"/>
<rect x="1630.9" y="810.0" width="2.0" height="25.7" rx="1.0" fill="#2424c0"/>
<rect x="1673.7" y="891.3" width="2.5" height="12.5" rx="1.2" fill="#2a2ad0"/>
<rect x="1631.9" y="791.8" width="1.5" height="7.6" rx="0.8" fill="#1a1a90"/>
<rect x="1652.7" y="956.2" width="1.4" height="3.8" rx="0.7" fill="#2a2ad0"/>
<rect x="1590.4" y="804.9" width="2.2" height="17.8" rx="1.1" fill="#10107a"/>
<rect x="1672.1" y="783.5" width="1.7" height="4.6" rx="0.9" fill="#2424c0"/>
<rect x="1645.8" y="979.2" width="1.7" height="13.1" rx="0.8" fill="#2424c0"/>
<rect x="1582.3" y="852.0" width="1.8" height="14.5" rx="0.9" fill="#2424c0"/>
<rect x="1656.6" y="831.6" width="1.8" height="25.7" rx="0.9" fill="#10107a"/>
<rect x="1658.9" y="924.2" width="1.6" height="16.9" rx="0.8" fill="#2a2ad0"/>
<rect x="1679.8" y="807.3" width="1.6" height="14.0" rx="0.8" fill="#2424c0"/>
<rect x="1662.3" y="764.4" width="2.2" height="20.0" rx="1.1" fill="#1c1ca8"/>
<rect x="1614.7" y="940.5" width="2.2" height="10.2" rx="1.1" fill="#1c1ca8"/>
<rect x="1617.4" y="953.9" width="1.5" height="9.5" rx="0.8" fill="#2a2ad0"/>
<rect x="1656.4" y="952.7" width="1.5" height="12.7" rx="0.8" fill="#10107a"/>
<rect x="1685.5" y="902.5" width="1.5" height="16.2" rx="0.8" fill="#1c1ca8"/>
<rect x="1624.3" y="776.9" width="1.3" height="5.6" rx="0.7" fill="#1c1ca8"/>
<rect x="1659.2" y="811.3" width="2.5" height="3.1" rx="1.3" fill="#2424c0"/>
<rect x="1601.6" y="914.3" width="1.9" height="14.7" rx="0.9" fill="#2424c0"/>
<rect x="1580.5" y="864.8" width="2.3" height="26.2" rx="1.1" fill="#1a1a90"/>
<rect x="1674.3" y="791.0" width="2.5" height="7.3" rx="1.3" fill="#2424c0"/>
<rect x="1598.7" y="990.1" width="1.7" height="6.9" rx="0.8" fill="#2a2ad0"/>
<rect x="1675.2" y="939.7" width="2.2" height="3.7" rx="1.1" fill="#1a1a90"/>
<rect x="1642.8" y="803.1" width="2.5" height="6.6" rx="1.3" fill="#1c1ca8"/>
<rect x="1650.8" y="919.5" width="2.4" height="9.2" rx="1.2" fill="#1a1a90"/>
<rect x="1694.2" y="982.9" width="2.6" height="20.8" rx="1.3" fill="#2a2ad0"/>
<rect x="1578.4" y="855.7" width="2.4" height="4.8" rx="1.2" fill="#2a2ad0"/>
<rect x="1616.8" y="753.3" width="2.1" height="5.5" rx="1.1" fill="#2a2ad0"/>
<rect x="1682.7" y="954.9" width="2.6" height="8.8" rx="1.3" fill="#2424c0"/>
<rect x="1639.5" y="793.1" width="1.4" height="13.6" rx="0.7" fill="#10107a"/>
<rect x="1615.7" y="774.1" width="2.1" height="14.5" rx="1.0" fill="#1a1a90"/>
<rect x="1619.4" y="960.8" width="2.0" height="4.5" rx="1.0" fill="#1c1ca8"/>
<rect x="1673.9" y="910.1" width="2.4" height="13.7" rx="1.2" fill="#1c1ca8"/>
<rect x="1638.7" y="881.9" width="1.4" height="14.2" rx="0.7" fill="#10107a"/>
<rect x="1650.4" y="924.5" width="2.6" height="5.7" rx="1.3" fill="#10107a"/>
<rect x="1622.5" y="793.7" width="1.9" height="14.0" rx="0.9" fill="#2424c0"/>
<rect x="1602.8" y="819.1" width="1.5" height="2.7" rx="0.8" fill="#1a1a90"/>
<rect x="1629.7" y="917.1" width="2.5" height="8.2" rx="1.2" fill="#2a2ad0"/>
<rect x="1591.3" y="756.7" width="2.4" height="24.0" rx="1.2" fill="#1a1a90"/>
<rect x="1625.6" y="898.9" width="2.1" height="7.9" rx="1.1" fill="#1c1ca8"/>
<rect x="1638.4" y="979.2" width="2.6" height="17.6" rx="1.3" fill="#1a1a90"/>
<rect x="1665.6" y="768.7" width="2.1" height="17.5" rx="1.1" fill="#2424c0"/>
<rect x="1646.2" y="940.5" width="2.3" height="5.9" rx="1.2" fill="#2424c0"/>
<rect x="1659.7" y="824.3" width="2.1" height="8.6" rx="1.0" fill="#1c1ca8"/>
<rect x="1617.2" y="764.7" width="2.2" height="16.3" rx="1.1" fill="#2a2ad0"/>
<rect x="1652.6" y="777.6" width="2.3" height="26.1" rx="1.2" fill="#1a1a90"/>
<rect x="1636.5" y="768.2" width="2.4" height="4.4" rx="1.2" fill="#1c1ca8"/>
<rect x="1623.8" y="918.7" width="2.2" height="17.2" rx="1.1" fill="#1a1a90"/>
<rect x="1614.2" y="963.2" width="2.1" height="4.5" rx="1.1" fill="#10107a"/>
<rect x="1653.5" y="779.6" width="2.4" height="17.3" rx="1.2" fill="#10107a"/>
<rect x="1662.6" y="873.4" width="2.5" height="16.0" rx="1.2" fill="#2424c0"/>
<rect x="1650.2" y="980.6" width="1.5" height="8.4" rx="0.7" fill="#1c1ca8"/>
<rect x="1644.5" y="807.1" width="2.5" height="17.2" rx="1.3" fill="#2424c0"/>
<rect x="1589.4" y="985.4" width="2.5" height="6.0" rx="1.2" fill="#2424c0"/>
<rect x="1635.0" y="930.5" width="1.9" height="15.1" rx="1.0" fill="#10107a"/>
<rect x="1608.5" y="809.9" width="1.5" height="4.3" rx="0.8" fill="#2424c0"/>
<rect x="1670.2" y="841.7" width="2.1" height="6.9" rx="1.1" fill="#1a1a90"/>
<rect x="1620.8" y="755.1" width="2.2" height="11.2" rx="1.1" fill="#10107a"/>
<rect x="1624.5" y="767.3" width="2.3" height="14.1" rx="1.1" fill="#2424c0"/>
<rect x="1668.6" y="998.3" width="1.7" height="6.5" rx="0.9" fill="#1a1a90"/>
<rect x="1669.9" y="804.5" width="2.4" height="7.9" rx="1.2" fill="#1c1ca8"/>
<rect x="1616.6" y="795.5" width="2.1" height="5.2" rx="1.1" fill="#10107a"/>
<rect x="1593.4" y="806.2" width="2.4" height="16.0" rx="1.2" fill="#2a2ad0"/>
<rect x="1588.7" y="759.5" width="2.3" height="5.0" rx="1.1" fill="#1a1a90"/>
<rect x="1659.7" y="818.5" width="1.5" height="7.5" rx="0.7" fill="#2424c0"/>
<rect x="1684.1" y="923.3" width="2.0" height="11.0" rx="1.0" fill="#2424c0"/>
<rect x="1659.9" y="757.8" width="2.5" height="8.6" rx="1.3" fill="#1c1ca8"/>
<rect x="1643.0" y="833.8" width="2.3" height="17.5" rx="1.1" fill="#1c1ca8"/>
<rect x="1656.3" y="969.3" width="1.4" height="8.4" rx="0.7" fill="#2424c0"/>
<rect x="1668.4" y="816.1" width="1.7" height="6.1" rx="0.9" fill="#1a1a90"/>
<rect x="1635.0" y="770.0" width="1.9" height="2.1" rx="1.0" fill="#2424c0"/>
<rect x="1598.2" y="759.7" width="1.7" height="6.9" rx="0.9" fill="#10107a"/>
<rect x="1623.5" y="991.9" width="2.1" height="6.2" rx="1.0" fill="#2a2ad0"/>
<rect x="1620.0" y="805.4" width="1.4" height="12.2" rx="0.7" fill="#1c1ca8"/>
<rect x="1609.6" y="835.3" width="1.5" height="22.9" rx="0.7" fill="#2424c0"/>
<rect x="1634.4" y="762.6" width="1.5" height="7.9" rx="0.7" fill="#10107a"/>
<rect x="1576.4" y="825.1" width="1.8" height="9.1" rx="0.9" fill="#2424c0"/>
<rect x="1679.8" y="828.6" width="2.4" height="8.2" rx="1.2" fill="#2424c0"/>
<rect x="1687.9" y="959.2" width="1.5" height="3.7" rx="0.7" fill="#10107a"/>
<rect x="1618.7" y="777.9" width="1.7" height="8.1" rx="0.9" fill="#10107a"/>
<rect x="1642.9" y="885.4" width="1.5" height="9.7" rx="0.7" fill="#10107a"/>
<rect x="1623.1" y="865.6" width="2.0" height="4.0" rx="1.0" fill="#2424c0"/>
<rect x="1635.2" y="942.2" width="1.4" height="7.1" rx="0.7" fill="#1c1ca8"/>
<rect x="1620.8" y="1078.0" width="1.7" height="4.7" rx="0.9" fill="#1a1a90"/>
<rect x="1619.0" y="1068.0" width="2.4" height="17.5" rx="1.2" fill="#1a1a90"/>
<rect x="1615.2" y="1161.8" width="1.5" height="3.2" rx="0.8" fill="#2424c0"/>
<rect x="1671.2" y="1104.9" width="1.6" height="17.0" rx="0.8" fill="#2424c0"/>
<rect x="1643.0" y="1139.5" width="2.5" height="16.5" rx="1.2" fill="#2424c0"/>
<rect x="1583.6" y="1065.5" width="1.8" height="7.7" rx="0.9" fill="#2a2ad0"/>
<rect x="1618.6" y="1004.0" width="1.6" height="9.6" rx="0.8" fill="#2424c0"/>
<rect x="1684.5" y="1005.1" width="1.5" height="7.7" rx="0.8" fill="#1a1a90"/>
<rect x="1626.6" y="1085.5" width="1.4" height="15.0" rx="0.7" fill="#1c1ca8"/>
<rect x="1605.6" y="1106.9" width="1.7" height="24.3" rx="0.9" fill="#10107a"/>
<rect x="1626.2" y="1076.5" width="1.8" height="17.8" rx="0.9" fill="#1a1a90"/>
<rect x="1693.5" y="1111.0" width="2.2" height="7.7" rx="1.1" fill="#2424c0"/>
<rect x="1672.6" y="1084.7" width="2.4" height="17.6" rx="1.2" fill="#10107a"/>
<rect x="1644.3" y="1062.5" width="1.6" height="10.6" rx="0.8" fill="#2424c0"/>
<rect x="1589.9" y="1091.7" width="2.3" height="6.8" rx="1.2" fill="#2a2ad0"/>
<rect x="1611.9" y="1061.4" width="2.5" height="7.1" rx="1.2" fill="#1c1ca8"/>
<rect x="1627.7" y="1063.4" width="1.4" height="8.1" rx="0.7" fill="#2a2ad0"/>
<rect x="1626.3" y="1024.2" width="2.6" height="24.4" rx="1.3" fill="#2a2ad0"/>
<rect x="1615.2" y="1105.4" width="1.9" height="4.7" rx="1.0" fill="#2424c0"/>
<rect x="1636.8" y="1044.3" width="2.2" height="7.3" rx="1.1" fill="#10107a"/>
<rect x="1621.2" y="1118.6" width="2.5" height="5.7" rx="1.3" fill="#10107a"/>
<rect x="1655.6" y="1079.8" width="1.4" height="12.0" rx="0.7" fill="#10107a"/>
<rect x="1669.2" y="1092.0" width="1.9" height="5.1" rx="1.0" fill="#2424c0"/>
<rect x="1640.7" y="1104.7" width="2.2" height="15.9" rx="1.1" fill="#1a1a90"/>
<rect x="1594.8" y="1063.7" width="1.7" height="4.7" rx="0.9" fill="#1a1a90"/>
<rect x="1646.9" y="1084.3" width="2.1" height="25.4" rx="1.1" fill="#1a1a90"/>
<rect x="1675.5" y="1034.4" width="2.2" height="23.0" rx="1.1" fill="#1c1ca8"/>
<rect x="1678.1" y="1010.6" width="1.9" height="13.3" rx="1.0" fill="#1a1a90"/>
<rect x="1657.8" y="1012.2" width="2.2" height="9.8" rx="1.1" fill="#10107a"/>
<rect x="1614.6" y="1034.1" width="2.4" height="13.7" rx="1.2" fill="#10107a"/>
<rect x="1665.0" y="1004.4" width="1.3" height="17.5" rx="0.7" fill="#2424c0"/>
<rect x="1623.2" y="1094.4" width="2.6" height="23.6" rx="1.3" fill="#2424c0"/>
<rect x="1626.7" y="1132.3" width="1.7" height="16.2" rx="0.9" fill="#2424c0"/>
<rect x="1641.6" y="1162.9" width="2.2" height="7.3" rx="1.1" fill="#1c1ca8"/>
<rect x="1667.7" y="1054.6" width="2.0" height="5.5" rx="1.0" fill="#2424c0"/>
<rect x="1658.8" y="1154.7" width="1.4" height="12.9" rx="0.7" fill="#10107a"/>
<rect x="1596.3" y="1116.1" width="1.5" height="22.0" rx="0.8" fill="#1c1ca8"/>
<rect x="1565.0" y="1041.3" width="2.4" height="8.3" rx="1.2" fill="#2424c0"/>
<rect x="1644.4" y="1090.7" width="2.5" height="3.7" rx="1.2" fill="#2424c0"/>
<rect x="1645.4" y="1118.8" width="1.4" height="2.9" rx="0.7" fill="#1a1a90"/>
<rect x="1642.5" y="1104.1" width="1.7" height="2.2" rx="0.9" fill="#1a1a90"/>
<rect x="1630.9" y="1152.7" width="1.4" height="8.4" rx="0.7" fill="#2a2ad0"/>
<rect x="1665.8" y="1080.0" width="1.4" height="9.5" rx="0.7" fill="#10107a"/>
<rect x="1651.9" y="1127.2" width="1.6" height="5.2" rx="0.8" fill="#10107a"/>
<rect x="1631.6" y="1054.6" width="1.9" height="8.6" rx="1.0" fill="#2424c0"/>
<rect x="1611.2" y="1035.9" width="2.0" height="11.8" rx="1.0" fill="#10107a"/>
<rect x="1599.2" y="1047.3" width="2.5" height="4.2" rx="1.3" fill="#1c1ca8"/>
<rect x="1646.2" y="1155.6" width="2.6" height="5.9" rx="1.3" fill="#1c1ca8"/>
<rect x="1634.7" y="1113.5" width="2.4" height="9.8" rx="1.2" fill="#2424c0"/>
<rect x="1614.4" y="1095.5" width="2.4" height="7.1" rx="1.2" fill="#1c1ca8"/>
<rect x="1651.0" y="1110.7" width="1.4" height="7.9" rx="0.7" fill="#10107a"/>
<rect x="1604.8" y="1159.3" width="2.2" height="9.7" rx="1.1" fill="#10107a"/>
<rect x="1663.8" y="1023.9" width="2.1" height="16.1" rx="1.1" fill="#10107a"/>
<rect x="1595.5" y="1089.2" width="2.2" height="25.5" rx="1.1" fill="#10107a"/>
<rect x="1595.2" y="1011.5" width="2.5" height="4.9" rx="1.2" fill="#2424c0"/>
<rect x="1631.7" y="1032.3" width="1.7" height="13.1" rx="0.9" fill="#1c1ca8"/>
<rect x="1591.7" y="1002.6" width="1.3" height="3.6" rx="0.7" fill="#2a2ad0"/>
<rect x="1646.2" y="1045.4" width="2.3" height="8.2" rx="1.1" fill="#10107a"/>
<rect x="1620.5" y="1127.5" width="1.5" height="16.3" rx="0.7" fill="#10107a"/>
<rect x="1690.5" y="1019.4" width="1.4" height="10.7" rx="0.7" fill="#1c1ca8"/>
<rect x="1617.9" y="1000.7" width="2.3" height="20.7" rx="1.2" fill="#1a1a90"/>
<rect x="1633.6" y="1105.2" width="1.8" height="15.3" rx="0.9" fill="#2424c0"/>
<rect x="1678.4" y="1095.4" width="2.5" height="13.6" rx="1.2" fill="#2424c0"/>
<rect x="1640.4" y="1029.0" width="1.9" height="26.7" rx="1.0" fill="#1c1ca8"/>
<rect x="1634.2" y="1022.8" width="1.3" height="21.2" rx="0.7" fill="#2a2ad0"/>
<rect x="1636.5" y="1097.7" width="2.0" height="7.2" rx="1.0" fill="#2424c0"/>
<rect x="1608.3" y="1100.9" width="2.4" height="12.1" rx="1.2" fill="#1c1ca8"/>
<rect x="1611.7" y="1047.9" width="1.5" height="7.7" rx="0.8" fill="#1a1a90"/>
<rect x="1576.9" y="1017.0" width="1.6" height="12.0" rx="0.8" fill="#2a2ad0"/>
<rect x="1631.0" y="1138.3" width="2.5" height="16.4" rx="1.3" fill="#2424c0"/>
<rect x="1610.0" y="1133.6" width="2.3" height="9.2" rx="1.1" fill="#1a1a90"/>
<rect x="1649.5" y="1099.9" width="2.4" height="6.6" rx="1.2" fill="#2a2ad0"/>
<rect x="1593.2" y="1040.1" width="2.2" height="26.5" rx="1.1" fill="#1c1ca8"/>
<rect x="1664.5" y="1089.9" width="2.2" height="5.6" rx="1.1" fill="#10107a"/>
<rect x="1661.7" y="1009.9" width="1.8" height="13.6" rx="0.9" fill="#1a1a90"/>
<rect x="1615.8" y="1048.9" width="2.6" height="8.4" rx="1.3" fill="#1c1ca8"/>
<rect x="1594.7" y="1143.4" width="2.0" height="4.9" rx="1.0" fill="#1a1a90"/>
<rect x="1602.8" y="1109.2" width="2.0" height="12.4" rx="1.0" fill="#2a2ad0"/>
<rect x="1635.6" y="1151.5" width="2.0" height="24.4" rx="1.0" fill="#2a2ad0"/>
<rect x="1598.4" y="1083.6" width="1.7" height="8.3" rx="0.9" fill="#10107a"/>
<rect x="1638.6" y="1055.1" width="1.5" height="2.9" rx="0.7" fill="#2424c0"/>
<rect x="1578.6" y="1143.9" width="2.1" height="13.7" rx="1.1" fill="#10107a"/>
<rect x="1563.5" y="1079.3" width="2.2" height="14.3" rx="1.1" fill="#2424c0"/>
<rect x="1659.0" y="1115.1" width="1.5" height="20.6" rx="0.7" fill="#1c1ca8"/>
<rect x="1653.4" y="1103.0" width="2.1" height="16.1" rx="1.1" fill="#1a1a90"/>
<rect x="1606.2" y="1043.0" width="1.3" height="10.6" rx="0.7" fill="#1c1ca8"/>
<rect x="1607.2" y="1147.3" width="2.1" height="9.6" rx="1.1" fill="#2a2ad0"/>
<rect x="1655.8" y="1151.0" width="1.4" height="14.9" rx="0.7" fill="#1c1ca8"/>
<rect x="1669.3" y="1078.5" width="2.3" height="19.9" rx="1.2" fill="#2424c0"/>
<rect x="1631.9" y="1129.8" width="2.2" height="22.0" rx="1.1" fill="#2424c0"/>
<rect x="1618.5" y="1077.6" width="2.3" height="24.6" rx="1.2" fill="#1c1ca8"/>
<rect x="1587.1" y="1026.6" width="2.3" height="5.1" rx="1.1" fill="#10107a"/>
<rect x="1620.6" y="1031.5" width="2.2" height="4.5" rx="1.1" fill="#1c1ca8"/>
<rect x="1656.8" y="1159.4" width="1.5" height="6.6" rx="0.7" fill="#2424c0"/>
<rect x="1628.0" y="1147.4" width="1.6" height="7.3" rx="0.8" fill="#1c1ca8"/>
<rect x="1644.5" y="1131.5" width="1.6" height="17.7" rx="0.8" fill="#1a1a90"/>
<rect x="1586.5" y="1142.7" width="2.2" height="7.2" rx="1.1" fill="#1a1a90"/>
<rect x="1603.3" y="1163.0" width="1.4" height="11.2" rx="0.7" fill="#10107a"/>
<rect x="1630.8" y="1119.0" width="1.9" height="4.3" rx="0.9" fill="#2424c0"/>
<rect x="1627.5" y="1111.8" width="2.3" height="9.7" rx="1.1" fill="#10107a"/>
<rect x="1629.6" y="1009.7" width="1.3" height="10.3" rx="0.7" fill="#1c1ca8"/>
<rect x="1636.3" y="1095.1" width="1.7" height="5.9" rx="0.8" fill="#1c1ca8"/>
<rect x="1682.6" y="1073.1" width="1.9" height="7.7" rx="0.9" fill="#1c1ca8"/>
<rect x="1681.6" y="1070.9" width="1.7" height="16.5" rx="0.8" fill="#10107a"/>
<rect x="1643.3" y="1000.9" width="1.5" height="16.8" rx="0.7" fill="#10107a"/>
<rect x="1602.8" y="1089.8" width="2.0" height="11.3" rx="1.0" fill="#2a2ad0"/>
<rect x="1619.8" y="1017.9" width="1.7" height="12.4" rx="0.9" fill="#2424c0"/>
<rect x="1581.2" y="1116.0" width="2.5" height="17.9" rx="1.3" fill="#1a1a90"/>
<rect x="1652.8" y="1079.3" width="1.9" height="5.4" rx="0.9" fill="#2a2ad0"/>
<rect x="1596.6" y="947.8" width="1.5" height="6.5" rx="0.7" fill="#2a2ad0"/>
<rect x="1504.6" y="994.0" width="1.4" height="4.8" rx="0.7" fill="#1c1ca8"/>
<rect x="1577.8" y="1052.9" width="1.6" height="3.9" rx="0.8" fill="#10107a"/>
<rect x="1507.2" y="918.8" width="2.6" height="5.7" rx="1.3" fill="#1a1a90"/>
<rect x="1580.3" y="945.4" width="1.9" height="9.0" rx="0.9" fill="#2a2ad0"/>
<rect x="1489.0" y="844.2" width="2.1" height="8.4" rx="1.1" fill="#2a2ad0"/>
<rect x="1496.3" y="1065.6" width="2.4" height="8.6" rx="1.2" fill="#2424c0"/>
<rect x="1563.8" y="1055.8" width="2.1" height="2.9" rx="1.0" fill="#1c1ca8"/>
<rect x="1588.2" y="786.3" width="1.4" height="14.6" rx="0.7" fill="#1a1a90"/>
<rect x="1539.9" y="946.7" width="2.0" height="5.8" rx="1.0" fill="#2a2ad0"/>
<rect x="1503.2" y="837.8" width="2.5" height="3.5" rx="1.3" fill="#10107a"/>
<rect x="1527.4" y="887.9" width="1.5" height="9.3" rx="0.8" fill="#2a2ad0"/>
<rect x="1500.2" y="971.5" width="2.1" height="5.1" rx="1.1" fill="#2424c0"/>
<rect x="1501.0" y="793.4" width="1.6" height="4.5" rx="0.8" fill="#2424c0"/>
<rect x="1496.9" y="1012.1" width="1.6" height="8.7" rx="0.8" fill="#1c1ca8"/>
<rect x="1497.9" y="1055.7" width="2.5" height="7.1" rx="1.3" fill="#2424c0"/>
<rect x="1582.8" y="1096.0" width="2.1" height="5.2" rx="1.1" fill="#2424c0"/>
<rect x="1572.2" y="1030.0" width="1.7" height="9.8" rx="0.8" fill="#1a1a90"/>
<rect x="1483.9" y="972.6" width="2.3" height="7.3" rx="1.2" fill="#1a1a90"/>
<rect x="1537.7" y="1098.0" width="1.4" height="11.0" rx="0.7" fill="#2424c0"/>
<rect x="1552.6" y="812.0" width="2.4" height="6.5" rx="1.2" fill="#10107a"/>
<rect x="1482.9" y="1098.2" width="1.5" height="4.8" rx="0.8" fill="#1c1ca8"/>
<rect x="1586.5" y="1027.1" width="1.7" height="6.9" rx="0.9" fill="#2424c0"/>
<rect x="1574.7" y="1073.4" width="1.8" height="3.6" rx="0.9" fill="#2a2ad0"/>
<rect x="1591.3" y="982.5" width="2.5" height="3.9" rx="1.3" fill="#2424c0"/>
<rect x="1488.7" y="1094.6" width="1.5" height="3.2" rx="0.8" fill="#1c1ca8"/>
<rect x="1579.3" y="1070.8" width="1.9" height="3.7" rx="1.0" fill="#2a2ad0"/>
<rect x="1559.8" y="1041.0" width="2.2" height="10.8" rx="1.1" fill="#10107a"/>
<rect x="1518.4" y="928.0" width="1.5" height="6.3" rx="0.7" fill="#2424c0"/>
<rect x="1554.6" y="973.6" width="1.6" height="4.8" rx="0.8" fill="#2424c0"/>
<rect x="1494.3" y="807.3" width="2.0" height="8.5" rx="1.0" fill="#2a2ad0"/>
<rect x="1574.1" y="1002.9" width="1.6" height="14.8" rx="0.8" fill="#1c1ca8"/>
<rect x="1548.1" y="1053.1" width="1.4" height="5.9" rx="0.7" fill="#10107a"/>
<rect x="1498.2" y="1019.1" width="2.4" height="11.9" rx="1.2" fill="#10107a"/>
<rect x="1598.6" y="993.4" width="1.5" height="6.7" rx="0.7" fill="#2424c0"/>
<rect x="1514.1" y="824.9" width="2.0" height="7.9" rx="1.0" fill="#1a1a90"/>
<rect x="1430.8" y="742.0" width="2.0" height="20.9" rx="1.0" fill="#3434b8"/>
<rect x="1430.6" y="759.0" width="1.7" height="13.3" rx="0.9" fill="#3434b8"/>
<rect x="1432.3" y="774.9" width="2.2" height="8.4" rx="1.1" fill="#2a2aa8"/>
<rect x="1432.2" y="787.8" width="2.2" height="8.0" rx="1.1" fill="#3434b8"/>
<rect x="1432.7" y="794.2" width="1.8" height="6.9" rx="0.9" fill="#1c1c8c"/>
<rect x="1432.4" y="800.5" width="2.7" height="21.1" rx="1.3" fill="#1c1c8c"/>
<rect x="1433.2" y="822.3" width="1.8" height="18.7" rx="0.9" fill="#1c1c8c"/>
<rect x="1432.7" y="837.7" width="1.7" height="18.5" rx="0.9" fill="#2a2aa8"/>
<rect x="1434.9" y="854.7" width="2.8" height="13.9" rx="1.4" fill="#1c1c8c"/>
<rect x="1438.3" y="871.9" width="1.9" height="21.7" rx="0.9" fill="#3434b8"/>
<rect x="1438.9" y="892.4" width="2.1" height="19.6" rx="1.0" fill="#1c1c8c"/>
<rect x="1438.6" y="916.5" width="1.7" height="16.1" rx="0.8" fill="#2a2aa8"/>
<rect x="1439.8" y="929.2" width="3.1" height="12.0" rx="1.6" fill="#1c1c8c"/>
<rect x="1438.6" y="941.5" width="2.6" height="17.6" rx="1.3" fill="#1c1c8c"/>
<rect x="1439.7" y="962.1" width="1.8" height="20.8" rx="0.9" fill="#1c1c8c"/>
<rect x="1437.2" y="982.8" width="2.3" height="20.1" rx="1.2" fill="#2a2aa8"/>
<rect x="1434.8" y="1004.7" width="2.1" height="7.3" rx="1.1" fill="#1c1c8c"/>
<rect x="1435.8" y="1016.2" width="1.7" height="13.8" rx="0.9" fill="#1c1c8c"/>
<rect x="1431.4" y="1031.9" width="2.6" height="20.2" rx="1.3" fill="#2a2aa8"/>
<rect x="1430.0" y="1055.9" width="3.1" height="10.8" rx="1.6" fill="#1c1c8c"/>
<rect x="1432.5" y="1066.7" width="2.1" height="15.1" rx="1.1" fill="#3434b8"/>
<rect x="1431.1" y="1079.2" width="2.6" height="8.5" rx="1.3" fill="#3434b8"/>
<rect x="1432.9" y="1087.8" width="1.8" height="12.0" rx="0.9" fill="#3434b8"/>
<rect x="1431.6" y="1101.9" width="3.1" height="8.6" rx="1.5" fill="#1c1c8c"/>
<rect x="1432.8" y="1111.1" width="1.6" height="20.0" rx="0.8" fill="#2a2aa8"/>
<rect x="1431.7" y="1127.4" width="1.6" height="9.4" rx="0.8" fill="#2a2aa8"/>
<rect x="1436.1" y="1141.1" width="2.6" height="20.0" rx="1.3" fill="#3434b8"/>
<rect x="1435.0" y="1160.8" width="2.2" height="7.7" rx="1.1" fill="#3434b8"/>
<rect x="1442.7" y="742.0" width="2.5" height="14.0" rx="1.2" fill="#1c1c8c"/>
<rect x="1443.8" y="760.8" width="2.8" height="16.8" rx="1.4" fill="#2a2aa8"/>
<rect x="1439.4" y="779.0" width="3.1" height="8.7" rx="1.5" fill="#1c1c8c"/>
<rect x="1438.4" y="786.6" width="2.8" height="17.5" rx="1.4" fill="#2a2aa8"/>
<rect x="1439.5" y="805.2" width="3.1" height="11.7" rx="1.6" fill="#3434b8"/>
<rect x="1438.3" y="816.9" width="1.9" height="18.9" rx="0.9" fill="#1c1c8c"/>
<rect x="1435.2" y="840.4" width="3.1" height="10.6" rx="1.6" fill="#2a2aa8"/>
<rect x="1435.5" y="853.4" width="2.8" height="9.3" rx="1.4" fill="#2a2aa8"/>
<rect x="1433.3" y="866.1" width="2.5" height="16.1" rx="1.3" fill="#1c1c8c"/>
<rect x="1436.1" y="879.0" width="2.4" height="16.1" rx="1.2" fill="#2a2aa8"/>
<rect x="1434.7" y="894.6" width="2.5" height="17.3" rx="1.3" fill="#1c1c8c"/>
<rect x="1436.2" y="911.9" width="1.8" height="17.0" rx="0.9" fill="#1c1c8c"/>
<rect x="1436.8" y="930.6" width="2.4" height="16.1" rx="1.2" fill="#3434b8"/>
<rect x="1437.9" y="948.5" width="3.2" height="10.8" rx="1.6" fill="#3434b8"/>
<rect x="1442.1" y="961.8" width="3.2" height="16.4" rx="1.6" fill="#1c1c8c"/>
<rect x="1440.3" y="974.3" width="1.9" height="11.5" rx="0.9" fill="#1c1c8c"/>
<rect x="1440.8" y="984.2" width="2.2" height="16.5" rx="1.1" fill="#1c1c8c"/>
<rect x="1444.1" y="997.0" width="2.2" height="17.1" rx="1.1" fill="#3434b8"/>
<rect x="1442.4" y="1017.9" width="2.1" height="11.5" rx="1.0" fill="#3434b8"/>
<rect x="1444.3" y="1032.4" width="2.8" height="7.0" rx="1.4" fill="#1c1c8c"/>
<rect x="1444.2" y="1035.5" width="2.6" height="13.4" rx="1.3" fill="#2a2aa8"/>
<rect x="1443.1" y="1046.2" width="2.9" height="21.8" rx="1.5" fill="#1c1c8c"/>
<rect x="1441.1" y="1065.9" width="2.2" height="20.5" rx="1.1" fill="#3434b8"/>
<rect x="1438.3" y="1087.7" width="3.0" height="16.2" rx="1.5" fill="#1c1c8c"/>
<rect x="1437.9" y="1107.1" width="2.7" height="9.3" rx="1.4" fill="#3434b8"/>
<rect x="1437.0" y="1120.2" width="2.3" height="18.7" rx="1.1" fill="#2a2aa8"/>
<rect x="1437.1" y="1135.3" width="2.6" height="17.4" rx="1.3" fill="#1c1c8c"/>
<rect x="1433.7" y="1153.4" width="2.8" height="15.1" rx="1.4" fill="#2a2aa8"/>
<rect x="1437.5" y="742.0" width="2.0" height="19.7" rx="1.0" fill="#2a2aa8"/>
<rect x="1440.8" y="761.4" width="1.7" height="14.3" rx="0.9" fill="#3434b8"/>
<rect x="1440.2" y="779.1" width="2.3" height="16.8" rx="1.2" fill="#3434b8"/>
<rect x="1441.2" y="800.0" width="1.9" height="17.1" rx="1.0" fill="#1c1c8c"/>
<rect x="1445.4" y="813.7" width="1.6" height="17.6" rx="0.8" fill="#2a2aa8"/>
<rect x="1445.0" y="832.5" width="2.1" height="19.3" rx="1.0" fill="#1c1c8c"/>
<rect x="1447.8" y="855.9" width="2.7" height="19.0" rx="1.3" fill="#2a2aa8"/>
<rect x="1446.9" y="871.6" width="2.7" height="7.0" rx="1.4" fill="#1c1c8c"/>
<rect x="1447.6" y="879.4" width="2.1" height="7.0" rx="1.0" fill="#1c1c8c"/>
<rect x="1446.4" y="889.5" width="1.8" height="17.7" rx="0.9" fill="#2a2aa8"/>
<rect x="1445.3" y="910.5" width="3.1" height="20.1" rx="1.6" fill="#2a2aa8"/>
<rect x="1446.1" y="926.7" width="2.5" height="8.5" rx="1.2" fill="#2a2aa8"/>
<rect x="1444.1" y="932.7" width="2.9" height="6.9" rx="1.4" fill="#1c1c8c"/>
<rect x="1444.0" y="938.2" width="1.6" height="20.2" rx="0.8" fill="#1c1c8c"/>
<rect x="1441.9" y="962.1" width="2.1" height="13.1" rx="1.0" fill="#2a2aa8"/>
<rect x="1441.3" y="977.7" width="1.5" height="21.4" rx="0.8" fill="#3434b8"/>
<rect x="1437.7" y="995.8" width="1.6" height="18.5" rx="0.8" fill="#3434b8"/>
<rect x="1439.7" y="1017.7" width="2.2" height="20.2" rx="1.1" fill="#3434b8"/>
<rect x="1439.7" y="1041.9" width="3.1" height="19.5" rx="1.6" fill="#2a2aa8"/>
<rect x="1439.8" y="1057.4" width="2.6" height="11.1" rx="1.3" fill="#1c1c8c"/>
<rect x="1440.4" y="1070.4" width="2.1" height="17.7" rx="1.1" fill="#3434b8"/>
<rect x="1441.8" y="1085.5" width="2.0" height="18.6" rx="1.0" fill="#3434b8"/>
<rect x="1442.2" y="1101.2" width="1.7" height="9.1" rx="0.8" fill="#2a2aa8"/>
<rect x="1445.5" y="1111.7" width="1.9" height="10.2" rx="0.9" fill="#2a2aa8"/>
<rect x="1443.9" y="1120.1" width="3.2" height="7.5" rx="1.6" fill="#3434b8"/>
<rect x="1446.8" y="1132.2" width="2.0" height="8.4" rx="1.0" fill="#3434b8"/>
<rect x="1447.8" y="1137.7" width="2.9" height="10.3" rx="1.5" fill="#2a2aa8"/>
<rect x="1446.5" y="1148.0" width="3.1" height="7.7" rx="1.6" fill="#1c1c8c"/>
<rect x="1448.5" y="1154.1" width="2.2" height="9.4" rx="1.1" fill="#2a2aa8"/>
<rect x="1434.0" y="1062.3" width="2.0" height="9.8" rx="1.0" fill="#1a1a90"/>
<rect x="1462.4" y="785.8" width="1.8" height="5.0" rx="0.9" fill="#2a2ad0"/>
<rect x="1432.4" y="911.9" width="2.0" height="2.4" rx="1.0" fill="#2a2ad0"/>
<rect x="1451.1" y="985.4" width="2.3" height="14.9" rx="1.1" fill="#10107a"/>
<rect x="1462.9" y="779.4" width="2.4" height="5.0" rx="1.2" fill="#2424c0"/>
<rect x="1461.9" y="906.4" width="2.1" height="4.9" rx="1.0" fill="#1a1a90"/>
<rect x="1458.2" y="863.0" width="2.0" height="4.2" rx="1.0" fill="#1c1ca8"/>
<rect x="1431.1" y="1118.8" width="1.6" height="5.7" rx="0.8" fill="#10107a"/>
<rect x="1423.9" y="878.0" width="1.3" height="2.4" rx="0.7" fill="#10107a"/>
<rect x="1453.7" y="1142.2" width="1.7" height="9.1" rx="0.9" fill="#2a2ad0"/>
<rect x="1437.2" y="980.4" width="2.1" height="13.7" rx="1.0" fill="#2a2ad0"/>
<rect x="1446.9" y="808.8" width="2.0" height="4.5" rx="1.0" fill="#2a2ad0"/>
<rect x="1419.4" y="795.2" width="1.7" height="8.9" rx="0.9" fill="#1a1a90"/>
<rect x="1447.3" y="914.5" width="1.7" height="9.2" rx="0.9" fill="#2a2ad0"/>
<rect x="1456.5" y="796.7" width="1.6" height="13.4" rx="0.8" fill="#1c1ca8"/>
<rect x="1441.8" y="1146.0" width="1.5" height="7.9" rx="0.8" fill="#10107a"/>
<rect x="1420.1" y="1054.0" width="2.1" height="8.0" rx="1.0" fill="#10107a"/>
<rect x="1419.4" y="894.0" width="2.0" height="12.8" rx="1.0" fill="#10107a"/>
<rect x="1459.1" y="924.8" width="2.1" height="3.8" rx="1.0" fill="#2a2ad0"/>
<rect x="1431.1" y="1104.4" width="1.8" height="7.9" rx="0.9" fill="#1c1ca8"/>
<rect x="1454.7" y="925.0" width="1.9" height="11.0" rx="0.9" fill="#10107a"/>
<rect x="1430.4" y="986.8" width="2.3" height="3.7" rx="1.1" fill="#2424c0"/>
<rect x="1437.3" y="919.1" width="2.0" height="3.6" rx="1.0" fill="#10107a"/>
<rect x="1419.3" y="1096.3" width="2.1" height="3.1" rx="1.1" fill="#2424c0"/>
<rect x="1448.1" y="793.4" width="2.0" height="6.6" rx="1.0" fill="#2424c0"/>
<rect x="1455.9" y="992.2" width="2.0" height="6.3" rx="1.0" fill="#1c1ca8"/>
<rect x="1453.0" y="861.9" width="2.1" height="14.4" rx="1.1" fill="#2a2ad0"/>
<rect x="1437.0" y="755.8" width="1.5" height="5.5" rx="0.7" fill="#1a1a90"/>
<rect x="1449.5" y="756.4" width="1.3" height="3.3" rx="0.7" fill="#1c1ca8"/>
<rect x="1438.9" y="889.9" width="2.0" height="3.8" rx="1.0" fill="#1a1a90"/>
<rect x="1437.2" y="900.3" width="1.7" height="7.2" rx="0.9" fill="#2a2ad0"/>
<rect x="1443.9" y="801.0" width="2.3" height="8.6" rx="1.1" fill="#2424c0"/>
<rect x="1423.4" y="801.3" width="1.6" height="4.7" rx="0.8" fill="#10107a"/>
<rect x="1438.5" y="1005.3" width="2.4" height="9.3" rx="1.2" fill="#1c1ca8"/>
<rect x="1451.1" y="752.5" width="2.0" height="8.0" rx="1.0" fill="#2a2ad0"/>
<rect x="1449.3" y="1108.6" width="1.3" height="4.7" rx="0.7" fill="#2424c0"/>
<rect x="1424.6" y="913.7" width="2.0" height="7.2" rx="1.0" fill="#10107a"/>
<rect x="1432.3" y="1063.5" width="1.8" height="8.5" rx="0.9" fill="#1c1ca8"/>
<rect x="1437.2" y="857.7" width="2.4" height="4.8" rx="1.2" fill="#1c1ca8"/>
<rect x="1462.2" y="1019.1" width="2.1" height="7.2" rx="1.0" fill="#10107a"/>
<rect x="1463.9" y="1113.3" width="2.2" height="3.4" rx="1.1" fill="#2424c0"/>
<rect x="1421.0" y="924.3" width="2.6" height="1.6" rx="1.3" fill="#2424c0"/>
<rect x="1447.1" y="865.4" width="1.6" height="8.0" rx="0.8" fill="#1a1a90"/>
<rect x="1457.3" y="1035.3" width="2.5" height="3.6" rx="1.2" fill="#1a1a90"/>
<rect x="1422.7" y="974.2" width="2.3" height="3.7" rx="1.2" fill="#1c1ca8"/>
<rect x="1432.5" y="795.2" width="2.0" height="3.8" rx="1.0" fill="#2424c0"/>
<rect x="1428.9" y="767.6" width="1.7" height="8.5" rx="0.9" fill="#1a1a90"/>
<rect x="1459.3" y="1045.2" width="1.6" height="8.4" rx="0.8" fill="#2a2ad0"/>
<rect x="1419.1" y="1058.3" width="2.2" height="9.6" rx="1.1" fill="#10107a"/>
<rect x="1446.7" y="1081.1" width="2.3" height="8.8" rx="1.1" fill="#1c1ca8"/>
<rect x="1408.1" y="1035.3" width="2.5" height="5.6" rx="1.2" fill="#2a2ad0"/>
<rect x="1404.0" y="972.0" width="2.2" height="2.1" rx="1.1" fill="#1a1a90"/>
<rect x="1404.1" y="1075.2" width="1.8" height="6.7" rx="0.9" fill="#1a1a90"/>
<rect x="1399.0" y="972.3" width="2.3" height="4.0" rx="1.1" fill="#1a1a90"/>
<rect x="1401.1" y="848.1" width="2.4" height="6.9" rx="1.2" fill="#1c1ca8"/>
<rect x="1403.0" y="877.2" width="2.3" height="11.1" rx="1.2" fill="#10107a"/>
<rect x="1412.1" y="758.2" width="1.5" height="9.7" rx="0.7" fill="#10107a"/>
<rect x="1404.5" y="749.1" width="2.1" height="2.8" rx="1.1" fill="#2a2ad0"/>
<rect x="1409.3" y="977.6" width="1.4" height="11.3" rx="0.7" fill="#1a1a90"/>
<rect x="1415.0" y="921.7" width="2.1" height="11.7" rx="1.1" fill="#1c1ca8"/>
<rect x="1405.9" y="1088.0" width="1.7" height="10.3" rx="0.9" fill="#10107a"/>
<rect x="1405.0" y="1055.8" width="2.2" height="5.1" rx="1.1" fill="#1c1ca8"/>
<rect x="1396.3" y="1014.3" width="1.6" height="10.6" rx="0.8" fill="#2424c0"/>
<rect x="1411.4" y="958.9" width="2.0" height="8.1" rx="1.0" fill="#2424c0"/>
<rect x="1410.2" y="806.7" width="1.6" height="4.1" rx="0.8" fill="#1a1a90"/>
<rect x="1406.9" y="767.2" width="1.9" height="4.2" rx="1.0" fill="#1c1ca8"/>
<rect x="1402.6" y="860.3" width="1.8" height="7.4" rx="0.9" fill="#2424c0"/>
<rect x="1412.6" y="969.3" width="2.5" height="2.9" rx="1.3" fill="#1a1a90"/>
<rect x="1396.8" y="893.6" width="2.0" height="8.9" rx="1.0" fill="#1a1a90"/>
<rect x="1404.1" y="815.9" width="1.9" height="9.8" rx="0.9" fill="#10107a"/>
<rect x="1399.9" y="920.8" width="2.2" height="4.9" rx="1.1" fill="#1a1a90"/>
<rect x="1400.8" y="804.6" width="2.4" height="17.2" rx="1.2" fill="#2a2ad0"/>
<rect x="1405.7" y="983.7" width="2.5" height="8.4" rx="1.2" fill="#2424c0"/>
<rect x="1402.7" y="951.9" width="2.1" height="11.4" rx="1.0" fill="#2a2ad0"/>
<rect x="1412.6" y="887.2" width="1.6" height="16.1" rx="0.8" fill="#1c1ca8"/>
<rect x="1402.9" y="808.5" width="1.6" height="10.1" rx="0.8" fill="#10107a"/>
<rect x="1406.2" y="935.9" width="1.9" height="11.2" rx="0.9" fill="#2a2ad0"/>
<rect x="1409.4" y="1067.1" width="1.8" height="10.7" rx="0.9" fill="#10107a"/>
<rect x="1406.7" y="1047.5" width="2.6" height="4.4" rx="1.3" fill="#2424c0"/>
<rect x="1398.6" y="749.3" width="1.6" height="7.4" rx="0.8" fill="#1c1ca8"/>
<rect x="1407.2" y="993.5" width="1.8" height="11.7" rx="0.9" fill="#10107a"/>
<rect x="1406.8" y="830.7" width="1.3" height="16.3" rx="0.7" fill="#10107a"/>
<rect x="1397.4" y="820.1" width="1.7" height="9.0" rx="0.9" fill="#2424c0"/>
<rect x="1396.1" y="1079.8" width="1.7" height="9.6" rx="0.8" fill="#1a1a90"/>
<rect x="1550.1" y="694.0" width="1.4" height="7.8" rx="0.7" fill="#2424c0"/>
<rect x="1662.3" y="718.4" width="2.0" height="4.7" rx="1.0" fill="#10107a"/>
<rect x="1676.1" y="743.3" width="1.6" height="7.4" rx="0.8" fill="#2a2ad0"/>
<rect x="1611.3" y="742.8" width="2.0" height="5.4" rx="1.0" fill="#2a2ad0"/>
<rect x="1551.6" y="731.6" width="1.3" height="1.9" rx="0.7" fill="#1a1a90"/>
<rect x="1669.1" y="696.1" width="2.2" height="7.0" rx="1.1" fill="#1c1ca8"/>
<rect x="1632.5" y="691.9" width="1.8" height="11.0" rx="0.9" fill="#2424c0"/>
<rect x="1561.8" y="720.1" width="1.9" height="3.1" rx="0.9" fill="#1c1ca8"/>
<rect x="1623.7" y="713.6" width="1.6" height="3.0" rx="0.8" fill="#1c1ca8"/>
<rect x="1683.5" y="724.3" width="1.6" height="3.6" rx="0.8" fill="#1c1ca8"/>
<rect x="1676.1" y="742.4" width="2.0" height="5.6" rx="1.0" fill="#2424c0"/>
<rect x="1566.7" y="723.0" width="2.0" height="7.4" rx="1.0" fill="#1a1a90"/>
<rect x="1606.5" y="729.2" width="2.1" height="1.6" rx="1.0" fill="#2a2ad0"/>
<rect x="1551.0" y="705.5" width="2.3" height="2.2" rx="1.2" fill="#1a1a90"/>
<rect x="1677.2" y="703.2" width="1.6" height="8.6" rx="0.8" fill="#10107a"/>
<rect x="1553.6" y="718.5" width="2.2" height="6.7" rx="1.1" fill="#2424c0"/>
<rect x="1548.6" y="712.5" width="1.4" height="1.5" rx="0.7" fill="#2424c0"/>
<rect x="1662.9" y="722.2" width="2.2" height="1.8" rx="1.1" fill="#2a2ad0"/>
<rect x="1681.8" y="731.4" width="1.5" height="3.9" rx="0.7" fill="#1c1ca8"/>
<rect x="1487.3" y="701.8" width="1.6" height="4.4" rx="0.8" fill="#2424c0"/>
<rect x="1558.5" y="726.1" width="2.3" height="1.8" rx="1.1" fill="#10107a"/>
<rect x="1645.6" y="695.9" width="1.8" height="4.4" rx="0.9" fill="#10107a"/>
<rect x="1488.8" y="734.3" width="1.8" height="6.8" rx="0.9" fill="#10107a"/>
<rect x="1641.4" y="735.6" width="1.7" height="7.0" rx="0.8" fill="#1c1ca8"/>
<rect x="1598.8" y="741.5" width="2.2" height="7.3" rx="1.1" fill="#1a1a90"/>
<rect x="1684.4" y="706.7" width="1.5" height="8.1" rx="0.8" fill="#2424c0"/>
<rect x="1649.2" y="720.0" width="2.4" height="5.1" rx="1.2" fill="#1a1a90"/>
<rect x="1616.6" y="692.0" width="1.8" height="4.6" rx="0.9" fill="#2424c0"/>
<rect x="1548.2" y="730.8" width="2.5" height="10.9" rx="1.2" fill="#2a2ad0"/>
<rect x="1689.8" y="701.0" width="2.4" height="4.3" rx="1.2" fill="#2a2ad0"/>
<rect x="1508.8" y="690.9" width="1.9" height="5.1" rx="0.9" fill="#2424c0"/>
<rect x="1553.1" y="743.1" width="2.2" height="2.0" rx="1.1" fill="#1a1a90"/>
<rect x="1536.3" y="740.4" width="2.3" height="9.0" rx="1.1" fill="#1c1ca8"/>
<rect x="1496.4" y="735.8" width="1.9" height="11.6" rx="0.9" fill="#2a2ad0"/>
<rect x="1527.7" y="720.4" width="2.5" height="6.0" rx="1.2" fill="#2424c0"/>
<rect x="1650.6" y="718.1" width="1.3" height="4.8" rx="0.7" fill="#1c1ca8"/>
<rect x="1627.8" y="732.1" width="1.6" height="4.0" rx="0.8" fill="#1c1ca8"/>
<rect x="1504.0" y="692.8" width="2.2" height="3.1" rx="1.1" fill="#2a2ad0"/>
<rect x="1608.6" y="733.2" width="2.0" height="10.6" rx="1.0" fill="#2a2ad0"/>
<rect x="1595.8" y="717.0" width="2.3" height="7.0" rx="1.1" fill="#1c1ca8"/>
</g>
<g filter="url(#soft)">
<rect x="1376" y="300" width="14" height="870" fill="#1818e8" />
<rect x="1356" y="300" width="22" height="450" fill="#00d8e8" />
<rect x="1359" y="300" width="13" height="330" fill="#10e020" />
<rect x="1360.2" y="300" width="1.6" height="200" fill="#f0e000" />
<rect x="1356.5" y="690" width="24" height="480" fill="#1212e4" />
<rect x="1357.0" y="690" width="8.0" height="480" fill="#00ccf0" />
<rect x="1359.2" y="690" width="3.2" height="240" fill="#30e850" />
<rect x="1360.2" y="770" width="1.4" height="60" fill="#e8e020" />
<rect x="1370.8" y="898.0" width="2.3" height="17.0" fill="#000020"/>
<rect x="1365.3" y="964.9" width="3.4" height="39.0" fill="#000020"/>
<rect x="1367.2" y="880.2" width="2.9" height="34.9" fill="#000020"/>
<rect x="1366.5" y="1090.6" width="3.7" height="25.3" fill="#000020"/>
<rect x="1373.2" y="940.3" width="2.4" height="15.1" fill="#000020"/>
<rect x="1371.6" y="779.1" width="2.6" height="33.4" fill="#000020"/>
<rect x="1368.8" y="1033.8" width="2.7" height="39.5" fill="#000020"/>
<rect x="1367.8" y="1076.9" width="3.5" height="19.0" fill="#000020"/>
<rect x="1365.7" y="822.0" width="2.8" height="17.1" fill="#000020"/>
<rect x="1365.0" y="737.3" width="2.5" height="36.9" fill="#000020"/>
<rect x="1366.4" y="1092.1" width="2.0" height="14.0" fill="#000020"/>
<rect x="1367.4" y="1084.8" width="3.0" height="28.8" fill="#000020"/>
<rect x="1370.5" y="930.2" width="3.7" height="16.1" fill="#000020"/>
<rect x="1368.0" y="942.4" width="3.8" height="35.1" fill="#000020"/>
<rect x="1365.1" y="1035.0" width="2.7" height="18.2" fill="#000020"/>
<rect x="1367.3" y="966.4" width="3.9" height="12.2" fill="#000020"/>
<rect x="1369.0" y="916.0" width="3.5" height="25.7" fill="#000020"/>
<rect x="1373.2" y="934.4" width="2.7" height="34.3" fill="#000020"/>
<rect x="1369.3" y="821.9" width="2.5" height="32.8" fill="#000020"/>
<rect x="1368.3" y="801.1" width="2.6" height="24.0" fill="#000020"/>
<rect x="1373.7" y="1111.4" width="3.6" height="17.6" fill="#000020"/>
<rect x="1365.5" y="782.9" width="3.0" height="29.7" fill="#000020"/>
<rect x="1373.2" y="1087.4" width="2.2" height="17.6" fill="#000020"/>
<rect x="1366.3" y="1005.3" width="3.5" height="11.1" fill="#000020"/>
<rect x="1371.7" y="1007.2" width="2.8" height="32.6" fill="#000020"/>
<rect x="1370.8" y="1110.0" width="2.4" height="12.5" fill="#000020"/>
<rect x="1371.2" y="950.3" width="2.7" height="28.6" fill="#000020"/>
<rect x="1368.7" y="810.2" width="3.4" height="13.2" fill="#000020"/>
<rect x="1375.3" y="853.9" width="3.8" height="34.0" fill="#000020"/>
<rect x="1369.1" y="813.0" width="3.5" height="15.5" fill="#000020"/>
<rect x="1368.7" y="1103.8" width="3.8" height="11.0" fill="#000020"/>
<rect x="1367.0" y="840.0" width="4.0" height="26.4" fill="#000020"/>
<rect x="1376.2" y="754.5" width="3.7" height="21.1" fill="#000020"/>
<rect x="1374.8" y="850.9" width="2.4" height="35.4" fill="#000020"/>
<rect x="1364.1" y="1147.7" width="3.2" height="20.5" fill="#000020"/>
<rect x="1375.9" y="975.2" width="2.5" height="14.4" fill="#000020"/>
<rect x="1374.7" y="1033.2" width="3.7" height="25.2" fill="#000020"/>
<rect x="1374.0" y="1111.5" width="2.1" height="27.5" fill="#000020"/>
<rect x="1367.0" y="768.3" width="2.6" height="26.0" fill="#000020"/>
<rect x="1374.1" y="1131.4" width="3.0" height="30.2" fill="#000020"/>
<rect x="1364.4" y="847.6" width="3.9" height="26.4" fill="#000020"/>
<rect x="1372.2" y="758.2" width="2.3" height="36.3" fill="#000020"/>
<rect x="1366.0" y="746.2" width="3.7" height="39.4" fill="#000020"/>
<rect x="1372.3" y="894.5" width="2.5" height="38.7" fill="#000020"/>
<rect x="1376.3" y="1005.7" width="2.7" height="26.5" fill="#000020"/>
<rect x="1369.6" y="1151.8" width="2.9" height="33.9" fill="#000020"/>
<rect x="1390.4" y="954.5" width="2.7" height="11.7" fill="#fff"/>
<rect x="1391.7" y="873.5" width="3.5" height="24.8" fill="#fff"/>
<rect x="1393.2" y="811.0" width="2.4" height="14.4" fill="#fff"/>
<rect x="1386.7" y="879.0" width="3.4" height="21.0" fill="#fff"/>
<rect x="1390.7" y="1022.4" width="2.5" height="9.8" fill="#fff"/>
<rect x="1389.7" y="829.1" width="3.0" height="24.7" fill="#fff"/>
<rect x="1392.1" y="1068.1" width="3.6" height="10.9" fill="#fff"/>
<rect x="1392.9" y="1031.7" width="3.5" height="26.4" fill="#fff"/>
<rect x="1386.6" y="1132.5" width="3.2" height="9.2" fill="#fff"/>
<rect x="1388.2" y="1082.3" width="2.3" height="11.5" fill="#fff"/>
<rect x="1393.5" y="772.5" width="2.7" height="14.0" fill="#fff"/>
<rect x="1386.3" y="933.4" width="3.8" height="10.9" fill="#fff"/>
<rect x="1384.1" y="893.2" width="2.4" height="14.8" fill="#fff"/>
<rect x="1392.7" y="1010.9" width="2.2" height="16.8" fill="#fff"/>
<rect x="1383.4" y="1081.2" width="2.4" height="19.2" fill="#fff"/>
<rect x="1393.3" y="978.0" width="3.3" height="12.3" fill="#fff"/>
<rect x="1383.6" y="992.5" width="2.9" height="27.8" fill="#fff"/>
<rect x="1386.9" y="1095.8" width="2.8" height="24.3" fill="#fff"/>
<rect x="1393.7" y="902.4" width="3.6" height="22.9" fill="#fff"/>
<rect x="1391.1" y="1092.2" width="3.4" height="22.6" fill="#fff"/>
<rect x="1380.5" y="1003.6" width="3.7" height="19.8" fill="#fff"/>
<rect x="1381.7" y="1082.7" width="3.3" height="13.7" fill="#fff"/>
</g>
<g filter="url(#dashf)">
<rect x="1510.6" y="669.7" width="2.3" height="25.2" rx="1.2" fill="#2020d0"/>
<rect x="1447.0" y="691.2" width="2.7" height="43.8" rx="1.3" fill="#000040"/>
<rect x="1454.3" y="694.9" width="2.7" height="28.5" rx="1.4" fill="#00001c"/>
<rect x="1384.4" y="710.4" width="1.6" height="18.1" rx="0.8" fill="#2020d0"/>
<rect x="1529.4" y="656.3" width="1.6" height="8.1" rx="0.8" fill="#000040"/>
<rect x="1512.9" y="667.3" width="2.7" height="19.6" rx="1.3" fill="#000040"/>
<rect x="1686.6" y="626.9" width="2.8" height="24.5" rx="1.4" fill="#000040"/>
<rect x="1446.3" y="690.9" width="2.7" height="38.9" rx="1.4" fill="#1a1ab0"/>
<rect x="1500.7" y="684.3" width="2.8" height="12.0" rx="1.4" fill="#1414c8"/>
<rect x="1559.9" y="647.7" width="1.8" height="18.6" rx="0.9" fill="#1a1ab0"/>
<rect x="1669.6" y="629.0" width="1.9" height="17.2" rx="0.9" fill="#1a1ab0"/>
<rect x="1676.0" y="628.0" width="1.8" height="28.1" rx="0.9" fill="#000040"/>
<rect x="1457.0" y="695.7" width="2.2" height="25.6" rx="1.1" fill="#2020d0"/>
<rect x="1403.1" y="697.0" width="1.4" height="14.0" rx="0.7" fill="#000040"/>
<rect x="1666.9" y="629.5" width="1.5" height="8.8" rx="0.7" fill="#1414c8"/>
<rect x="1648.9" y="633.0" width="1.5" height="12.6" rx="0.8" fill="#000040"/>
<rect x="1446.6" y="691.0" width="1.4" height="38.8" rx="0.7" fill="#1414c8"/>
<rect x="1469.6" y="699.5" width="2.2" height="47.5" rx="1.1" fill="#000040"/>
<rect x="1567.2" y="646.2" width="2.5" height="10.1" rx="1.3" fill="#1414c8"/>
<rect x="1451.8" y="693.6" width="1.9" height="16.6" rx="0.9" fill="#2020d0"/>
<rect x="1449.2" y="692.3" width="2.2" height="32.1" rx="1.1" fill="#1414c8"/>
<rect x="1657.4" y="631.4" width="2.9" height="13.2" rx="1.5" fill="#00001c"/>
<rect x="1679.1" y="627.6" width="2.6" height="24.6" rx="1.3" fill="#1a1ab0"/>
<rect x="1483.7" y="698.7" width="2.0" height="48.5" rx="1.0" fill="#1414c8"/>
<rect x="1411.3" y="687.1" width="1.5" height="26.4" rx="0.7" fill="#000040"/>
<rect x="1427.6" y="681.9" width="2.0" height="38.9" rx="1.0" fill="#2020d0"/>
<rect x="1526.2" y="657.6" width="1.9" height="22.3" rx="0.9" fill="#1414c8"/>
<rect x="1426.9" y="681.6" width="2.0" height="41.0" rx="1.0" fill="#000040"/>
<rect x="1426.7" y="681.5" width="2.3" height="39.2" rx="1.2" fill="#00001c"/>
<rect x="1589.5" y="641.7" width="1.8" height="20.3" rx="0.9" fill="#2020d0"/>
<rect x="1655.9" y="631.7" width="2.9" height="20.1" rx="1.4" fill="#1414c8"/>
<rect x="1417.2" y="677.7" width="2.4" height="19.8" rx="1.2" fill="#00001c"/>
<rect x="1382.3" y="712.5" width="2.3" height="49.6" rx="1.1" fill="#1414c8"/>
<rect x="1510.3" y="670.0" width="1.9" height="22.4" rx="0.9" fill="#000040"/>
<rect x="1494.6" y="691.5" width="1.6" height="28.2" rx="0.8" fill="#00001c"/>
<rect x="1483.2" y="698.9" width="2.2" height="31.5" rx="1.1" fill="#00001c"/>
<rect x="1528.6" y="656.6" width="2.7" height="9.4" rx="1.3" fill="#1414c8"/>
<rect x="1417.6" y="677.6" width="2.5" height="21.8" rx="1.2" fill="#1414c8"/>
<rect x="1373.3" y="731.8" width="2.7" height="28.9" rx="1.4" fill="#1a1ab0"/>
<rect x="1397.0" y="700.8" width="1.6" height="14.1" rx="0.8" fill="#00001c"/>
<rect x="1623.0" y="636.5" width="2.2" height="14.0" rx="1.1" fill="#1a1ab0"/>
<rect x="1381.5" y="713.3" width="3.0" height="38.9" rx="1.5" fill="#2020d0"/>
<rect x="1540.1" y="652.0" width="2.3" height="11.0" rx="1.2" fill="#1414c8"/>
<rect x="1517.3" y="662.9" width="2.0" height="7.5" rx="1.0" fill="#1a1ab0"/>
<rect x="1603.0" y="639.0" width="1.9" height="30.4" rx="1.0" fill="#00001c"/>
<rect x="1446.5" y="691.0" width="1.7" height="35.8" rx="0.8" fill="#1a1ab0"/>
<rect x="1543.0" y="651.0" width="2.2" height="22.4" rx="1.1" fill="#000040"/>
<rect x="1519.4" y="660.8" width="1.6" height="30.2" rx="0.8" fill="#000040"/>
<rect x="1395.0" y="702.1" width="1.9" height="44.3" rx="0.9" fill="#1a1ab0"/>
<rect x="1618.5" y="637.0" width="1.6" height="27.7" rx="0.8" fill="#1414c8"/>
<rect x="1694.4" y="626.1" width="1.9" height="27.0" rx="0.9" fill="#000040"/>
<rect x="1671.2" y="628.7" width="2.7" height="7.2" rx="1.4" fill="#1a1ab0"/>
<rect x="1489.8" y="695.3" width="1.4" height="33.8" rx="0.7" fill="#1a1ab0"/>
<rect x="1565.3" y="646.6" width="2.5" height="30.4" rx="1.3" fill="#1a1ab0"/>
<rect x="1655.9" y="631.7" width="1.8" height="15.2" rx="0.9" fill="#1a1ab0"/>
<rect x="1440.9" y="688.2" width="2.3" height="16.0" rx="1.1" fill="#2020d0"/>
<rect x="1460.9" y="696.9" width="1.9" height="50.4" rx="1.0" fill="#000040"/>
<rect x="1395.6" y="701.7" width="2.2" height="34.7" rx="1.1" fill="#1414c8"/>
<rect x="1431.8" y="683.7" width="1.5" height="50.6" rx="0.7" fill="#1a1ab0"/>
<rect x="1581.3" y="643.4" width="2.0" height="7.4" rx="1.0" fill="#1414c8"/>
<rect x="1687.3" y="626.8" width="2.9" height="29.9" rx="1.4" fill="#1414c8"/>
<rect x="1638.4" y="634.6" width="2.2" height="23.4" rx="1.1" fill="#2020d0"/>
<rect x="1678.6" y="627.7" width="2.9" height="25.8" rx="1.4" fill="#00001c"/>
<rect x="1428.3" y="682.2" width="2.8" height="49.1" rx="1.4" fill="#1a1ab0"/>
<rect x="1559.3" y="647.8" width="2.9" height="15.4" rx="1.5" fill="#2020d0"/>
<rect x="1459.7" y="696.5" width="2.4" height="47.3" rx="1.2" fill="#1414c8"/>
<rect x="1381.3" y="713.4" width="1.9" height="23.0" rx="0.9" fill="#00001c"/>
<rect x="1455.4" y="695.3" width="1.8" height="42.9" rx="0.9" fill="#1a1ab0"/>
<rect x="1476.2" y="701.5" width="1.9" height="15.0" rx="1.0" fill="#00001c"/>
<rect x="1610.6" y="637.8" width="1.8" height="16.2" rx="0.9" fill="#1a1ab0"/>
<rect x="1644.2" y="633.7" width="2.0" height="28.3" rx="1.0" fill="#2020d0"/>
<rect x="1515.1" y="665.2" width="1.9" height="18.0" rx="0.9" fill="#00001c"/>
<rect x="1527.0" y="657.3" width="1.5" height="23.0" rx="0.7" fill="#000040"/>
<rect x="1679.9" y="627.6" width="2.0" height="11.1" rx="1.0" fill="#1414c8"/>
<rect x="1393.0" y="703.4" width="1.5" height="16.3" rx="0.7" fill="#00001c"/>
<rect x="1682.2" y="627.3" width="2.4" height="13.4" rx="1.2" fill="#1a1ab0"/>
<rect x="1520.4" y="659.9" width="2.6" height="17.5" rx="1.3" fill="#000040"/>
<rect x="1433.9" y="684.7" width="2.6" height="41.5" rx="1.3" fill="#2020d0"/>
<rect x="1449.6" y="692.6" width="1.9" height="20.9" rx="0.9" fill="#2020d0"/>
<rect x="1692.4" y="626.3" width="1.6" height="24.2" rx="0.8" fill="#000040"/>
<rect x="1473.9" y="700.8" width="2.0" height="20.5" rx="1.0" fill="#1414c8"/>
<rect x="1526.7" y="657.4" width="2.1" height="22.8" rx="1.0" fill="#1a1ab0"/>
<rect x="1416.7" y="678.4" width="2.5" height="21.4" rx="1.2" fill="#00001c"/>
<rect x="1514.1" y="666.2" width="1.7" height="12.6" rx="0.9" fill="#2020d0"/>
<rect x="1464.1" y="697.9" width="1.8" height="17.5" rx="0.9" fill="#1414c8"/>
<rect x="1639.7" y="634.4" width="2.3" height="14.8" rx="1.2" fill="#1414c8"/>
<rect x="1546.3" y="650.4" width="2.9" height="15.4" rx="1.5" fill="#1a1ab0"/>
<rect x="1608.8" y="638.0" width="2.5" height="8.1" rx="1.2" fill="#1414c8"/>
<rect x="1494.4" y="691.6" width="1.8" height="50.1" rx="0.9" fill="#2020d0"/>
<rect x="1488.3" y="696.5" width="1.5" height="13.4" rx="0.8" fill="#1414c8"/>
<rect x="1393.4" y="703.1" width="2.9" height="32.8" rx="1.4" fill="#1a1ab0"/>
<rect x="1457.5" y="695.9" width="2.8" height="43.2" rx="1.4" fill="#000040"/>
<rect x="1586.4" y="642.4" width="1.4" height="12.5" rx="0.7" fill="#1414c8"/>
<rect x="1415.1" y="681.1" width="2.7" height="18.0" rx="1.3" fill="#2020d0"/>
<rect x="1661.0" y="630.7" width="2.5" height="28.6" rx="1.2" fill="#00001c"/>
<rect x="1553.4" y="649.0" width="2.1" height="9.1" rx="1.0" fill="#00001c"/>
<rect x="1430.4" y="683.1" width="1.5" height="50.6" rx="0.7" fill="#1a1ab0"/>
<rect x="1450.6" y="693.0" width="2.5" height="43.1" rx="1.3" fill="#2020d0"/>
<rect x="1582.9" y="643.1" width="2.1" height="11.8" rx="1.1" fill="#00001c"/>
<rect x="1573.1" y="645.0" width="2.4" height="9.2" rx="1.2" fill="#00001c"/>
<rect x="1508.0" y="672.2" width="2.9" height="16.5" rx="1.4" fill="#00001c"/>
<rect x="1626.5" y="636.2" width="2.5" height="29.6" rx="1.3" fill="#2020d0"/>
<rect x="1548.7" y="649.9" width="2.9" height="18.3" rx="1.4" fill="#000040"/>
<rect x="1521.7" y="659.4" width="2.4" height="15.6" rx="1.2" fill="#2020d0"/>
<rect x="1644.9" y="633.6" width="2.7" height="19.9" rx="1.4" fill="#000040"/>
<rect x="1528.6" y="656.6" width="2.2" height="13.4" rx="1.1" fill="#2020d0"/>
<rect x="1472.9" y="700.5" width="2.6" height="39.5" rx="1.3" fill="#1414c8"/>
<rect x="1427.4" y="681.8" width="1.9" height="35.6" rx="0.9" fill="#1a1ab0"/>
<rect x="1501.3" y="683.4" width="2.9" height="24.9" rx="1.5" fill="#1414c8"/>
<rect x="1441.2" y="688.4" width="2.2" height="16.2" rx="1.1" fill="#000040"/>
<rect x="1558.0" y="648.0" width="2.7" height="9.6" rx="1.3" fill="#00001c"/>
<rect x="1645.6" y="633.5" width="2.1" height="9.2" rx="1.0" fill="#000040"/>
<rect x="1546.5" y="650.3" width="2.6" height="19.4" rx="1.3" fill="#1a1ab0"/>
<rect x="1633.2" y="635.3" width="2.4" height="18.7" rx="1.2" fill="#1a1ab0"/>
<rect x="1610.8" y="637.8" width="1.8" height="8.9" rx="0.9" fill="#1414c8"/>
<rect x="1540.6" y="651.8" width="1.9" height="29.5" rx="0.9" fill="#2020d0"/>
<rect x="1448.5" y="692.0" width="2.2" height="38.4" rx="1.1" fill="#2020d0"/>
<rect x="1548.2" y="650.0" width="2.3" height="21.8" rx="1.2" fill="#1414c8"/>
<rect x="1622.9" y="636.6" width="1.5" height="8.9" rx="0.7" fill="#000040"/>
<rect x="1469.3" y="699.5" width="2.8" height="34.7" rx="1.4" fill="#1414c8"/>
<rect x="1594.6" y="640.7" width="2.2" height="28.3" rx="1.1" fill="#00001c"/>
<rect x="1489.7" y="695.4" width="2.6" height="42.8" rx="1.3" fill="#1a1ab0"/>
<rect x="1550.4" y="649.6" width="1.4" height="20.5" rx="0.7" fill="#2020d0"/>
<rect x="1579.5" y="643.7" width="2.0" height="20.2" rx="1.0" fill="#2020d0"/>
<rect x="1457.6" y="695.9" width="1.6" height="13.6" rx="0.8" fill="#2020d0"/>
<rect x="1535.0" y="654.1" width="1.5" height="23.1" rx="0.8" fill="#00001c"/>
<rect x="1622.6" y="636.6" width="1.9" height="21.8" rx="1.0" fill="#000040"/>
<rect x="1525.5" y="657.9" width="2.5" height="8.9" rx="1.2" fill="#1414c8"/>
<rect x="1574.8" y="644.7" width="2.8" height="14.6" rx="1.4" fill="#000040"/>
<rect x="1467.8" y="699.0" width="2.8" height="22.4" rx="1.4" fill="#1414c8"/>
<rect x="1647.3" y="633.2" width="1.7" height="9.3" rx="0.8" fill="#00001c"/>
<rect x="1661.4" y="630.6" width="2.3" height="28.8" rx="1.2" fill="#2020d0"/>
<rect x="1450.2" y="692.8" width="2.4" height="13.9" rx="1.2" fill="#000040"/>
<rect x="1385.0" y="709.8" width="2.3" height="38.1" rx="1.2" fill="#1a1ab0"/>
<rect x="1423.0" y="679.9" width="2.1" height="17.8" rx="1.0" fill="#1414c8"/>
<rect x="1461.8" y="697.2" width="2.9" height="35.4" rx="1.5" fill="#2020d0"/>
<rect x="1372.8" y="733.4" width="2.3" height="14.6" rx="1.2" fill="#2020d0"/>
<rect x="1517.8" y="662.4" width="2.1" height="10.3" rx="1.1" fill="#1a1ab0"/>
<rect x="1579.4" y="643.8" width="1.8" height="18.3" rx="0.9" fill="#2020d0"/>
<rect x="1611.5" y="637.7" width="2.6" height="28.2" rx="1.3" fill="#1414c8"/>
<rect x="1448.0" y="691.7" width="2.8" height="24.4" rx="1.4" fill="#2020d0"/>
<rect x="1389.7" y="705.4" width="2.6" height="50.1" rx="1.3" fill="#1a1ab0"/>
<rect x="1495.2" y="691.0" width="1.9" height="45.3" rx="1.0" fill="#000040"/>
<rect x="1412.6" y="685.0" width="1.8" height="49.7" rx="0.9" fill="#1414c8"/>
<rect x="1473.1" y="700.6" width="2.4" height="23.0" rx="1.2" fill="#2020d0"/>
<rect x="1641.2" y="634.2" width="2.7" height="24.9" rx="1.3" fill="#1414c8"/>
<rect x="1575.6" y="644.5" width="2.7" height="16.0" rx="1.3" fill="#1a1ab0"/>
<rect x="1688.1" y="626.8" width="1.7" height="18.6" rx="0.9" fill="#1414c8"/>
<rect x="1521.6" y="659.5" width="2.1" height="28.2" rx="1.1" fill="#1414c8"/>
<rect x="1380.8" y="714.0" width="1.8" height="22.1" rx="0.9" fill="#2020d0"/>
<rect x="1582.4" y="643.1" width="1.4" height="23.7" rx="0.7" fill="#2020d0"/>
<rect x="1592.1" y="641.2" width="1.8" height="19.1" rx="0.9" fill="#000040"/>
<rect x="1402.7" y="697.3" width="3.0" height="23.3" rx="1.5" fill="#000040"/>
<rect x="1516.1" y="664.2" width="2.8" height="27.6" rx="1.4" fill="#2020d0"/>
<rect x="1513.6" y="666.7" width="2.8" height="9.3" rx="1.4" fill="#1a1ab0"/>
<rect x="1412.3" y="685.5" width="2.4" height="44.2" rx="1.2" fill="#1414c8"/>
<rect x="1464.2" y="697.9" width="2.7" height="48.0" rx="1.4" fill="#000040"/>
<rect x="1494.3" y="691.7" width="2.8" height="28.2" rx="1.4" fill="#2020d0"/>
<rect x="1507.7" y="672.5" width="2.1" height="17.9" rx="1.0" fill="#00001c"/>
<rect x="1652.6" y="632.4" width="1.9" height="23.3" rx="0.9" fill="#1414c8"/>
<rect x="1446.9" y="691.2" width="2.7" height="17.2" rx="1.3" fill="#00001c"/>
<rect x="1548.4" y="650.0" width="1.8" height="29.9" rx="0.9" fill="#00001c"/>
<rect x="1435.4" y="685.5" width="2.6" height="44.0" rx="1.3" fill="#000040"/>
<rect x="1653.1" y="632.3" width="2.5" height="22.0" rx="1.3" fill="#2020d0"/>
<rect x="1653.6" y="632.2" width="1.9" height="14.9" rx="0.9" fill="#1a1ab0"/>
<rect x="1512.2" y="668.0" width="3.0" height="16.9" rx="1.5" fill="#1414c8"/>
<rect x="1680.8" y="627.5" width="1.4" height="26.2" rx="0.7" fill="#1a1ab0"/>
<rect x="1631.8" y="635.6" width="1.4" height="17.1" rx="0.7" fill="#1414c8"/>
<rect x="1439.6" y="687.5" width="2.3" height="18.1" rx="1.1" fill="#000040"/>
<rect x="1412.4" y="685.4" width="2.2" height="35.7" rx="1.1" fill="#2020d0"/>
<rect x="1666.8" y="629.6" width="2.2" height="8.6" rx="1.1" fill="#2020d0"/>
<rect x="1625.6" y="636.3" width="1.4" height="10.6" rx="0.7" fill="#2020d0"/>
<rect x="1662.6" y="630.4" width="2.9" height="29.0" rx="1.5" fill="#00001c"/>
<rect x="1596.1" y="640.4" width="2.9" height="21.9" rx="1.5" fill="#00001c"/>
<rect x="1672.4" y="628.4" width="2.7" height="12.2" rx="1.4" fill="#000040"/>
<rect x="1561.0" y="647.4" width="1.4" height="18.4" rx="0.7" fill="#2020d0"/>
<rect x="1664.5" y="630.0" width="2.3" height="7.5" rx="1.2" fill="#1a1ab0"/>
<rect x="1457.2" y="695.8" width="2.8" height="30.7" rx="1.4" fill="#000040"/>
<rect x="1537.2" y="653.2" width="2.4" height="29.1" rx="1.2" fill="#2020d0"/>
<rect x="1669.9" y="628.9" width="1.5" height="15.6" rx="0.8" fill="#1a1ab0"/>
<rect x="1387.0" y="707.7" width="2.0" height="32.0" rx="1.0" fill="#00001c"/>
<rect x="1534.8" y="654.2" width="1.4" height="27.9" rx="0.7" fill="#2020d0"/>
<rect x="1642.8" y="633.9" width="2.9" height="8.6" rx="1.5" fill="#1414c8"/>
<rect x="1375.8" y="723.8" width="1.7" height="19.7" rx="0.8" fill="#1a1ab0"/>
<rect x="1385.8" y="709.0" width="2.7" height="18.6" rx="1.3" fill="#000040"/>
<rect x="1667.1" y="629.5" width="2.7" height="30.4" rx="1.3" fill="#1414c8"/>
<rect x="1485.5" y="698.0" width="2.1" height="18.4" rx="1.0" fill="#1a1ab0"/>
<rect x="1527.3" y="657.2" width="1.9" height="8.6" rx="0.9" fill="#000040"/>
<rect x="1391.7" y="704.2" width="2.7" height="44.5" rx="1.3" fill="#1a1ab0"/>
<rect x="1682.4" y="627.3" width="2.0" height="21.2" rx="1.0" fill="#00001c"/>
<rect x="1492.0" y="693.6" width="1.8" height="14.8" rx="0.9" fill="#1a1ab0"/>
<rect x="1463.7" y="697.8" width="2.9" height="26.7" rx="1.4" fill="#1414c8"/>
<rect x="1619.8" y="636.9" width="2.1" height="20.0" rx="1.1" fill="#000040"/>
<rect x="1518.6" y="661.7" width="1.7" height="23.5" rx="0.9" fill="#1a1ab0"/>
<rect x="1543.4" y="651.0" width="2.6" height="15.7" rx="1.3" fill="#2020d0"/>
<rect x="1643.0" y="633.9" width="2.0" height="22.4" rx="1.0" fill="#1a1ab0"/>
<rect x="1394.8" y="702.2" width="1.9" height="32.0" rx="1.0" fill="#2020d0"/>
<rect x="1691.4" y="626.4" width="2.5" height="27.7" rx="1.2" fill="#000040"/>
<rect x="1414.3" y="682.3" width="2.4" height="46.4" rx="1.2" fill="#1a1ab0"/>
<rect x="1395.1" y="702.1" width="2.4" height="27.7" rx="1.2" fill="#000040"/>
<rect x="1639.4" y="634.4" width="2.8" height="14.4" rx="1.4" fill="#2020d0"/>
<rect x="1388.7" y="706.1" width="2.9" height="28.7" rx="1.4" fill="#2020d0"/>
<rect x="1612.5" y="637.6" width="2.1" height="26.2" rx="1.1" fill="#2020d0"/>
<rect x="1623.1" y="636.5" width="2.4" height="19.5" rx="1.2" fill="#000040"/>
<rect x="1553.6" y="648.9" width="2.1" height="22.4" rx="1.1" fill="#000040"/>
<rect x="1665.3" y="629.9" width="2.7" height="28.1" rx="1.3" fill="#1414c8"/>
<rect x="1405.2" y="695.8" width="2.9" height="12.2" rx="1.5" fill="#1a1ab0"/>
<rect x="1619.0" y="636.9" width="2.5" height="18.3" rx="1.3" fill="#000040"/>
<rect x="1506.3" y="674.6" width="2.9" height="13.0" rx="1.4" fill="#2020d0"/>
<rect x="1583.8" y="642.9" width="2.1" height="17.0" rx="1.1" fill="#000040"/>
<rect x="1463.7" y="697.8" width="2.1" height="29.1" rx="1.0" fill="#1414c8"/>
<rect x="1384.0" y="710.8" width="2.0" height="25.4" rx="1.0" fill="#2020d0"/>
<rect x="1525.3" y="658.0" width="2.5" height="28.0" rx="1.2" fill="#1414c8"/>
<rect x="1676.5" y="627.9" width="2.6" height="25.2" rx="1.3" fill="#1a1ab0"/>
<rect x="1669.1" y="629.1" width="3.0" height="28.1" rx="1.5" fill="#00001c"/>
<rect x="1398.0" y="700.3" width="2.7" height="16.8" rx="1.4" fill="#1a1ab0"/>
<rect x="1657.6" y="631.4" width="2.8" height="8.6" rx="1.4" fill="#00001c"/>
<rect x="1685.9" y="627.0" width="1.8" height="17.1" rx="0.9" fill="#00001c"/>
<rect x="1429.8" y="682.9" width="1.6" height="17.9" rx="0.8" fill="#1a1ab0"/>
<rect x="1517.9" y="662.4" width="2.2" height="20.3" rx="1.1" fill="#000040"/>
<rect x="1557.7" y="648.1" width="3.0" height="25.6" rx="1.5" fill="#2020d0"/>
<rect x="1601.8" y="639.3" width="1.8" height="8.1" rx="0.9" fill="#00001c"/>
<rect x="1520.0" y="660.3" width="2.9" height="28.3" rx="1.4" fill="#000040"/>
<rect x="1500.5" y="684.8" width="1.9" height="9.0" rx="0.9" fill="#2020d0"/>
<rect x="1657.2" y="631.5" width="2.9" height="22.5" rx="1.5" fill="#2020d0"/>
<rect x="1389.4" y="705.6" width="2.5" height="45.4" rx="1.2" fill="#1414c8"/>
<rect x="1539.1" y="652.4" width="2.3" height="16.1" rx="1.1" fill="#2020d0"/>
<rect x="1532.9" y="654.9" width="1.5" height="11.9" rx="0.8" fill="#1414c8"/>
<rect x="1415.8" y="679.8" width="2.7" height="23.5" rx="1.4" fill="#2020d0"/>
<rect x="1606.6" y="638.3" width="2.2" height="27.9" rx="1.1" fill="#2020d0"/>
</g>
<g filter="url(#spec)">
<polygon points="1351.6,473.1 1375.7,468.8 1518.1,466.6 1520.3,473.1 1526.9,481.9 1542.2,490.7 1564.1,493.3 1607.9,494.6 1717.5,492.9 1717.5,638.6 1673.7,644.0 1651.7,648.4 1629.8,652.8 1607.9,655.0 1586.0,659.4 1564.1,663.8 1542.2,668.2 1520.3,676.9 1507.1,692.3 1498.4,709.8 1487.4,720.7 1476.5,729.5 1454.6,725.1 1432.6,714.2 1417.3,707.6 1406.3,725.1 1388.8,736.1 1377.9,747.0 1372.4,771.1 1366.9,771.1 1366.0,692.3 1351.6,687.9" fill="#00001a"/>
<polygon points="1351.6,476.4 1375.7,472.1 1513.7,469.9 1518.1,477.5 1526.9,487.4 1542.2,496.8 1564.1,499.9 1607.9,501.2 1717.5,499.0 1717.5,629.8 1673.7,634.2 1651.7,638.6 1629.8,641.9 1607.9,644.0 1586.0,648.4 1564.1,652.8 1542.2,657.2 1520.3,666.0 1507.1,679.1 1498.4,694.4 1487.4,703.2 1476.5,707.6 1454.6,701.0 1432.6,690.1 1417.3,683.5 1406.3,701.0 1388.8,712.0 1377.9,722.9 1371.3,762.4 1366.9,762.4 1366.0,696.6 1351.6,692.3" fill="#1010f0"/>
</g>
<g filter="url(#spec2)">
<polygon points="1376.0,290.0 1494.0,290.0 1493.0,380.0 1497.0,440.0 1503.0,470.0 1512.0,452.0 1516.0,470.0 1522.0,498.0 1540.0,500.0 1540.0,520.0 1376.0,520.0" fill="#1616e8"/>
<rect x="1421.7" y="419.9" width="3.3" height="29.9" fill="#00001c"/>
<rect x="1489.9" y="466.4" width="2.2" height="20.8" fill="#00001c"/>
<rect x="1484.2" y="328.1" width="2.2" height="53.3" fill="#00001c"/>
<rect x="1416.4" y="298.5" width="3.2" height="36.1" fill="#00001c"/>
<rect x="1387.3" y="449.8" width="2.6" height="33.0" fill="#00001c"/>
<rect x="1399.1" y="469.7" width="2.9" height="43.4" fill="#00001c"/>
<rect x="1384.6" y="474.1" width="2.4" height="22.8" fill="#00001c"/>
<rect x="1406.9" y="358.2" width="1.7" height="22.8" fill="#00001c"/>
<rect x="1464.7" y="374.1" width="2.3" height="17.7" fill="#00001c"/>
<rect x="1439.5" y="292.7" width="2.9" height="46.4" fill="#00001c"/>
<rect x="1420.9" y="482.2" width="1.8" height="30.4" fill="#00001c"/>
<rect x="1474.2" y="385.2" width="2.3" height="13.5" fill="#00001c"/>
<rect x="1463.6" y="436.2" width="3.3" height="22.9" fill="#00001c"/>
<rect x="1417.7" y="406.2" width="2.8" height="16.4" fill="#00001c"/>
<rect x="1417.3" y="413.6" width="3.5" height="36.4" fill="#00001c"/>
<rect x="1413.8" y="376.1" width="2.7" height="54.3" fill="#00001c"/>
<rect x="1452.3" y="405.5" width="3.1" height="54.6" fill="#00001c"/>
<rect x="1387.6" y="322.4" width="2.7" height="17.5" fill="#00001c"/>
<rect x="1415.9" y="351.4" width="2.1" height="12.6" fill="#00001c"/>
<rect x="1391.8" y="445.6" width="3.5" height="33.8" fill="#00001c"/>
<rect x="1453.8" y="391.7" width="2.3" height="18.5" fill="#00001c"/>
<rect x="1462.8" y="464.2" width="3.5" height="18.1" fill="#00001c"/>
<rect x="1378.8" y="375.3" width="1.8" height="40.8" fill="#00001c"/>
<rect x="1459.3" y="434.4" width="1.7" height="48.0" fill="#00001c"/>
<rect x="1398.5" y="330.0" width="2.8" height="17.4" fill="#00001c"/>
<rect x="1481.8" y="461.5" width="2.4" height="23.6" fill="#00001c"/>
<rect x="1429.4" y="377.9" width="2.3" height="12.7" fill="#00001c"/>
<rect x="1432.3" y="463.5" width="3.1" height="49.5" fill="#00001c"/>
<rect x="1469.4" y="469.6" width="1.9" height="41.6" fill="#00001c"/>
<rect x="1399.0" y="472.8" width="2.7" height="45.2" fill="#00001c"/>
<rect x="1424.7" y="296.5" width="2.7" height="32.7" fill="#00001c"/>
<rect x="1451.5" y="442.1" width="1.7" height="49.1" fill="#00001c"/>
<rect x="1413.9" y="471.4" width="3.6" height="53.7" fill="#00001c"/>
<rect x="1479.0" y="480.5" width="2.8" height="38.9" fill="#00001c"/>
<rect x="1421.0" y="291.6" width="2.1" height="43.6" fill="#00001c"/>
<rect x="1397.6" y="352.0" width="2.7" height="25.0" fill="#00001c"/>
<rect x="1409.3" y="425.3" width="2.8" height="15.3" fill="#00001c"/>
<rect x="1467.2" y="313.8" width="3.2" height="48.7" fill="#00001c"/>
<rect x="1442.3" y="412.9" width="2.7" height="48.7" fill="#00001c"/>
<rect x="1422.5" y="397.6" width="2.2" height="41.8" fill="#00001c"/>
<rect x="1403.6" y="405.4" width="2.3" height="38.6" fill="#00001c"/>
<rect x="1383.2" y="386.2" width="2.9" height="50.4" fill="#00001c"/>
<rect x="1387.2" y="292.9" width="3.2" height="21.9" fill="#00001c"/>
<rect x="1458.5" y="461.0" width="2.6" height="15.6" fill="#00001c"/>
<rect x="1463.2" y="432.2" width="2.0" height="23.5" fill="#00001c"/>
<rect x="1474.9" y="458.0" width="2.9" height="48.6" fill="#00001c"/>
<rect x="1493.5" y="333.9" width="3.6" height="40.0" fill="#00001c"/>
<rect x="1411.5" y="404.1" width="1.8" height="32.5" fill="#00001c"/>
<rect x="1422.4" y="313.1" width="2.3" height="24.7" fill="#00001c"/>
<rect x="1472.3" y="396.8" width="3.7" height="41.4" fill="#00001c"/>
<rect x="1447.7" y="356.5" width="2.9" height="25.8" fill="#00001c"/>
<rect x="1464.8" y="337.8" width="3.3" height="30.4" fill="#00001c"/>
<rect x="1408.2" y="418.6" width="2.8" height="26.2" fill="#00001c"/>
<rect x="1384.8" y="477.9" width="2.9" height="25.6" fill="#00001c"/>
<rect x="1452.9" y="431.5" width="3.5" height="53.6" fill="#00001c"/>
<rect x="1463.9" y="427.3" width="3.4" height="39.0" fill="#00001c"/>
<rect x="1389.4" y="357.3" width="2.3" height="44.5" fill="#00001c"/>
<rect x="1472.4" y="351.8" width="2.3" height="52.2" fill="#00001c"/>
<rect x="1449.0" y="416.3" width="1.9" height="54.8" fill="#00001c"/>
<rect x="1441.4" y="293.7" width="3.4" height="27.4" fill="#00001c"/>
<rect x="1452.1" y="380.0" width="3.2" height="29.5" fill="#00001c"/>
<rect x="1487.7" y="292.5" width="2.3" height="25.1" fill="#00001c"/>
<rect x="1459.2" y="397.6" width="1.9" height="44.5" fill="#00001c"/>
<rect x="1385.5" y="383.6" width="1.9" height="19.5" fill="#00001c"/>
<rect x="1453.1" y="416.4" width="2.4" height="28.2" fill="#00001c"/>
<rect x="1466.8" y="317.3" width="2.0" height="15.0" fill="#00001c"/>
<rect x="1390.6" y="397.9" width="3.7" height="17.1" fill="#00001c"/>
<rect x="1388.5" y="338.8" width="3.7" height="47.5" fill="#00001c"/>
<rect x="1418.0" y="374.6" width="1.7" height="25.5" fill="#00001c"/>
<rect x="1487.9" y="415.1" width="2.2" height="47.6" fill="#00001c"/>
<rect x="1396.2" y="427.0" width="2.9" height="16.9" fill="#00001c"/>
<rect x="1417.4" y="467.3" width="3.7" height="30.1" fill="#00001c"/>
<rect x="1467.0" y="297.5" width="2.6" height="33.7" fill="#00001c"/>
<rect x="1433.1" y="401.4" width="2.9" height="27.7" fill="#00001c"/>
<rect x="1398.6" y="398.1" width="1.8" height="20.7" fill="#00001c"/>
<rect x="1401.2" y="422.8" width="1.6" height="29.6" fill="#00001c"/>
<rect x="1392.5" y="484.8" width="2.1" height="52.3" fill="#00001c"/>
<rect x="1473.5" y="299.6" width="3.8" height="23.3" fill="#00001c"/>
<rect x="1444.4" y="432.1" width="2.2" height="36.5" fill="#00001c"/>
<rect x="1442.7" y="345.2" width="2.0" height="15.6" fill="#00001c"/>
<rect x="1412.5" y="484.3" width="3.5" height="31.7" fill="#00001c"/>
<rect x="1456.9" y="311.9" width="1.7" height="49.0" fill="#00001c"/>
<rect x="1480.7" y="364.4" width="3.3" height="48.3" fill="#00001c"/>
<rect x="1401.8" y="477.7" width="2.3" height="43.8" fill="#00001c"/>
<rect x="1429.1" y="343.2" width="2.7" height="28.3" fill="#00001c"/>
<rect x="1448.2" y="447.0" width="1.9" height="43.8" fill="#00001c"/>
<rect x="1448.8" y="462.7" width="3.1" height="36.8" fill="#00001c"/>
<rect x="1390.2" y="307.4" width="1.9" height="44.4" fill="#00001c"/>
<rect x="1482.7" y="334.2" width="2.8" height="30.6" fill="#00001c"/>
<rect x="1420.2" y="313.4" width="3.4" height="50.1" fill="#00001c"/>
<rect x="1450.4" y="317.5" width="3.4" height="36.8" fill="#00001c"/>
<rect x="1408.6" y="401.4" width="2.7" height="32.4" fill="#00001c"/>
<rect x="1417.4" y="378.8" width="2.7" height="39.7" fill="#00001c"/>
<rect x="1489.9" y="326.0" width="2.0" height="39.3" fill="#00001c"/>
<rect x="1445.3" y="345.6" width="2.6" height="44.6" fill="#00001c"/>
<rect x="1471.3" y="412.3" width="3.3" height="41.2" fill="#00001c"/>
<rect x="1444.4" y="382.3" width="2.7" height="17.3" fill="#00001c"/>
<rect x="1440.9" y="379.3" width="3.0" height="41.7" fill="#00001c"/>
<rect x="1409.6" y="425.2" width="3.2" height="22.3" fill="#00001c"/>
<rect x="1418.8" y="396.9" width="3.3" height="23.3" fill="#00001c"/>
<rect x="1383.9" y="455.5" width="2.3" height="48.0" fill="#00001c"/>
<rect x="1454.9" y="357.8" width="3.8" height="16.9" fill="#00001c"/>
<rect x="1477.9" y="319.4" width="1.7" height="31.4" fill="#00001c"/>
<rect x="1490.1" y="395.1" width="2.5" height="38.4" fill="#00001c"/>
<rect x="1403.7" y="315.4" width="3.3" height="37.4" fill="#00001c"/>
<rect x="1452.9" y="404.3" width="2.0" height="42.8" fill="#00001c"/>
<rect x="1464.0" y="353.0" width="2.2" height="44.2" fill="#00001c"/>
<rect x="1489.8" y="451.2" width="2.8" height="17.9" fill="#00001c"/>
<rect x="1409.0" y="334.0" width="1.7" height="38.5" fill="#00001c"/>
<rect x="1393.8" y="466.5" width="2.2" height="26.2" fill="#00001c"/>
<rect x="1417.8" y="447.5" width="3.7" height="49.4" fill="#00001c"/>
<rect x="1459.0" y="461.1" width="3.3" height="21.6" fill="#00001c"/>
<rect x="1386.2" y="317.7" width="3.0" height="47.7" fill="#00001c"/>
<rect x="1464.8" y="329.0" width="2.9" height="41.2" fill="#00001c"/>
<rect x="1448.0" y="327.4" width="3.7" height="13.3" fill="#00001c"/>
<rect x="1493.9" y="313.0" width="3.6" height="40.4" fill="#00001c"/>
<rect x="1381.0" y="383.4" width="2.1" height="50.5" fill="#00001c"/>
<rect x="1467.8" y="356.1" width="3.4" height="13.4" fill="#00001c"/>
<rect x="1452.3" y="450.6" width="3.6" height="34.0" fill="#00001c"/>
<rect x="1423.9" y="371.5" width="2.1" height="38.5" fill="#00001c"/>
<rect x="1415.2" y="297.5" width="3.3" height="22.8" fill="#00001c"/>
<rect x="1439.2" y="309.2" width="2.9" height="51.5" fill="#00001c"/>
<rect x="1471.9" y="368.0" width="2.4" height="47.0" fill="#00001c"/>
<rect x="1454.6" y="431.2" width="3.2" height="49.7" fill="#00001c"/>
<rect x="1378.8" y="329.8" width="1.9" height="40.5" fill="#00001c"/>
<rect x="1468.6" y="397.0" width="3.0" height="25.8" fill="#00001c"/>
<rect x="1397.9" y="438.7" width="3.0" height="40.6" fill="#00001c"/>
<rect x="1487.8" y="428.3" width="3.3" height="44.3" fill="#00001c"/>
<rect x="1482.1" y="461.4" width="3.2" height="53.0" fill="#00001c"/>
<rect x="1436.6" y="365.8" width="3.0" height="18.4" fill="#00001c"/>
<rect x="1452.6" y="486.0" width="2.2" height="17.2" fill="#00001c"/>
<rect x="1389.1" y="453.5" width="1.9" height="40.0" fill="#00001c"/>
<rect x="1422.3" y="332.1" width="1.9" height="29.9" fill="#00001c"/>
<rect x="1394.8" y="431.4" width="3.5" height="54.4" fill="#00001c"/>
<rect x="1401.5" y="325.3" width="3.7" height="30.9" fill="#00001c"/>
<rect x="1399.5" y="448.5" width="2.5" height="22.2" fill="#00001c"/>
<rect x="1470.6" y="344.7" width="2.3" height="15.7" fill="#00001c"/>
<rect x="1462.5" y="320.8" width="3.6" height="46.4" fill="#00001c"/>
<rect x="1492.0" y="311.0" width="2.1" height="23.9" fill="#00001c"/>
<rect x="1385.4" y="374.8" width="3.4" height="42.8" fill="#00001c"/>
<rect x="1472.7" y="349.2" width="1.6" height="42.6" fill="#00001c"/>
<rect x="1404.4" y="487.3" width="2.7" height="22.9" fill="#00001c"/>
<rect x="1454.7" y="313.2" width="1.8" height="49.0" fill="#00001c"/>
<rect x="1423.0" y="469.5" width="3.8" height="31.8" fill="#00001c"/>
<rect x="1462.8" y="452.4" width="3.2" height="46.2" fill="#00001c"/>
<rect x="1390.2" y="440.3" width="2.6" height="54.7" fill="#00001c"/>
<rect x="1442.8" y="442.6" width="2.8" height="16.1" fill="#00001c"/>
<rect x="1469.2" y="450.5" width="3.4" height="40.2" fill="#00001c"/>
<rect x="1476.3" y="444.8" width="2.5" height="12.3" fill="#00001c"/>
<rect x="1443.5" y="475.2" width="3.3" height="53.9" fill="#00001c"/>
<rect x="1393" y="300" width="5" height="55" rx="1.5" fill="#fff"/>
<rect x="1400" y="330" width="4" height="40" rx="1.5" fill="#fff"/>
<rect x="1415" y="345" width="7" height="70" rx="1.5" fill="#fff"/>
<rect x="1421" y="385" width="4" height="55" rx="1.5" fill="#fff"/>
<rect x="1411" y="395" width="4" height="60" rx="1.5" fill="#fff"/>
<rect x="1430" y="330" width="3" height="28" rx="1.5" fill="#fff"/>
<rect x="1470" y="325" width="3" height="22" rx="1.5" fill="#fff"/>
<rect x="1484" y="330" width="3" height="36" rx="1.5" fill="#fff"/>
<rect x="1488" y="400" width="3" height="36" rx="1.5" fill="#fff"/>
<rect x="1478" y="345" width="3" height="14" rx="1.5" fill="#fff"/>
<rect x="1396" y="420" width="3" height="25" rx="1.5" fill="#fff"/>
<rect x="1455" y="318" width="2.5" height="20" rx="1.5" fill="#fff"/>
<rect x="1440" y="360" width="2.5" height="18" rx="1.5" fill="#fff"/>
</g>
<g filter="url(#spec)">
<polygon points="1351.6,488.5 1377.9,495.1 1399.8,486.3 1421.7,481.9 1439.2,479.7 1458.9,478.6 1476.5,481.9 1498.4,490.7 1511.5,497.2 1531.2,503.8 1564.1,508.2 1607.9,509.3 1651.7,508.2 1717.5,506.0 1717.5,617.8 1651.7,622.1 1607.9,626.5 1564.1,633.1 1531.2,641.9 1511.5,652.8 1498.4,666.0 1485.2,676.9 1467.7,670.3 1450.2,663.8 1437.0,655.0 1428.3,648.4 1415.1,657.2 1399.8,670.3 1384.4,676.9 1371.3,687.9 1358.1,701.0 1351.6,722.9" fill="#00f0ff"/>
<polygon points="1351.6,503.8 1377.9,501.6 1399.8,495.1 1421.7,490.7 1439.2,486.3 1458.9,485.2 1476.5,487.4 1498.4,497.2 1511.5,503.8 1531.2,510.4 1564.1,517.0 1607.9,518.1 1651.7,517.0 1717.5,514.8 1717.5,563.0 1673.7,582.7 1651.7,595.8 1607.9,609.0 1564.1,619.9 1531.2,633.1 1511.5,644.0 1498.4,652.8 1485.2,666.0 1472.1,657.2 1450.2,650.6 1437.0,639.7 1428.3,633.1 1415.1,644.0 1399.8,657.2 1384.4,666.0 1371.3,676.9 1358.1,687.9 1351.6,696.6" fill="#00dc00"/>
<polygon points="1351.6,512.6 1366.9,507.1 1388.8,499.4 1410.7,496.2 1432.6,488.0 1454.6,486.3 1476.5,489.1 1498.4,499.9 1511.5,505.6 1531.2,510.8 1553.2,519.6 1586.0,523.5 1629.8,525.7 1673.7,530.1 1700.0,534.5 1700.0,552.0 1651.7,560.8 1607.9,573.9 1575.1,591.5 1542.2,611.2 1520.3,626.5 1498.4,641.9 1485.2,659.4 1472.1,649.5 1450.2,643.0 1437.0,633.1 1428.3,625.4 1415.1,637.5 1399.8,652.8 1384.4,661.6 1371.3,672.5 1358.1,683.5 1351.6,690.1" fill="#a8ee00"/>
<polygon points="1351.6,517.0 1366.9,510.4 1388.8,501.6 1410.7,498.3 1432.6,488.9 1454.6,487.6 1476.5,490.7 1498.4,501.6 1511.5,507.1 1531.2,511.5 1553.2,520.3 1575.1,526.8 1590.4,547.6 1586.0,565.2 1564.1,582.7 1542.2,600.2 1520.3,617.8 1498.4,633.1 1485.2,652.8 1472.1,641.9 1450.2,635.3 1437.0,626.5 1428.3,617.8 1415.1,630.9 1399.8,648.4 1384.4,657.2 1371.3,668.2 1358.1,679.1 1351.6,683.5" fill="#ffee00"/>
<polygon points="1351.6,543.3 1371.3,534.5 1388.8,521.3 1402.0,525.7 1406.3,569.6 1404.2,635.3 1395.4,652.8 1377.9,657.2 1366.9,666.0 1351.6,670.3" fill="#ffa000"/>
<polygon points="1432.6,510.4 1448.0,497.2 1467.7,495.1 1494.0,497.2 1511.5,507.1 1520.3,510.4 1522.5,532.3 1513.7,556.4 1507.1,595.8 1494.0,613.4 1476.5,617.8 1454.6,600.2 1437.0,582.7 1430.5,547.6" fill="#ff8a00"/>
<polygon points="1351.6,563.0 1364.7,565.2 1372.4,582.7 1373.5,635.3 1366.9,652.8 1351.6,657.2" fill="#ff1000"/>
<polygon points="1385.5,573.9 1396.5,569.6 1398.7,613.4 1394.3,635.3 1386.6,630.9" fill="#ff3000"/>
<polygon points="1454.6,510.4 1467.7,501.6 1489.6,501.6 1500.6,517.0 1498.4,552.0 1494.0,591.5 1485.2,604.6 1474.3,600.2 1467.7,569.6 1458.9,543.3" fill="#ff1400"/>
<polygon points="1353.3,589.3 1360.8,591.5 1362.1,635.3 1353.3,639.7" fill="#500000"/>
<polygon points="1473.2,519.2 1481.9,514.8 1483.5,547.6 1481.3,582.7 1475.4,578.3 1473.2,547.6" fill="#4a1400"/>
</g>
<polygon points="1351.6,503.8 1377.9,501.6 1399.8,495.1 1421.7,490.7 1439.2,486.3 1458.9,485.2 1476.5,487.4 1498.4,497.2 1511.5,503.8 1531.2,510.4 1564.1,517.0 1607.9,518.1 1651.7,517.0 1717.5,514.8 1717.5,563.0 1673.7,582.7 1651.7,595.8 1607.9,609.0 1564.1,619.9 1531.2,633.1 1511.5,644.0 1498.4,652.8 1485.2,666.0 1472.1,657.2 1450.2,650.6 1437.0,639.7 1428.3,633.1 1415.1,644.0 1399.8,657.2 1384.4,666.0 1371.3,676.9 1358.1,687.9 1351.6,696.6" fill="#000" filter="url(#streak)"/>
<rect x="1352.6" y="304.5" width="3.4" height="860" fill="#000" />
</g>
<line x1="1352.6" y1="1163.6" x2="1698.6" y2="1163.6" stroke="#b8b8b8" stroke-width="1" stroke-dasharray="6 3"/>
<rect x="1383.3" y="237" width="289.7" height="67.5" fill="#bbf0cf" />
<text x="1469.1" y="261.2" font-size="23.5" textLength="115.4" lengthAdjust="spacingAndGlyphs" fill="#000">Активные</text>
<text x="1410.7" y="291.4" font-size="23.5" textLength="238.2" lengthAdjust="spacingAndGlyphs" fill="#000">интервалы в пласте</text>
<polygon points="1698.9,495 1784.3,500.3 1784.3,557.9 1716.5,568.1 1716.5,616.2 1698.9,621.5" fill="#008a00" stroke="#4a4a4a" stroke-width="0.8"/>
<polygon points="1698.9,689.2 1730.2,695 1730.2,728 1698.9,733.3" fill="#008a00" stroke="#4a4a4a" stroke-width="0.8"/>
<polygon points="1888,235 2027.9,235 2027.9,496.5 1929.4,562.1 1923,575.9 1911.4,616.2 1909.2,639.5 1909.2,691.4 1888,729.5" fill="#00b35f" stroke="#5a5a5a" stroke-width="1"/>
<rect x="1872.4" y="235" width="15.8" height="1129" fill="#0000ff" />
<rect x="1404" y="495" width="294.8" height="134.6" fill="#30c070" fill-opacity="0.17"/>
<rect x="1698.8" y="495" width="345.7" height="134.6" fill="#30c070" fill-opacity="0.24"/>
<rect x="1404" y="689.2" width="294.8" height="49.5" fill="#30c070" fill-opacity="0.17"/>
<rect x="1698.8" y="689.2" width="345.7" height="49.5" fill="#30c070" fill-opacity="0.24"/>
<rect x="5" y="2" width="2040" height="231.5" fill="#fff" />
<rect x="5" y="233" width="2040" height="2.2" fill="#555" />
<line x1="85.5" y1="2" x2="85.5" y2="233.5" stroke="#000" stroke-width="1.3" />
<line x1="372.5" y1="2" x2="372.5" y2="233.5" stroke="#000" stroke-width="1.3" />
<line x1="516.2" y1="2" x2="516.2" y2="233.5" stroke="#000" stroke-width="1.3" />
<line x1="660.3" y1="2" x2="660.3" y2="233.5" stroke="#000" stroke-width="1.3" />
<line x1="834.5" y1="2" x2="834.5" y2="233.5" stroke="#000" stroke-width="1.3" />
<line x1="1355.5" y1="2" x2="1355.5" y2="233.5" stroke="#000" stroke-width="1.3" />
<line x1="1703.5" y1="2" x2="1703.5" y2="233.5" stroke="#000" stroke-width="1.3" />
<line x1="228.6" y1="71.3" x2="228.6" y2="233.5" stroke="#000" stroke-width="1.3" />
<line x1="1876.8" y1="71.3" x2="1876.8" y2="233.5" stroke="#000" stroke-width="1.3" />
<line x1="85.5" y1="37.2" x2="372.5" y2="37.2" stroke="#000" stroke-width="1.2" />
<line x1="85.5" y1="71.3" x2="372.5" y2="71.3" stroke="#000" stroke-width="1.2" />
<line x1="516.2" y1="37.2" x2="2045" y2="37.2" stroke="#000" stroke-width="1.2" />
<line x1="660.3" y1="71.3" x2="2045" y2="71.3" stroke="#000" stroke-width="1.2" />
<text x="10.2" y="58.5" font-size="17" textLength="70.5" lengthAdjust="spacingAndGlyphs" fill="#000">ГЛУБИНА</text>
<text x="29.7" y="102.0" font-size="17" textLength="30.6" lengthAdjust="spacingAndGlyphs" fill="#000">Фут</text>
<text x="144.4" y="24.1" font-size="17" textLength="167.0" lengthAdjust="spacingAndGlyphs" fill="#000">ПРОФИЛЬ ПРИТОКА</text>
<text x="140.5" y="59.8" font-size="17" textLength="183.3" lengthAdjust="spacingAndGlyphs" fill="#000">В СТВОЛЕ СКВАЖИНЫ</text>
<text x="136.8" y="94.6" font-size="17" textLength="43.2" lengthAdjust="spacingAndGlyphs" fill="#000">QZIW</text>
<line x1="120.6" y1="110.8" x2="192" y2="110.8" stroke="#000" stroke-width="2" />
<text x="91.9" y="134.0" font-size="17" textLength="10.1" lengthAdjust="spacingAndGlyphs" fill="#000">0</text>
<text x="128.6" y="134.0" font-size="17" textLength="56.4" lengthAdjust="spacingAndGlyphs" fill="#000">BPD/FT</text>
<text x="194.8" y="134.0" font-size="17" textLength="29.2" lengthAdjust="spacingAndGlyphs" fill="#000">100</text>
<text x="136.8" y="176.3" font-size="17" textLength="41.3" lengthAdjust="spacingAndGlyphs" fill="#000">QZIO</text>
<line x1="120.6" y1="193" x2="192" y2="193" stroke="#000" stroke-width="2" />
<text x="91.9" y="217.1" font-size="17" textLength="10.1" lengthAdjust="spacingAndGlyphs" fill="#000">0</text>
<text x="128.6" y="217.1" font-size="17" textLength="56.4" lengthAdjust="spacingAndGlyphs" fill="#000">BPD/FT</text>
<text x="194.8" y="217.1" font-size="17" textLength="29.2" lengthAdjust="spacingAndGlyphs" fill="#000">100</text>
<text x="278.9" y="94.6" font-size="17" textLength="38.8" lengthAdjust="spacingAndGlyphs" fill="#000">QZW</text>
<line x1="263.1" y1="110.8" x2="334.4" y2="110.8" stroke="#000" stroke-width="2" />
<text x="233.8" y="134.0" font-size="17" textLength="10.2" lengthAdjust="spacingAndGlyphs" fill="#000">0</text>
<text x="283.4" y="134.0" font-size="17" textLength="30.8" lengthAdjust="spacingAndGlyphs" fill="#000">BPD</text>
<text x="328.8" y="134.0" font-size="17" textLength="39.5" lengthAdjust="spacingAndGlyphs" fill="#000">1500</text>
<text x="278.9" y="176.3" font-size="17" textLength="36.2" lengthAdjust="spacingAndGlyphs" fill="#000">QZO</text>
<line x1="263.1" y1="193" x2="334.4" y2="193" stroke="#000" stroke-width="2" />
<text x="233.8" y="217.1" font-size="17" textLength="10.2" lengthAdjust="spacingAndGlyphs" fill="#000">0</text>
<text x="283.4" y="217.1" font-size="17" textLength="30.8" lengthAdjust="spacingAndGlyphs" fill="#000">BPD</text>
<text x="328.8" y="217.1" font-size="17" textLength="39.5" lengthAdjust="spacingAndGlyphs" fill="#000">1500</text>
<text x="382.6" y="60.9" font-size="17" textLength="122.3" lengthAdjust="spacingAndGlyphs" fill="#000">КОНСТРУКЦИЯ</text>
<text x="394.8" y="102.6" font-size="17" textLength="97.9" lengthAdjust="spacingAndGlyphs" fill="#000">СКВАЖИНЫ</text>
<text x="538.4" y="24.1" font-size="17" textLength="104.3" lengthAdjust="spacingAndGlyphs" fill="#000">ЛИТОЛОГИЯ</text>
<rect x="526.7" y="46.2" width="121.9" height="60" fill="#00b35f" stroke="#8c8c8c" stroke-width="1.6"/>
<rect x="556" y="66.3" width="66.8" height="21.6" fill="#fff" />
<text x="564.2" y="82.5" font-size="17" textLength="53.9" lengthAdjust="spacingAndGlyphs" fill="#000">НЕФТЬ</text>
<rect x="526.7" y="127.7" width="121.9" height="60.5" fill="#9dfdfd" stroke="#8c8c8c" stroke-width="1.6"/>
<rect x="560.2" y="148.1" width="56.8" height="20.2" fill="#fff" />
<text x="566.0" y="163.3" font-size="17" textLength="45.8" lengthAdjust="spacingAndGlyphs" fill="#000">ВОДА</text>
<text x="736.0" y="24.1" font-size="17" textLength="18.7" lengthAdjust="spacingAndGlyphs" fill="#000">ГК</text>
<text x="681.4" y="60.9" font-size="17" textLength="131.2" lengthAdjust="spacingAndGlyphs" fill="#000">ГК ОТКР. СТВОЛ</text>
<line x1="703" y1="76.6" x2="789.7" y2="76.6" stroke="#000" stroke-width="1.6" />
<text x="667.3" y="101.5" font-size="17" textLength="10.6" lengthAdjust="spacingAndGlyphs" fill="#000">0</text>
<text x="726.4" y="101.5" font-size="17" textLength="36.3" lengthAdjust="spacingAndGlyphs" fill="#000">gAPI</text>
<text x="796.2" y="101.5" font-size="17" textLength="30.0" lengthAdjust="spacingAndGlyphs" fill="#000">100</text>
<text x="714.2" y="142.5" font-size="17" textLength="67.5" lengthAdjust="spacingAndGlyphs" fill="#000">ПРИТОК</text>
<line x1="703" y1="158.9" x2="789.7" y2="158.9" stroke="#0000ff" stroke-width="1.6" />
<text x="667.3" y="182.8" font-size="17" textLength="10.6" lengthAdjust="spacingAndGlyphs" fill="#000">0</text>
<text x="729.9" y="182.8" font-size="17" textLength="35.9" lengthAdjust="spacingAndGlyphs" fill="#000">gAPI</text>
<text x="805.6" y="182.8" font-size="17" textLength="21.6" lengthAdjust="spacingAndGlyphs" fill="#000">50</text>
<text x="1033.3" y="26.0" font-size="17" textLength="113.9" lengthAdjust="spacingAndGlyphs" fill="#000">ТЕМПЕРАТУРА</text>
<text x="1054.4" y="63.3" font-size="17" textLength="67.2" lengthAdjust="spacingAndGlyphs" fill="#000">ПРИТОК</text>
<line x1="962.6" y1="77" x2="1222" y2="77" stroke="#0000ff" stroke-width="1.6" />
<text x="837.7" y="102.3" font-size="17" textLength="26.3" lengthAdjust="spacingAndGlyphs" fill="#000">219</text>
<text x="1084.7" y="102.3" font-size="17" textLength="14.5" lengthAdjust="spacingAndGlyphs" fill="#000">°F</text>
<text x="1322.0" y="102.3" font-size="17" textLength="28.2" lengthAdjust="spacingAndGlyphs" fill="#000">222</text>
<text x="1488.6" y="25.8" font-size="17" textLength="70.9" lengthAdjust="spacingAndGlyphs" fill="#000">CHORUS</text>
<text x="1489.5" y="59.6" font-size="17" textLength="66.9" lengthAdjust="spacingAndGlyphs" fill="#000">ПРИТОК</text>
<defs><linearGradient id="cbar" x1="0" x2="1" y1="0" y2="0">
<stop offset="0" stop-color="#3a3a9e"/><stop offset="0.10" stop-color="#1010b8"/><stop offset="0.20" stop-color="#0000d8"/>
<stop offset="0.27" stop-color="#4040ff"/><stop offset="0.33" stop-color="#00a0ff"/><stop offset="0.39" stop-color="#00f8ff"/>
<stop offset="0.43" stop-color="#00e090"/><stop offset="0.47" stop-color="#00dc00"/><stop offset="0.50" stop-color="#30e000"/>
<stop offset="0.54" stop-color="#ffff00"/><stop offset="0.62" stop-color="#ffd800"/><stop offset="0.72" stop-color="#ff8000"/>
<stop offset="0.82" stop-color="#ff0800"/><stop offset="0.90" stop-color="#f00000"/><stop offset="1" stop-color="#8c0000"/>
</linearGradient>
<linearGradient id="cfade" x1="0" x2="0" y1="0" y2="1"><stop offset="0" stop-color="#fff" stop-opacity="0"/><stop offset="1" stop-color="#fff" stop-opacity="0.9"/></linearGradient></defs>
<rect x="1440.2" y="82.6" width="171.3" height="24.5" fill="url(#cbar)" />
<rect x="1440.2" y="102.5" width="171.3" height="4.8" fill="url(#cfade)" />
<text x="1404.6" y="101.5" font-size="17" textLength="20.4" lengthAdjust="spacingAndGlyphs" fill="#000">90</text>
<text x="1627.2" y="101.5" font-size="17" textLength="52.0" lengthAdjust="spacingAndGlyphs" fill="#000">133 dB</text>
<text x="1364.9" y="134.6" font-size="17" textLength="20.2" lengthAdjust="spacingAndGlyphs" fill="#000">0.1</text>
<text x="1516.3" y="134.6" font-size="17" textLength="28.3" lengthAdjust="spacingAndGlyphs" fill="#000">kHz</text>
<text x="1662.6" y="134.6" font-size="17" textLength="21.2" lengthAdjust="spacingAndGlyphs" fill="#000">60</text>
<text x="1798.3" y="25.8" font-size="17" textLength="166.4" lengthAdjust="spacingAndGlyphs" fill="#000">ПРОФИЛЬ ПРИТОКА</text>
<text x="1838.7" y="59.6" font-size="17" textLength="80.1" lengthAdjust="spacingAndGlyphs" fill="#000">В ПЛАСТЕ</text>
<text x="1764.0" y="94.7" font-size="17" textLength="45.6" lengthAdjust="spacingAndGlyphs" fill="#000">QZI_R</text>
<line x1="1742.6" y1="110.8" x2="1828.9" y2="110.8" stroke="#777" stroke-width="1.5" />
<text x="1706.7" y="134.6" font-size="17" textLength="10.5" lengthAdjust="spacingAndGlyphs" fill="#000">0</text>
<text x="1766.6" y="134.6" font-size="17" textLength="49.3" lengthAdjust="spacingAndGlyphs" fill="#000">BPD/ft</text>
<text x="1844.8" y="134.6" font-size="17" textLength="21.0" lengthAdjust="spacingAndGlyphs" fill="#000">80</text>
<text x="1936.8" y="94.7" font-size="17" textLength="40.4" lengthAdjust="spacingAndGlyphs" fill="#000">QZ_R</text>
<line x1="1916.2" y1="110.8" x2="2002" y2="110.8" stroke="#777" stroke-width="1.5" />
<text x="1880.6" y="134.6" font-size="17" textLength="10.1" lengthAdjust="spacingAndGlyphs" fill="#000">0</text>
<text x="1940.2" y="134.6" font-size="17" textLength="48.7" lengthAdjust="spacingAndGlyphs" fill="#000">BPD/ft</text>
<text x="2002.9" y="134.6" font-size="17" textLength="38.3" lengthAdjust="spacingAndGlyphs" fill="#000">1500</text>
<rect x="0" y="0" width="2048" height="2.7" fill="#000" />
<rect x="2" y="0" width="3.3" height="1369" fill="#000" />
<rect x="2044.6" y="0" width="2.4" height="1369" fill="#000" />
<rect x="0" y="1365.8" width="2048" height="3.2" fill="#000" />
<rect x="1119.4" y="298.4" width="179.0" height="87.5" fill="#e9e9e9" fill-opacity="0.92"/>
<text x="1146.0" y="334.2" font-size="24.5" textLength="108.4" lengthAdjust="spacingAndGlyphs" fill="#000">Поток по</text>
<text x="1146.0" y="363.4" font-size="24.5" textLength="79.8" lengthAdjust="spacingAndGlyphs" fill="#000">стволу</text>
<line x1="1276.3" y1="336.9" x2="1365.2" y2="414.6" stroke="#666" stroke-width="2.3" />
<circle cx="1276.3" cy="336.9" r="6.4" fill="#6b6b6b"/><circle cx="1365.2" cy="414.6" r="6.4" fill="#6b6b6b"/>
<rect x="1119.4" y="438.1" width="190.19999999999982" height="96.5" fill="#e9e9e9" fill-opacity="0.92"/>
<text x="1144.6" y="479.4" font-size="24.5" textLength="120.6" lengthAdjust="spacingAndGlyphs" fill="#000">Приток из</text>
<text x="1144.6" y="509.4" font-size="24.5" textLength="149.3" lengthAdjust="spacingAndGlyphs" fill="#000">перфорации</text>
<line x1="1272.8" y1="527.9" x2="1361" y2="605" stroke="#666" stroke-width="2.3" />
<circle cx="1272.8" cy="527.9" r="6.4" fill="#6b6b6b"/><circle cx="1361" cy="605" r="6.4" fill="#6b6b6b"/>
<rect x="1129.3" y="769.8" width="210.79999999999995" height="114.90000000000009" fill="#e9e9e9" fill-opacity="0.92"/>
<text x="1155.9" y="807.7" font-size="24.5" textLength="91.1" lengthAdjust="spacingAndGlyphs" fill="#000">Сигнал,</text>
<text x="1155.9" y="837.5" font-size="24.5" textLength="156.8" lengthAdjust="spacingAndGlyphs" fill="#000">характерный</text>
<text x="1155.9" y="867.3" font-size="24.5" textLength="47.6" lengthAdjust="spacingAndGlyphs" fill="#000">ЗКЦ</text>
<line x1="1318.3" y1="809.6" x2="1407.3" y2="887.1" stroke="#666" stroke-width="2.3" />
<circle cx="1318.3" cy="809.6" r="6.4" fill="#6b6b6b"/><circle cx="1407.3" cy="887.1" r="6.4" fill="#6b6b6b"/>
<rect x="783.2" y="972.2" width="219.79999999999995" height="71.0" fill="#e9e9e9" fill-opacity="0.92"/>
<text x="803.0" y="1008.6" font-size="24.5" textLength="171.3" lengthAdjust="spacingAndGlyphs" fill="#000">Аномалия РГЭ</text>
<line x1="878.4" y1="1035.1" x2="706.2" y2="1096.5" stroke="#666" stroke-width="2.3" />
<circle cx="878.4" cy="1035.1" r="6.4" fill="#6b6b6b"/><circle cx="706.2" cy="1096.5" r="6.4" fill="#6b6b6b"/>
<rect x="950" y="1145.4" width="193.5" height="127.29999999999995" fill="#e9e9e9" fill-opacity="0.92"/>
<text x="969.7" y="1184.3" font-size="24.5" textLength="125.7" lengthAdjust="spacingAndGlyphs" fill="#000">Начальная</text>
<text x="969.7" y="1214.1" font-size="24.5" textLength="156.0" lengthAdjust="spacingAndGlyphs" fill="#000">температура</text>
<text x="969.7" y="1244.3" font-size="24.5" textLength="74.3" lengthAdjust="spacingAndGlyphs" fill="#000">пород</text>
<line x1="1004.3" y1="1265.4" x2="955.4" y2="1306.8" stroke="#666" stroke-width="2.3" />
<circle cx="1004.3" cy="1265.4" r="6.4" fill="#6b6b6b"/><circle cx="955.4" cy="1306.8" r="6.4" fill="#6b6b6b"/>
<rect x="1302.3" y="1163.9" width="337.29999999999995" height="176.29999999999995" fill="#e9e9e9" fill-opacity="0.92"/>
<text x="1336.6" y="1197.3" font-size="24.5" textLength="206.9" lengthAdjust="spacingAndGlyphs" fill="#000">Расхождение м/у</text>
<text x="1336.6" y="1227.9" font-size="24.5" textLength="277.4" lengthAdjust="spacingAndGlyphs" fill="#000">температурой притока</text>
<text x="1336.6" y="1258.0" font-size="24.5" textLength="146.6" lengthAdjust="spacingAndGlyphs" fill="#000">и начальной</text>
<text x="1336.6" y="1288.2" font-size="24.5" textLength="222.7" lengthAdjust="spacingAndGlyphs" fill="#000">свидетельствует о</text>
<text x="1336.6" y="1318.5" font-size="24.5" textLength="274.6" lengthAdjust="spacingAndGlyphs" fill="#000">притоке флюида снизу</text>
<line x1="1247.4" y1="1232.8" x2="1311.9" y2="1233.9" stroke="#666" stroke-width="2.3" />
<circle cx="1247.4" cy="1232.8" r="6.4" fill="#6b6b6b"/><circle cx="1311.9" cy="1233.9" r="6.4" fill="#6b6b6b"/>
</svg>
</body></html>
